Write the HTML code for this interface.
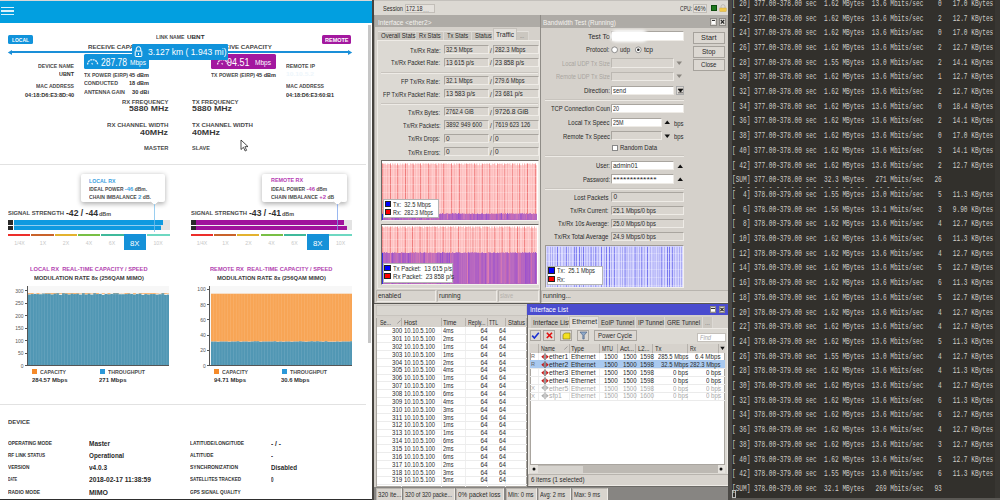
<!DOCTYPE html>
<html><head><meta charset="utf-8"><style>
html,body{margin:0;padding:0;width:1000px;height:500px;overflow:hidden;background:#fff;}
.a{position:absolute;box-sizing:border-box;}
.t{position:absolute;white-space:pre;line-height:1;transform-origin:0 0;}
</style></head><body>
<div class="a" style="left:0px;top:0px;width:372px;height:500px;background:#ffffff;"></div>
<div class="a" style="left:0px;top:0px;width:372px;height:1.2px;background:#d8d8d8;"></div>
<div class="a" style="left:0px;top:1.2px;width:371.5px;height:21.4px;background:#029fe0;"></div>
<div class="a" style="left:1.1px;top:6.7px;width:13.3px;height:1.5px;background:rgba(255,255,255,0.85);"></div>
<div class="a" style="left:1.1px;top:10.3px;width:13.3px;height:1.5px;background:rgba(255,255,255,0.85);"></div>
<div class="a" style="left:1.1px;top:13.9px;width:13.3px;height:1.5px;background:rgba(255,255,255,0.85);"></div>
<div class="a" style="left:368px;top:24.5px;width:2.6px;height:318.5px;background:#c6c6c6;"></div>
<div class="a" style="left:0px;top:498.6px;width:372px;height:1.4px;background:#2e2e2e;"></div>
<div class="a" style="left:8px;top:35px;width:25px;height:9px;background:#1193db;border-radius:1.5px;"></div>
<span class="t" id="t0" style="left:12.00px;top:38.00px;font-family:'Liberation Sans',sans-serif;font-size:5.2px;color:#fff;font-weight:700;transform:scaleX(0.9510);">LOCAL</span>
<div class="a" style="left:321.7px;top:35px;width:29.8px;height:9px;background:#a3189f;border-radius:1.5px;"></div>
<span class="t" id="t1" style="left:324.85px;top:38.00px;font-family:'Liberation Sans',sans-serif;font-size:5.2px;color:#fff;font-weight:700;transform:scaleX(1.0584);">REMOTE</span>
<div class="a" style="left:11px;top:51.4px;width:338px;height:1.3px;background:#1a8fd8;"></div>
<svg class="a" style="left:7px;top:48.5px" width="6" height="7"><path d="M0.8 3.5 L5 1 L5 6 Z" fill="#1a8fd8"/></svg>
<svg class="a" style="left:347px;top:48.5px" width="6" height="7"><path d="M5.2 3.5 L1 1 L1 6 Z" fill="#1a8fd8"/></svg>
<span class="t" id="t2" style="left:156.00px;top:36.00px;font-family:'Liberation Sans',sans-serif;font-size:4.8px;color:#4b4b4b;font-weight:700;transform:scaleX(1.0692);">LINK NAME</span>
<span class="t" id="t3" style="left:186.50px;top:35.00px;font-family:'Liberation Sans',sans-serif;font-size:5.8px;color:#2f2f2f;font-weight:700;transform:scaleX(1.0863);">UBNT</span>
<span class="t" id="t4" style="left:88.00px;top:45.00px;font-family:'Liberation Sans',sans-serif;font-size:5.9px;color:#444;font-weight:700;transform:scaleX(1.0495);">RECEIVE CAPACITY</span>
<span class="t" id="t5" style="left:211.50px;top:45.00px;font-family:'Liberation Sans',sans-serif;font-size:5.9px;color:#444;font-weight:700;transform:scaleX(1.0495);">RECEIVE CAPACITY</span>
<div class="a" style="left:84px;top:54px;width:65px;height:15.2px;background:#1193db;border-radius:1.5px;"></div>
<svg class="a" style="left:86px;top:57.5px" width="13" height="8"><path d="M1.6 6.6 A5 5 0 0 1 11.6 6.6" fill="none" stroke="rgba(255,255,255,0.85)" stroke-width="1.4" stroke-dasharray="2 0.6"/><path d="M6.8 6.4 L5.6 5.2" stroke="rgba(255,255,255,0.8)" stroke-width="1.3"/></svg>
<span class="t" id="t6" style="left:101.00px;top:58.00px;font-family:'Liberation Sans',sans-serif;font-size:10px;color:#fff;font-weight:400;transform:scaleX(0.8498);">287.78</span>
<span class="t" id="t7" style="left:130.00px;top:60.00px;font-family:'Liberation Sans',sans-serif;font-size:6.5px;color:#fff;font-weight:400;transform:scaleX(1.0059);">Mbps</span>
<div class="a" style="left:211px;top:53.5px;width:65px;height:15.5px;background:#a3189f;border-radius:1.5px;"></div>
<svg class="a" style="left:215.5px;top:57.8px" width="13" height="8"><path d="M1.6 6.6 A5 5 0 0 1 11.6 6.6" fill="none" stroke="rgba(255,255,255,0.85)" stroke-width="1.4" stroke-dasharray="2 0.6"/><path d="M6.8 6.4 L5.6 5.2" stroke="rgba(255,255,255,0.8)" stroke-width="1.3"/></svg>
<span class="t" id="t8" style="left:227.00px;top:58.00px;font-family:'Liberation Sans',sans-serif;font-size:10px;color:#fff;font-weight:400;transform:scaleX(0.8989);">94.51</span>
<span class="t" id="t9" style="left:255.00px;top:60.00px;font-family:'Liberation Sans',sans-serif;font-size:6.5px;color:#fff;font-weight:400;transform:scaleX(1.0059);">Mbps</span>
<div class="a" style="left:132px;top:43.5px;width:96.2px;height:16px;background:#1193db;border-radius:1px;"></div>
<svg class="a" style="left:134px;top:45px" width="9" height="13"><path d="M2.2 6 V4 A2.3 2.3 0 0 1 6.8 4 V6" fill="none" stroke="#fff" stroke-width="1"/><rect x="1.2" y="6" width="6.6" height="5.5" rx="0.6" fill="none" stroke="#fff" stroke-width="1"/><rect x="4" y="8" width="1" height="2" fill="#fff"/></svg>
<span class="t" id="t10" style="left:147.50px;top:48.00px;font-family:'Liberation Sans',sans-serif;font-size:8.6px;color:#fff;font-weight:400;transform:scaleX(0.9960);">3.127 km ( 1.943 mi)</span>
<span class="t" id="t11" style="left:38.00px;top:64.00px;font-family:'Liberation Sans',sans-serif;font-size:5.3px;color:#4b4b4b;font-weight:700;transform:scaleX(0.9783);">DEVICE NAME</span>
<span class="t" id="t12" style="left:59.00px;top:72.00px;font-family:'Liberation Sans',sans-serif;font-size:5.8px;color:#2f2f2f;font-weight:700;transform:scaleX(0.9311);">UBNT</span>
<span class="t" id="t13" style="left:36.00px;top:84.00px;font-family:'Liberation Sans',sans-serif;font-size:5.3px;color:#4b4b4b;font-weight:700;transform:scaleX(0.9682);">MAC ADDRESS</span>
<span class="t" id="t14" style="left:25.00px;top:93.00px;font-family:'Liberation Sans',sans-serif;font-size:5.6px;color:#2f2f2f;font-weight:700;">04:18:D6:E3:8D:40</span>
<span class="t" id="t15" style="left:84.00px;top:73.00px;font-family:'Liberation Sans',sans-serif;font-size:5.0px;color:#4b4b4b;font-weight:700;transform:scaleX(1.0218);">TX POWER (EIRP)</span>
<span class="t" id="t16" style="left:129.00px;top:73.00px;font-family:'Liberation Sans',sans-serif;font-size:5.6px;color:#2f2f2f;font-weight:700;transform:scaleX(0.9892);">45 dBm</span>
<span class="t" id="t17" style="left:84.00px;top:81.00px;font-family:'Liberation Sans',sans-serif;font-size:5.0px;color:#4b4b4b;font-weight:700;transform:scaleX(1.0641);">CONDUCTED</span>
<span class="t" id="t18" style="left:129.00px;top:81.00px;font-family:'Liberation Sans',sans-serif;font-size:5.6px;color:#2f2f2f;font-weight:700;transform:scaleX(0.9892);">18 dBm</span>
<span class="t" id="t19" style="left:84.00px;top:90.00px;font-family:'Liberation Sans',sans-serif;font-size:5.0px;color:#4b4b4b;font-weight:700;transform:scaleX(1.0745);">ANTENNA GAIN</span>
<span class="t" id="t20" style="left:132.00px;top:90.00px;font-family:'Liberation Sans',sans-serif;font-size:5.6px;color:#2f2f2f;font-weight:700;transform:scaleX(1.0121);">30 dBi</span>
<span class="t" id="t21" style="left:211.00px;top:73.00px;font-family:'Liberation Sans',sans-serif;font-size:5.0px;color:#4b4b4b;font-weight:700;transform:scaleX(1.0218);">TX POWER (EIRP)</span>
<span class="t" id="t22" style="left:256.00px;top:73.00px;font-family:'Liberation Sans',sans-serif;font-size:5.6px;color:#2f2f2f;font-weight:700;transform:scaleX(0.9892);">45 dBm</span>
<span class="t" id="t23" style="left:286.00px;top:64.00px;font-family:'Liberation Sans',sans-serif;font-size:5.3px;color:#4b4b4b;font-weight:700;transform:scaleX(0.9952);">REMOTE IP</span>
<span class="t" id="t24" style="left:286.00px;top:72.00px;font-family:'Liberation Sans',sans-serif;font-size:5.6px;color:#eef6fb;font-weight:700;transform:scaleX(1.1995);">10.10.5.2</span>
<span class="t" id="t25" style="left:286.00px;top:84.00px;font-family:'Liberation Sans',sans-serif;font-size:5.3px;color:#4b4b4b;font-weight:700;transform:scaleX(0.9682);">MAC ADDRESS</span>
<span class="t" id="t26" style="left:286.00px;top:93.00px;font-family:'Liberation Sans',sans-serif;font-size:5.6px;color:#2f2f2f;font-weight:700;transform:scaleX(0.9771);">04:18:D6:E3:60:B1</span>
<span class="t" id="t27" style="left:121.50px;top:100.00px;font-family:'Liberation Sans',sans-serif;font-size:5.3px;color:#4b4b4b;font-weight:700;transform:scaleX(1.1047);">RX FREQUENCY</span>
<span class="t" id="t28" style="left:128.50px;top:105.00px;font-family:'Liberation Sans',sans-serif;font-size:8.1px;color:#383838;font-weight:700;transform:scaleX(1.0707);">5880 MHz</span>
<span class="t" id="t29" style="left:192.00px;top:100.00px;font-family:'Liberation Sans',sans-serif;font-size:5.3px;color:#4b4b4b;font-weight:700;transform:scaleX(1.1205);">TX FREQUENCY</span>
<span class="t" id="t30" style="left:192.00px;top:105.00px;font-family:'Liberation Sans',sans-serif;font-size:8.1px;color:#383838;font-weight:700;transform:scaleX(1.0843);">5880 MHz</span>
<span class="t" id="t31" style="left:106.50px;top:123.00px;font-family:'Liberation Sans',sans-serif;font-size:5.3px;color:#4b4b4b;font-weight:700;transform:scaleX(1.1502);">RX CHANNEL WIDTH</span>
<span class="t" id="t32" style="left:140.00px;top:129.00px;font-family:'Liberation Sans',sans-serif;font-size:8.1px;color:#383838;font-weight:700;transform:scaleX(1.0920);">40MHz</span>
<span class="t" id="t33" style="left:192.00px;top:123.00px;font-family:'Liberation Sans',sans-serif;font-size:5.3px;color:#4b4b4b;font-weight:700;transform:scaleX(1.1537);">TX CHANNEL WIDTH</span>
<span class="t" id="t34" style="left:192.00px;top:129.00px;font-family:'Liberation Sans',sans-serif;font-size:8.1px;color:#383838;font-weight:700;transform:scaleX(1.0920);">40MHz</span>
<span class="t" id="t35" style="left:143.50px;top:146.00px;font-family:'Liberation Sans',sans-serif;font-size:5.3px;color:#4b4b4b;font-weight:700;transform:scaleX(1.0950);">MASTER</span>
<span class="t" id="t36" style="left:192.00px;top:146.00px;font-family:'Liberation Sans',sans-serif;font-size:5.3px;color:#4b4b4b;font-weight:700;transform:scaleX(1.0416);">SLAVE</span>
<svg class="a" style="left:240px;top:139px" width="9" height="13"><path d="M1 1 L1 10.5 L3.4 8.3 L5.2 12 L6.6 11.3 L4.9 7.7 L8 7.6 Z" fill="#fff" stroke="#222" stroke-width="0.8"/></svg>
<div class="a" style="left:0px;top:164.2px;width:366px;height:1px;background:#e2e2e2;"></div>
<div class="a" style="left:80.5px;top:173.5px;width:84px;height:28.5px;background:#fff;border-radius:2px;box-shadow:0 1.5px 5px rgba(0,0,0,0.32);"></div>
<svg class="a" style="left:149.8px;top:201.0px" width="9" height="6"><path d="M0 0 L4.5 4.6 L9 0" fill="#fff" stroke="rgba(0,0,0,0.12)" stroke-width="0.8"/><rect x="0.5" y="0" width="8" height="1.2" fill="#fff"/></svg>
<span class="t" id="t37" style="left:89.00px;top:179.00px;font-family:'Liberation Sans',sans-serif;font-size:5.4px;color:#3aa0e0;font-weight:700;transform:scaleX(0.9653);">LOCAL RX</span>
<span class="t" id="t38" style="left:89.00px;top:186.00px;font-family:'Liberation Sans',sans-serif;font-size:5.0px;color:#4b4b4b;font-weight:700;transform:scaleX(0.9807);">IDEAL POWER <span style="color:#3aa0e0;font-size:6px">-46</span> dBm.</span>
<span class="t" id="t39" style="left:89.00px;top:194.00px;font-family:'Liberation Sans',sans-serif;font-size:5.0px;color:#4b4b4b;font-weight:700;transform:scaleX(1.0097);">CHAIN IMBALANCE <span style="color:#3aa0e0;font-size:6px">2</span> dB.</span>
<div class="a" style="left:262.3px;top:173.5px;width:84.4px;height:28.7px;background:#fff;border-radius:2px;box-shadow:0 1.5px 5px rgba(0,0,0,0.32);"></div>
<svg class="a" style="left:332.5px;top:201.2px" width="9" height="6"><path d="M0 0 L4.5 4.6 L9 0" fill="#fff" stroke="rgba(0,0,0,0.12)" stroke-width="0.8"/><rect x="0.5" y="0" width="8" height="1.2" fill="#fff"/></svg>
<span class="t" id="t40" style="left:271.00px;top:178.00px;font-family:'Liberation Sans',sans-serif;font-size:5.4px;color:#b63db3;font-weight:700;">REMOTE RX</span>
<span class="t" id="t41" style="left:271.00px;top:186.00px;font-family:'Liberation Sans',sans-serif;font-size:5.0px;color:#4b4b4b;font-weight:700;transform:scaleX(0.9697);">IDEAL POWER <span style="color:#b63db3;font-size:6px">-46</span> dBm</span>
<span class="t" id="t42" style="left:271.00px;top:194.00px;font-family:'Liberation Sans',sans-serif;font-size:5.0px;color:#4b4b4b;font-weight:700;transform:scaleX(0.9919);">CHAIN IMBALANCE <span style="color:#b63db3;font-size:6px">+2</span> dB</span>
<span class="t" id="t43" style="left:8.00px;top:211.00px;font-family:'Liberation Sans',sans-serif;font-size:5.5px;color:#4a4a4a;font-weight:700;transform:scaleX(1.0673);">SIGNAL STRENGTH</span>
<span class="t" id="t44" style="left:66.00px;top:209.00px;font-family:'Liberation Sans',sans-serif;font-size:9.2px;color:#2f2f2f;font-weight:700;transform:scaleX(0.9352);">-42 / -44</span>
<span class="t" id="t45" style="left:99.30px;top:212.00px;font-family:'Liberation Sans',sans-serif;font-size:5.5px;color:#4b4b4b;font-weight:700;transform:scaleX(0.9808);">dBm</span>
<div class="a" style="left:13.5px;top:220px;width:156.0px;height:10px;background:#e3e3e3;"></div>
<div class="a" style="left:8px;top:220px;width:5.2px;height:4.5px;background:#2a2a2a;"></div>
<div class="a" style="left:8px;top:225.8px;width:5.2px;height:4.2px;background:#2a2a2a;"></div>
<div class="a" style="left:13.5px;top:220px;width:149.0px;height:4.5px;background:#0e9ae0;"></div>
<div class="a" style="left:13.5px;top:225.8px;width:147.0px;height:4.2px;background:#0e9ae0;"></div>
<div class="a" style="left:13.5px;top:224.5px;width:147.0px;height:1.3px;background:#8fcdf0;"></div>
<div class="a" style="left:8px;top:234.2px;width:22.4px;height:2.3px;background:#ec2e2a;"></div>
<div class="a" style="left:31.4px;top:234.2px;width:22.200000000000003px;height:2.3px;background:#c9622a;"></div>
<div class="a" style="left:54.6px;top:234.2px;width:22.4px;height:2.3px;background:#e3b22f;"></div>
<div class="a" style="left:78px;top:234.2px;width:22.200000000000003px;height:2.3px;background:#78bf45;"></div>
<div class="a" style="left:101.2px;top:234.2px;width:22.599999999999994px;height:2.3px;background:#3fb99b;"></div>
<div class="a" style="left:146.5px;top:234.2px;width:23.0px;height:2.3px;background:#6ed8c2;"></div>
<div class="a" style="left:124px;top:234.2px;width:22.3px;height:16.3px;background:#1591d8;"></div>
<span class="t" id="t46" style="left:14.16px;top:241.00px;font-family:'Liberation Sans',sans-serif;font-size:5.2px;color:#c8c8c8;font-weight:400;">1/4X</span>
<span class="t" id="t47" style="left:39.82px;top:241.00px;font-family:'Liberation Sans',sans-serif;font-size:5.2px;color:#c8c8c8;font-weight:400;">1X</span>
<span class="t" id="t48" style="left:62.82px;top:241.00px;font-family:'Liberation Sans',sans-serif;font-size:5.2px;color:#c8c8c8;font-weight:400;">2X</span>
<span class="t" id="t49" style="left:85.82px;top:241.00px;font-family:'Liberation Sans',sans-serif;font-size:5.2px;color:#c8c8c8;font-weight:400;">4X</span>
<span class="t" id="t50" style="left:108.82px;top:241.00px;font-family:'Liberation Sans',sans-serif;font-size:5.2px;color:#c8c8c8;font-weight:400;">6X</span>
<span class="t" id="t51" style="left:153.38px;top:241.00px;font-family:'Liberation Sans',sans-serif;font-size:5.2px;color:#c8c8c8;font-weight:400;">10X</span>
<span class="t" id="t52" style="left:130.45px;top:240.00px;font-family:'Liberation Sans',sans-serif;font-size:7.2px;color:#fff;font-weight:400;transform:scaleX(1.0799);">8X</span>
<span class="t" id="t53" style="left:190.50px;top:211.00px;font-family:'Liberation Sans',sans-serif;font-size:5.5px;color:#4a4a4a;font-weight:700;transform:scaleX(1.0673);">SIGNAL STRENGTH</span>
<span class="t" id="t54" style="left:248.50px;top:209.00px;font-family:'Liberation Sans',sans-serif;font-size:9.2px;color:#2f2f2f;font-weight:700;transform:scaleX(0.9352);">-43 / -41</span>
<span class="t" id="t55" style="left:281.80px;top:212.00px;font-family:'Liberation Sans',sans-serif;font-size:5.5px;color:#4b4b4b;font-weight:700;transform:scaleX(0.9808);">dBm</span>
<div class="a" style="left:196.0px;top:220px;width:156.0px;height:10px;background:#e3e3e3;"></div>
<div class="a" style="left:190.5px;top:220px;width:5.2px;height:4.5px;background:#2a2a2a;"></div>
<div class="a" style="left:190.5px;top:225.8px;width:5.2px;height:4.2px;background:#2a2a2a;"></div>
<div class="a" style="left:196.0px;top:220px;width:148.0px;height:4.5px;background:#a0139c;"></div>
<div class="a" style="left:196.0px;top:225.8px;width:150.5px;height:4.2px;background:#a0139c;"></div>
<div class="a" style="left:196.0px;top:224.5px;width:148.0px;height:1.3px;background:rgba(255,255,255,0.45);"></div>
<div class="a" style="left:190.5px;top:234.2px;width:22.4px;height:2.3px;background:#ec2e2a;"></div>
<div class="a" style="left:213.9px;top:234.2px;width:22.200000000000003px;height:2.3px;background:#c9622a;"></div>
<div class="a" style="left:237.1px;top:234.2px;width:22.4px;height:2.3px;background:#e3b22f;"></div>
<div class="a" style="left:260.5px;top:234.2px;width:22.200000000000003px;height:2.3px;background:#78bf45;"></div>
<div class="a" style="left:283.7px;top:234.2px;width:22.599999999999994px;height:2.3px;background:#3fb99b;"></div>
<div class="a" style="left:329.0px;top:234.2px;width:23.0px;height:2.3px;background:#6ed8c2;"></div>
<div class="a" style="left:306.5px;top:234.2px;width:22.3px;height:16.3px;background:#1591d8;"></div>
<span class="t" id="t56" style="left:196.66px;top:241.00px;font-family:'Liberation Sans',sans-serif;font-size:5.2px;color:#c8c8c8;font-weight:400;">1/4X</span>
<span class="t" id="t57" style="left:222.32px;top:241.00px;font-family:'Liberation Sans',sans-serif;font-size:5.2px;color:#c8c8c8;font-weight:400;">1X</span>
<span class="t" id="t58" style="left:245.32px;top:241.00px;font-family:'Liberation Sans',sans-serif;font-size:5.2px;color:#c8c8c8;font-weight:400;">2X</span>
<span class="t" id="t59" style="left:268.32px;top:241.00px;font-family:'Liberation Sans',sans-serif;font-size:5.2px;color:#c8c8c8;font-weight:400;">4X</span>
<span class="t" id="t60" style="left:291.32px;top:241.00px;font-family:'Liberation Sans',sans-serif;font-size:5.2px;color:#c8c8c8;font-weight:400;">6X</span>
<span class="t" id="t61" style="left:335.88px;top:241.00px;font-family:'Liberation Sans',sans-serif;font-size:5.2px;color:#c8c8c8;font-weight:400;">10X</span>
<span class="t" id="t62" style="left:312.95px;top:240.00px;font-family:'Liberation Sans',sans-serif;font-size:7.2px;color:#fff;font-weight:400;transform:scaleX(1.0799);">8X</span>
<div class="a" style="left:154px;top:204px;width:0.7px;height:28px;background:rgba(120,190,235,0.75);"></div>
<div class="a" style="left:336.7px;top:204px;width:0.7px;height:26px;background:rgba(120,160,235,0.75);"></div>
<span class="t" id="t63" style="left:30.00px;top:267.00px;font-family:'Liberation Sans',sans-serif;font-size:5.9px;color:#b23fb0;font-weight:700;transform:scaleX(0.9677);">LOCAL RX  REAL-TIME CAPACITY / SPEED</span>
<span class="t" id="t64" style="left:34.00px;top:276.00px;font-family:'Liberation Sans',sans-serif;font-size:5.6px;color:#3a3a3a;font-weight:700;transform:scaleX(1.0370);">MODULATION RATE 8x (256QAM MIMO)</span>
<div class="a" style="left:27.6px;top:285.7px;width:141.9px;height:79.8px;background:#f7f7f7;"></div>
<svg class="a" style="left:28.400000000000002px;top:285.7px" width="141.10" height="80"><rect x="0" y="7.20" width="141.10" height="1.10" fill="#f8a555"/><rect x="0" y="8.80" width="141.10" height="71.50" fill="#5197b4"/><rect x="0.00" y="8.70" width="2.84" height="1.6" fill="#5197b4"/><rect x="2.20" y="7.20" width="0.6" height="72.60" fill="rgba(255,255,255,0.16)"/><rect x="2.84" y="8.10" width="2.84" height="1.6" fill="#5197b4"/><rect x="5.04" y="7.20" width="0.6" height="72.60" fill="rgba(255,255,255,0.16)"/><rect x="5.68" y="7.70" width="2.84" height="1.6" fill="#5197b4"/><rect x="5.68" y="6.90" width="2.84" height="0.9" fill="#f8f8f8"/><rect x="7.88" y="7.20" width="0.6" height="72.60" fill="rgba(255,255,255,0.16)"/><rect x="8.52" y="8.10" width="2.84" height="1.6" fill="#5197b4"/><rect x="10.72" y="7.20" width="0.6" height="72.60" fill="rgba(255,255,255,0.16)"/><rect x="11.36" y="8.10" width="2.84" height="1.6" fill="#5197b4"/><rect x="11.36" y="7.30" width="2.84" height="0.9" fill="#f8f8f8"/><rect x="13.56" y="7.20" width="0.6" height="72.60" fill="rgba(255,255,255,0.16)"/><rect x="14.20" y="7.30" width="2.84" height="1.6" fill="#5197b4"/><rect x="14.20" y="6.50" width="2.84" height="0.9" fill="#f8f8f8"/><rect x="16.40" y="7.20" width="0.6" height="72.60" fill="rgba(255,255,255,0.16)"/><rect x="17.04" y="7.70" width="2.84" height="1.6" fill="#5197b4"/><rect x="19.24" y="7.20" width="0.6" height="72.60" fill="rgba(255,255,255,0.16)"/><rect x="19.88" y="7.70" width="2.84" height="1.6" fill="#5197b4"/><rect x="22.08" y="7.20" width="0.6" height="72.60" fill="rgba(255,255,255,0.16)"/><rect x="22.72" y="8.70" width="2.84" height="1.6" fill="#5197b4"/><rect x="24.92" y="7.20" width="0.6" height="72.60" fill="rgba(255,255,255,0.16)"/><rect x="25.56" y="7.70" width="2.84" height="1.6" fill="#5197b4"/><rect x="27.76" y="7.20" width="0.6" height="72.60" fill="rgba(255,255,255,0.16)"/><rect x="28.40" y="7.30" width="2.84" height="1.6" fill="#5197b4"/><rect x="30.60" y="7.20" width="0.6" height="72.60" fill="rgba(255,255,255,0.16)"/><rect x="31.24" y="8.70" width="2.84" height="1.6" fill="#5197b4"/><rect x="31.24" y="7.90" width="2.84" height="0.9" fill="#f8f8f8"/><rect x="33.44" y="7.20" width="0.6" height="72.60" fill="rgba(255,255,255,0.16)"/><rect x="34.08" y="7.30" width="2.84" height="1.6" fill="#5197b4"/><rect x="36.28" y="7.20" width="0.6" height="72.60" fill="rgba(255,255,255,0.16)"/><rect x="36.92" y="7.70" width="2.84" height="1.6" fill="#5197b4"/><rect x="39.12" y="7.20" width="0.6" height="72.60" fill="rgba(255,255,255,0.16)"/><rect x="39.76" y="8.70" width="2.84" height="1.6" fill="#5197b4"/><rect x="41.96" y="7.20" width="0.6" height="72.60" fill="rgba(255,255,255,0.16)"/><rect x="42.60" y="7.70" width="2.84" height="1.6" fill="#5197b4"/><rect x="44.80" y="7.20" width="0.6" height="72.60" fill="rgba(255,255,255,0.16)"/><rect x="45.44" y="8.10" width="2.84" height="1.6" fill="#5197b4"/><rect x="47.64" y="7.20" width="0.6" height="72.60" fill="rgba(255,255,255,0.16)"/><rect x="48.28" y="7.70" width="2.84" height="1.6" fill="#5197b4"/><rect x="50.48" y="7.20" width="0.6" height="72.60" fill="rgba(255,255,255,0.16)"/><rect x="51.12" y="8.40" width="2.84" height="1.6" fill="#5197b4"/><rect x="51.12" y="7.60" width="2.84" height="0.9" fill="#f8f8f8"/><rect x="53.32" y="7.20" width="0.6" height="72.60" fill="rgba(255,255,255,0.16)"/><rect x="53.96" y="7.30" width="2.84" height="1.6" fill="#5197b4"/><rect x="56.16" y="7.20" width="0.6" height="72.60" fill="rgba(255,255,255,0.16)"/><rect x="56.80" y="8.70" width="2.84" height="1.6" fill="#5197b4"/><rect x="59.00" y="7.20" width="0.6" height="72.60" fill="rgba(255,255,255,0.16)"/><rect x="59.64" y="7.70" width="2.84" height="1.6" fill="#5197b4"/><rect x="61.84" y="7.20" width="0.6" height="72.60" fill="rgba(255,255,255,0.16)"/><rect x="62.48" y="8.40" width="2.84" height="1.6" fill="#5197b4"/><rect x="62.48" y="7.60" width="2.84" height="0.9" fill="#f8f8f8"/><rect x="64.68" y="7.20" width="0.6" height="72.60" fill="rgba(255,255,255,0.16)"/><rect x="65.32" y="7.30" width="2.84" height="1.6" fill="#5197b4"/><rect x="67.52" y="7.20" width="0.6" height="72.60" fill="rgba(255,255,255,0.16)"/><rect x="68.16" y="8.10" width="2.84" height="1.6" fill="#5197b4"/><rect x="70.36" y="7.20" width="0.6" height="72.60" fill="rgba(255,255,255,0.16)"/><rect x="71.00" y="7.70" width="2.84" height="1.6" fill="#5197b4"/><rect x="71.00" y="6.90" width="2.84" height="0.9" fill="#f8f8f8"/><rect x="73.20" y="7.20" width="0.6" height="72.60" fill="rgba(255,255,255,0.16)"/><rect x="73.84" y="8.70" width="2.84" height="1.6" fill="#5197b4"/><rect x="73.84" y="7.90" width="2.84" height="0.9" fill="#f8f8f8"/><rect x="76.04" y="7.20" width="0.6" height="72.60" fill="rgba(255,255,255,0.16)"/><rect x="76.68" y="7.70" width="2.84" height="1.6" fill="#5197b4"/><rect x="76.68" y="6.90" width="2.84" height="0.9" fill="#f8f8f8"/><rect x="78.88" y="7.20" width="0.6" height="72.60" fill="rgba(255,255,255,0.16)"/><rect x="79.52" y="8.40" width="2.84" height="1.6" fill="#5197b4"/><rect x="81.72" y="7.20" width="0.6" height="72.60" fill="rgba(255,255,255,0.16)"/><rect x="82.36" y="7.70" width="2.84" height="1.6" fill="#5197b4"/><rect x="82.36" y="6.90" width="2.84" height="0.9" fill="#f8f8f8"/><rect x="84.56" y="7.20" width="0.6" height="72.60" fill="rgba(255,255,255,0.16)"/><rect x="85.20" y="7.30" width="2.84" height="1.6" fill="#5197b4"/><rect x="87.40" y="7.20" width="0.6" height="72.60" fill="rgba(255,255,255,0.16)"/><rect x="88.04" y="7.30" width="2.84" height="1.6" fill="#5197b4"/><rect x="90.24" y="7.20" width="0.6" height="72.60" fill="rgba(255,255,255,0.16)"/><rect x="90.88" y="8.10" width="2.84" height="1.6" fill="#5197b4"/><rect x="90.88" y="7.30" width="2.84" height="0.9" fill="#f8f8f8"/><rect x="93.08" y="7.20" width="0.6" height="72.60" fill="rgba(255,255,255,0.16)"/><rect x="93.72" y="8.10" width="2.84" height="1.6" fill="#5197b4"/><rect x="93.72" y="7.30" width="2.84" height="0.9" fill="#f8f8f8"/><rect x="95.92" y="7.20" width="0.6" height="72.60" fill="rgba(255,255,255,0.16)"/><rect x="96.56" y="8.10" width="2.84" height="1.6" fill="#5197b4"/><rect x="98.76" y="7.20" width="0.6" height="72.60" fill="rgba(255,255,255,0.16)"/><rect x="99.40" y="7.70" width="2.84" height="1.6" fill="#5197b4"/><rect x="101.60" y="7.20" width="0.6" height="72.60" fill="rgba(255,255,255,0.16)"/><rect x="102.24" y="7.70" width="2.84" height="1.6" fill="#5197b4"/><rect x="102.24" y="6.90" width="2.84" height="0.9" fill="#f8f8f8"/><rect x="104.44" y="7.20" width="0.6" height="72.60" fill="rgba(255,255,255,0.16)"/><rect x="105.08" y="8.70" width="2.84" height="1.6" fill="#5197b4"/><rect x="107.28" y="7.20" width="0.6" height="72.60" fill="rgba(255,255,255,0.16)"/><rect x="107.92" y="7.70" width="2.84" height="1.6" fill="#5197b4"/><rect x="107.92" y="6.90" width="2.84" height="0.9" fill="#f8f8f8"/><rect x="110.12" y="7.20" width="0.6" height="72.60" fill="rgba(255,255,255,0.16)"/><rect x="110.76" y="7.70" width="2.84" height="1.6" fill="#5197b4"/><rect x="112.96" y="7.20" width="0.6" height="72.60" fill="rgba(255,255,255,0.16)"/><rect x="113.60" y="8.70" width="2.84" height="1.6" fill="#5197b4"/><rect x="113.60" y="7.90" width="2.84" height="0.9" fill="#f8f8f8"/><rect x="115.80" y="7.20" width="0.6" height="72.60" fill="rgba(255,255,255,0.16)"/><rect x="116.44" y="8.10" width="2.84" height="1.6" fill="#5197b4"/><rect x="118.64" y="7.20" width="0.6" height="72.60" fill="rgba(255,255,255,0.16)"/><rect x="119.28" y="8.70" width="2.84" height="1.6" fill="#5197b4"/><rect x="121.48" y="7.20" width="0.6" height="72.60" fill="rgba(255,255,255,0.16)"/><rect x="122.12" y="8.10" width="2.84" height="1.6" fill="#5197b4"/><rect x="124.32" y="7.20" width="0.6" height="72.60" fill="rgba(255,255,255,0.16)"/><rect x="124.96" y="8.10" width="2.84" height="1.6" fill="#5197b4"/><rect x="127.16" y="7.20" width="0.6" height="72.60" fill="rgba(255,255,255,0.16)"/><rect x="127.80" y="8.40" width="2.84" height="1.6" fill="#5197b4"/><rect x="127.80" y="7.60" width="2.84" height="0.9" fill="#f8f8f8"/><rect x="130.00" y="7.20" width="0.6" height="72.60" fill="rgba(255,255,255,0.16)"/><rect x="130.64" y="8.10" width="2.84" height="1.6" fill="#5197b4"/><rect x="130.64" y="7.30" width="2.84" height="0.9" fill="#f8f8f8"/><rect x="132.84" y="7.20" width="0.6" height="72.60" fill="rgba(255,255,255,0.16)"/><rect x="133.48" y="7.30" width="2.84" height="1.6" fill="#5197b4"/><rect x="135.68" y="7.20" width="0.6" height="72.60" fill="rgba(255,255,255,0.16)"/><rect x="136.32" y="8.70" width="2.84" height="1.6" fill="#5197b4"/><rect x="136.32" y="7.90" width="2.84" height="0.9" fill="#f8f8f8"/><rect x="138.52" y="7.20" width="0.6" height="72.60" fill="rgba(255,255,255,0.16)"/><rect x="139.16" y="8.40" width="1.94" height="1.6" fill="#5197b4"/><rect x="139.16" y="7.60" width="1.94" height="0.9" fill="#f8f8f8"/><rect x="141.36" y="7.20" width="0.6" height="72.60" fill="rgba(255,255,255,0.16)"/></svg>
<div class="a" style="left:27.3px;top:285.5px;width:1.0px;height:80.6px;background:#555;"></div>
<div class="a" style="left:24.6px;top:365.3px;width:144.9px;height:0.8px;background:#555;"></div>
<div class="a" style="left:24.6px;top:290.20000000000005px;width:3px;height:0.8px;background:#555;"></div>
<span class="t" id="t65" style="left:15.26px;top:289.00px;font-family:'Liberation Sans',sans-serif;font-size:5.0px;color:#555;font-weight:400;">300</span>
<div class="a" style="left:24.6px;top:302.70000000000005px;width:3px;height:0.8px;background:#555;"></div>
<span class="t" id="t66" style="left:15.26px;top:301.00px;font-family:'Liberation Sans',sans-serif;font-size:5.0px;color:#555;font-weight:400;">250</span>
<div class="a" style="left:24.6px;top:315.20000000000005px;width:3px;height:0.8px;background:#555;"></div>
<span class="t" id="t67" style="left:15.26px;top:314.00px;font-family:'Liberation Sans',sans-serif;font-size:5.0px;color:#555;font-weight:400;">200</span>
<div class="a" style="left:24.6px;top:327.70000000000005px;width:3px;height:0.8px;background:#555;"></div>
<span class="t" id="t68" style="left:15.26px;top:326.00px;font-family:'Liberation Sans',sans-serif;font-size:5.0px;color:#555;font-weight:400;">150</span>
<div class="a" style="left:24.6px;top:340.20000000000005px;width:3px;height:0.8px;background:#555;"></div>
<span class="t" id="t69" style="left:15.26px;top:339.00px;font-family:'Liberation Sans',sans-serif;font-size:5.0px;color:#555;font-weight:400;">100</span>
<div class="a" style="left:24.6px;top:352.70000000000005px;width:3px;height:0.8px;background:#555;"></div>
<span class="t" id="t70" style="left:18.04px;top:351.00px;font-family:'Liberation Sans',sans-serif;font-size:5.0px;color:#555;font-weight:400;">50</span>
<div class="a" style="left:24.6px;top:365.20000000000005px;width:3px;height:0.8px;background:#555;"></div>
<span class="t" id="t71" style="left:20.82px;top:364.00px;font-family:'Liberation Sans',sans-serif;font-size:5.0px;color:#555;font-weight:400;">0</span>
<div class="a" style="left:32px;top:369px;width:5px;height:5px;background:#f58a2a;"></div>
<span class="t" id="t72" style="left:40.00px;top:370.00px;font-family:'Liberation Sans',sans-serif;font-size:5.2px;color:#4b4b4b;font-weight:700;transform:scaleX(0.9946);">CAPACITY</span>
<span class="t" id="t73" style="left:32.00px;top:377.00px;font-family:'Liberation Sans',sans-serif;font-size:6.0px;color:#2f2f2f;font-weight:700;transform:scaleX(0.9947);">284.57 Mbps</span>
<div class="a" style="left:99.5px;top:369px;width:5px;height:5px;background:#2b98d9;"></div>
<span class="t" id="t74" style="left:107.50px;top:370.00px;font-family:'Liberation Sans',sans-serif;font-size:5.2px;color:#4b4b4b;font-weight:700;transform:scaleX(1.0107);">THROUGHPUT</span>
<span class="t" id="t75" style="left:99.00px;top:377.00px;font-family:'Liberation Sans',sans-serif;font-size:6.0px;color:#2f2f2f;font-weight:700;transform:scaleX(1.0057);">271 Mbps</span>
<span class="t" id="t76" style="left:210.00px;top:267.00px;font-family:'Liberation Sans',sans-serif;font-size:5.9px;color:#b23fb0;font-weight:700;transform:scaleX(0.9687);">REMOTE RX  REAL-TIME CAPACITY / SPEED</span>
<span class="t" id="t77" style="left:217.00px;top:276.00px;font-family:'Liberation Sans',sans-serif;font-size:5.6px;color:#3a3a3a;font-weight:700;transform:scaleX(1.0275);">MODULATION RATE 8x (256QAM MIMO)</span>
<div class="a" style="left:209.7px;top:285.7px;width:142.3px;height:79.8px;background:#f7f7f7;"></div>
<svg class="a" style="left:210.5px;top:285.7px" width="141.50" height="80"><rect x="0" y="7.70" width="141.50" height="47.90" fill="#f8a555"/><rect x="0" y="56.10" width="141.50" height="24.20" fill="#5197b4"/><rect x="0.00" y="55.60" width="2.84" height="1.2" fill="#5197b4"/><rect x="2.20" y="7.70" width="0.6" height="72.10" fill="rgba(255,255,255,0.16)"/><rect x="2.84" y="55.60" width="2.84" height="1.2" fill="#5197b4"/><rect x="5.04" y="7.70" width="0.6" height="72.10" fill="rgba(255,255,255,0.16)"/><rect x="5.68" y="55.90" width="2.84" height="1.2" fill="#5197b4"/><rect x="7.88" y="7.70" width="0.6" height="72.10" fill="rgba(255,255,255,0.16)"/><rect x="8.52" y="55.60" width="2.84" height="1.2" fill="#5197b4"/><rect x="10.72" y="7.70" width="0.6" height="72.10" fill="rgba(255,255,255,0.16)"/><rect x="11.36" y="55.60" width="2.84" height="1.2" fill="#5197b4"/><rect x="13.56" y="7.70" width="0.6" height="72.10" fill="rgba(255,255,255,0.16)"/><rect x="14.20" y="55.60" width="2.84" height="1.2" fill="#5197b4"/><rect x="16.40" y="7.70" width="0.6" height="72.10" fill="rgba(255,255,255,0.16)"/><rect x="17.04" y="55.90" width="2.84" height="1.2" fill="#5197b4"/><rect x="19.24" y="7.70" width="0.6" height="72.10" fill="rgba(255,255,255,0.16)"/><rect x="19.88" y="55.60" width="2.84" height="1.2" fill="#5197b4"/><rect x="22.08" y="7.70" width="0.6" height="72.10" fill="rgba(255,255,255,0.16)"/><rect x="22.72" y="55.60" width="2.84" height="1.2" fill="#5197b4"/><rect x="24.92" y="7.70" width="0.6" height="72.10" fill="rgba(255,255,255,0.16)"/><rect x="25.56" y="55.30" width="2.84" height="1.2" fill="#5197b4"/><rect x="27.76" y="7.70" width="0.6" height="72.10" fill="rgba(255,255,255,0.16)"/><rect x="28.40" y="55.90" width="2.84" height="1.2" fill="#5197b4"/><rect x="30.60" y="7.70" width="0.6" height="72.10" fill="rgba(255,255,255,0.16)"/><rect x="31.24" y="55.60" width="2.84" height="1.2" fill="#5197b4"/><rect x="33.44" y="7.70" width="0.6" height="72.10" fill="rgba(255,255,255,0.16)"/><rect x="34.08" y="55.60" width="2.84" height="1.2" fill="#5197b4"/><rect x="36.28" y="7.70" width="0.6" height="72.10" fill="rgba(255,255,255,0.16)"/><rect x="36.92" y="55.90" width="2.84" height="1.2" fill="#5197b4"/><rect x="39.12" y="7.70" width="0.6" height="72.10" fill="rgba(255,255,255,0.16)"/><rect x="39.76" y="55.60" width="2.84" height="1.2" fill="#5197b4"/><rect x="41.96" y="7.70" width="0.6" height="72.10" fill="rgba(255,255,255,0.16)"/><rect x="42.60" y="55.30" width="2.84" height="1.2" fill="#5197b4"/><rect x="44.80" y="7.70" width="0.6" height="72.10" fill="rgba(255,255,255,0.16)"/><rect x="45.44" y="55.30" width="2.84" height="1.2" fill="#5197b4"/><rect x="47.64" y="7.70" width="0.6" height="72.10" fill="rgba(255,255,255,0.16)"/><rect x="48.28" y="55.90" width="2.84" height="1.2" fill="#5197b4"/><rect x="50.48" y="7.70" width="0.6" height="72.10" fill="rgba(255,255,255,0.16)"/><rect x="51.12" y="55.60" width="2.84" height="1.2" fill="#5197b4"/><rect x="53.32" y="7.70" width="0.6" height="72.10" fill="rgba(255,255,255,0.16)"/><rect x="53.96" y="55.60" width="2.84" height="1.2" fill="#5197b4"/><rect x="56.16" y="7.70" width="0.6" height="72.10" fill="rgba(255,255,255,0.16)"/><rect x="56.80" y="55.60" width="2.84" height="1.2" fill="#5197b4"/><rect x="59.00" y="7.70" width="0.6" height="72.10" fill="rgba(255,255,255,0.16)"/><rect x="59.64" y="55.60" width="2.84" height="1.2" fill="#5197b4"/><rect x="61.84" y="7.70" width="0.6" height="72.10" fill="rgba(255,255,255,0.16)"/><rect x="62.48" y="55.30" width="2.84" height="1.2" fill="#5197b4"/><rect x="64.68" y="7.70" width="0.6" height="72.10" fill="rgba(255,255,255,0.16)"/><rect x="65.32" y="55.90" width="2.84" height="1.2" fill="#5197b4"/><rect x="67.52" y="7.70" width="0.6" height="72.10" fill="rgba(255,255,255,0.16)"/><rect x="68.16" y="55.60" width="2.84" height="1.2" fill="#5197b4"/><rect x="70.36" y="7.70" width="0.6" height="72.10" fill="rgba(255,255,255,0.16)"/><rect x="71.00" y="55.90" width="2.84" height="1.2" fill="#5197b4"/><rect x="73.20" y="7.70" width="0.6" height="72.10" fill="rgba(255,255,255,0.16)"/><rect x="73.84" y="55.60" width="2.84" height="1.2" fill="#5197b4"/><rect x="76.04" y="7.70" width="0.6" height="72.10" fill="rgba(255,255,255,0.16)"/><rect x="76.68" y="55.60" width="2.84" height="1.2" fill="#5197b4"/><rect x="78.88" y="7.70" width="0.6" height="72.10" fill="rgba(255,255,255,0.16)"/><rect x="79.52" y="55.90" width="2.84" height="1.2" fill="#5197b4"/><rect x="81.72" y="7.70" width="0.6" height="72.10" fill="rgba(255,255,255,0.16)"/><rect x="82.36" y="55.60" width="2.84" height="1.2" fill="#5197b4"/><rect x="84.56" y="7.70" width="0.6" height="72.10" fill="rgba(255,255,255,0.16)"/><rect x="85.20" y="55.60" width="2.84" height="1.2" fill="#5197b4"/><rect x="87.40" y="7.70" width="0.6" height="72.10" fill="rgba(255,255,255,0.16)"/><rect x="88.04" y="55.30" width="2.84" height="1.2" fill="#5197b4"/><rect x="90.24" y="7.70" width="0.6" height="72.10" fill="rgba(255,255,255,0.16)"/><rect x="90.88" y="55.60" width="2.84" height="1.2" fill="#5197b4"/><rect x="93.08" y="7.70" width="0.6" height="72.10" fill="rgba(255,255,255,0.16)"/><rect x="93.72" y="55.90" width="2.84" height="1.2" fill="#5197b4"/><rect x="95.92" y="7.70" width="0.6" height="72.10" fill="rgba(255,255,255,0.16)"/><rect x="96.56" y="55.60" width="2.84" height="1.2" fill="#5197b4"/><rect x="98.76" y="7.70" width="0.6" height="72.10" fill="rgba(255,255,255,0.16)"/><rect x="99.40" y="55.30" width="2.84" height="1.2" fill="#5197b4"/><rect x="101.60" y="7.70" width="0.6" height="72.10" fill="rgba(255,255,255,0.16)"/><rect x="102.24" y="55.60" width="2.84" height="1.2" fill="#5197b4"/><rect x="104.44" y="7.70" width="0.6" height="72.10" fill="rgba(255,255,255,0.16)"/><rect x="105.08" y="55.30" width="2.84" height="1.2" fill="#5197b4"/><rect x="107.28" y="7.70" width="0.6" height="72.10" fill="rgba(255,255,255,0.16)"/><rect x="107.92" y="55.60" width="2.84" height="1.2" fill="#5197b4"/><rect x="110.12" y="7.70" width="0.6" height="72.10" fill="rgba(255,255,255,0.16)"/><rect x="110.76" y="55.90" width="2.84" height="1.2" fill="#5197b4"/><rect x="112.96" y="7.70" width="0.6" height="72.10" fill="rgba(255,255,255,0.16)"/><rect x="113.60" y="55.30" width="2.84" height="1.2" fill="#5197b4"/><rect x="115.80" y="7.70" width="0.6" height="72.10" fill="rgba(255,255,255,0.16)"/><rect x="116.44" y="55.90" width="2.84" height="1.2" fill="#5197b4"/><rect x="118.64" y="7.70" width="0.6" height="72.10" fill="rgba(255,255,255,0.16)"/><rect x="119.28" y="55.90" width="2.84" height="1.2" fill="#5197b4"/><rect x="121.48" y="7.70" width="0.6" height="72.10" fill="rgba(255,255,255,0.16)"/><rect x="122.12" y="55.90" width="2.84" height="1.2" fill="#5197b4"/><rect x="124.32" y="7.70" width="0.6" height="72.10" fill="rgba(255,255,255,0.16)"/><rect x="124.96" y="55.60" width="2.84" height="1.2" fill="#5197b4"/><rect x="127.16" y="7.70" width="0.6" height="72.10" fill="rgba(255,255,255,0.16)"/><rect x="127.80" y="55.90" width="2.84" height="1.2" fill="#5197b4"/><rect x="130.00" y="7.70" width="0.6" height="72.10" fill="rgba(255,255,255,0.16)"/><rect x="130.64" y="55.60" width="2.84" height="1.2" fill="#5197b4"/><rect x="132.84" y="7.70" width="0.6" height="72.10" fill="rgba(255,255,255,0.16)"/><rect x="133.48" y="55.60" width="2.84" height="1.2" fill="#5197b4"/><rect x="135.68" y="7.70" width="0.6" height="72.10" fill="rgba(255,255,255,0.16)"/><rect x="136.32" y="55.60" width="2.84" height="1.2" fill="#5197b4"/><rect x="138.52" y="7.70" width="0.6" height="72.10" fill="rgba(255,255,255,0.16)"/><rect x="139.16" y="55.30" width="2.34" height="1.2" fill="#5197b4"/><rect x="141.36" y="7.70" width="0.6" height="72.10" fill="rgba(255,255,255,0.16)"/></svg>
<div class="a" style="left:209.39999999999998px;top:285.5px;width:1.0px;height:80.6px;background:#555;"></div>
<div class="a" style="left:206.7px;top:365.3px;width:145.3px;height:0.8px;background:#555;"></div>
<div class="a" style="left:206.7px;top:288.70000000000005px;width:3px;height:0.8px;background:#555;"></div>
<span class="t" id="t78" style="left:197.36px;top:287.00px;font-family:'Liberation Sans',sans-serif;font-size:5.0px;color:#555;font-weight:400;">100</span>
<div class="a" style="left:206.7px;top:304.0px;width:3px;height:0.8px;background:#555;"></div>
<span class="t" id="t79" style="left:200.14px;top:303.00px;font-family:'Liberation Sans',sans-serif;font-size:5.0px;color:#555;font-weight:400;">80</span>
<div class="a" style="left:206.7px;top:319.3px;width:3px;height:0.8px;background:#555;"></div>
<span class="t" id="t80" style="left:200.14px;top:318.00px;font-family:'Liberation Sans',sans-serif;font-size:5.0px;color:#555;font-weight:400;">60</span>
<div class="a" style="left:206.7px;top:334.6px;width:3px;height:0.8px;background:#555;"></div>
<span class="t" id="t81" style="left:200.14px;top:333.00px;font-family:'Liberation Sans',sans-serif;font-size:5.0px;color:#555;font-weight:400;">40</span>
<div class="a" style="left:206.7px;top:349.90000000000003px;width:3px;height:0.8px;background:#555;"></div>
<span class="t" id="t82" style="left:200.14px;top:348.00px;font-family:'Liberation Sans',sans-serif;font-size:5.0px;color:#555;font-weight:400;">20</span>
<div class="a" style="left:206.7px;top:365.20000000000005px;width:3px;height:0.8px;background:#555;"></div>
<span class="t" id="t83" style="left:202.92px;top:364.00px;font-family:'Liberation Sans',sans-serif;font-size:5.0px;color:#555;font-weight:400;">0</span>
<div class="a" style="left:214px;top:369px;width:5px;height:5px;background:#f58a2a;"></div>
<span class="t" id="t84" style="left:222.00px;top:370.00px;font-family:'Liberation Sans',sans-serif;font-size:5.2px;color:#4b4b4b;font-weight:700;transform:scaleX(0.9946);">CAPACITY</span>
<span class="t" id="t85" style="left:214.00px;top:377.00px;font-family:'Liberation Sans',sans-serif;font-size:6.0px;color:#2f2f2f;font-weight:700;transform:scaleX(0.9889);">94.71 Mbps</span>
<div class="a" style="left:281.5px;top:369px;width:5px;height:5px;background:#2b98d9;"></div>
<span class="t" id="t86" style="left:289.50px;top:370.00px;font-family:'Liberation Sans',sans-serif;font-size:5.2px;color:#4b4b4b;font-weight:700;transform:scaleX(1.0107);">THROUGHPUT</span>
<span class="t" id="t87" style="left:281.00px;top:377.00px;font-family:'Liberation Sans',sans-serif;font-size:6.0px;color:#2f2f2f;font-weight:700;transform:scaleX(0.9822);">30.6 Mbps</span>
<div class="a" style="left:0px;top:404.2px;width:366px;height:1px;background:#e2e2e2;"></div>
<span class="t" id="t88" style="left:8.00px;top:419.00px;font-family:'Liberation Sans',sans-serif;font-size:6.0px;color:#3c3c3c;font-weight:700;transform:scaleX(0.9846);">DEVICE</span>
<span class="t" id="t89" style="left:8.00px;top:442.00px;font-family:'Liberation Sans',sans-serif;font-size:4.6px;color:#333;font-weight:700;transform:scaleX(1.0468);">OPERATING MODE</span>
<span class="t" id="t90" style="left:89.00px;top:441.00px;font-family:'Liberation Sans',sans-serif;font-size:6.4px;color:#2a2a2a;font-weight:700;transform:scaleX(1.0190);">Master</span>
<span class="t" id="t91" style="left:190.00px;top:442.00px;font-family:'Liberation Sans',sans-serif;font-size:4.6px;color:#333;font-weight:700;transform:scaleX(1.0650);">LATITUDE/LONGITUDE</span>
<span class="t" id="t92" style="left:271.00px;top:441.00px;font-family:'Liberation Sans',sans-serif;font-size:6.4px;color:#2a2a2a;font-weight:700;transform:scaleX(1.0423);">- / -</span>
<span class="t" id="t93" style="left:8.00px;top:454.00px;font-family:'Liberation Sans',sans-serif;font-size:4.6px;color:#333;font-weight:700;">RF LINK STATUS</span>
<span class="t" id="t94" style="left:89.00px;top:453.00px;font-family:'Liberation Sans',sans-serif;font-size:6.4px;color:#2a2a2a;font-weight:700;transform:scaleX(0.9855);">Operational</span>
<span class="t" id="t95" style="left:190.00px;top:454.00px;font-family:'Liberation Sans',sans-serif;font-size:4.6px;color:#333;font-weight:700;transform:scaleX(1.0503);">ALTITUDE</span>
<span class="t" id="t96" style="left:271.00px;top:453.00px;font-family:'Liberation Sans',sans-serif;font-size:6.4px;color:#2a2a2a;font-weight:700;transform:scaleX(0.9343);">-</span>
<span class="t" id="t97" style="left:8.00px;top:466.00px;font-family:'Liberation Sans',sans-serif;font-size:4.6px;color:#333;font-weight:700;transform:scaleX(1.0393);">VERSION</span>
<span class="t" id="t98" style="left:89.00px;top:465.00px;font-family:'Liberation Sans',sans-serif;font-size:6.4px;color:#2a2a2a;font-weight:700;transform:scaleX(1.0123);">v4.0.3</span>
<span class="t" id="t99" style="left:190.00px;top:466.00px;font-family:'Liberation Sans',sans-serif;font-size:4.6px;color:#333;font-weight:700;transform:scaleX(1.0828);">SYNCHRONIZATION</span>
<span class="t" id="t100" style="left:271.00px;top:465.00px;font-family:'Liberation Sans',sans-serif;font-size:6.4px;color:#2a2a2a;font-weight:700;transform:scaleX(0.9760);">Disabled</span>
<span class="t" id="t101" style="left:8.00px;top:478.00px;font-family:'Liberation Sans',sans-serif;font-size:4.6px;color:#333;font-weight:700;transform:scaleX(0.7394);">DATE</span>
<span class="t" id="t102" style="left:89.00px;top:477.00px;font-family:'Liberation Sans',sans-serif;font-size:6.4px;color:#2a2a2a;font-weight:700;transform:scaleX(1.0385);">2018-02-17 11:38:59</span>
<span class="t" id="t103" style="left:190.00px;top:478.00px;font-family:'Liberation Sans',sans-serif;font-size:4.6px;color:#333;font-weight:700;transform:scaleX(0.9909);">SATELLITES TRACKED</span>
<span class="t" id="t104" style="left:271.00px;top:477.00px;font-family:'Liberation Sans',sans-serif;font-size:6.4px;color:#2a2a2a;font-weight:700;transform:scaleX(0.7018);">0</span>
<span class="t" id="t105" style="left:8.00px;top:491.00px;font-family:'Liberation Sans',sans-serif;font-size:4.6px;color:#333;font-weight:700;transform:scaleX(1.0717);">RADIO MODE</span>
<span class="t" id="t106" style="left:89.00px;top:490.00px;font-family:'Liberation Sans',sans-serif;font-size:6.4px;color:#2a2a2a;font-weight:700;transform:scaleX(1.0916);">MIMO</span>
<span class="t" id="t107" style="left:190.00px;top:491.00px;font-family:'Liberation Sans',sans-serif;font-size:4.6px;color:#333;font-weight:700;transform:scaleX(1.0164);">GPS SIGNAL QUALITY</span>
<div class="a" style="left:373.6px;top:0px;width:355.6px;height:500px;background:#d5d1cb;"></div>
<div class="a" style="left:372.3px;top:0px;width:1.9px;height:500px;background:#46433f;"></div>
<div class="a" style="left:374.2px;top:0px;width:1.8px;height:500px;background:linear-gradient(90deg,#8d8a85,#dedbd6);"></div>
<div class="a" style="left:373.8px;top:0px;width:355.4px;height:15.3px;background:#dcd9d3;"></div>
<div class="a" style="left:373.8px;top:0px;width:355.4px;height:0.8px;background:#c4c1bc;"></div>
<span class="t" id="t108" style="left:383.00px;top:6.00px;font-family:'Liberation Sans',sans-serif;font-size:6.3px;color:#2a2a2a;font-weight:400;transform:scaleX(0.8926);">Session</span>
<div class="a" style="left:404.5px;top:3.5px;width:30px;height:9.2px;background:#e4e1dc;border:1px solid #c2beb8;"></div>
<span class="t" id="t109" style="left:406.00px;top:6.00px;font-family:'Liberation Sans',sans-serif;font-size:6.3px;color:#2a2a2a;font-weight:400;transform:scaleX(0.8564);">172.18</span>
<span class="t" id="t110" style="left:423.00px;top:7.00px;font-family:'Liberation Sans',sans-serif;font-size:6.3px;color:#999;font-weight:400;transform:scaleX(1.1429);">...</span>
<span class="t" id="t111" style="left:680.00px;top:6.00px;font-family:'Liberation Sans',sans-serif;font-size:6.3px;color:#2a2a2a;font-weight:400;transform:scaleX(0.7975);">CPU:</span>
<div class="a" style="left:692.5px;top:4px;width:14.5px;height:9.2px;background:#e4e1dc;border:1px solid #c2beb8;"></div>
<span class="t" id="t112" style="left:693.80px;top:6.00px;font-family:'Liberation Sans',sans-serif;font-size:6.3px;color:#2a2a2a;font-weight:400;transform:scaleX(0.9120);">46%</span>
<div class="a" style="left:711.2px;top:4.5px;width:5.8px;height:6.6px;background:#1f7a1f;border:0.6px solid #0d4d0d;"></div>
<svg class="a" style="left:719px;top:3.5px" width="8" height="8"><path d="M2 4 V2.6 A2 2 0 0 1 6 2.6 V4" fill="none" stroke="#b9b6b0" stroke-width="0.9"/><rect x="0.8" y="4" width="6.4" height="3.6" fill="#f2c94a" stroke="#c9a23a" stroke-width="0.4"/></svg>
<div class="a" style="left:374.6px;top:15.3px;width:166px;height:287.5px;background:#d5d1cb;"></div>
<div class="a" style="left:374.6px;top:15.1px;width:166px;height:12.4px;background:#aeaba6;"></div>
<span class="t" id="t113" style="left:378.10px;top:20.00px;font-family:'Liberation Sans',sans-serif;font-size:6.6px;color:#f4f2ee;font-weight:400;transform:scaleX(0.9928);">Interface &lt;ether2&gt;</span>
<div class="a" style="left:377.5px;top:30.6px;width:38.5px;height:9.4px;background:#cbc7c0;border-right:0.7px solid #dcd9d4;border-top:0.6px solid #e4e1dc;"></div>
<span class="t" id="t114" style="left:380.70px;top:33.00px;font-family:'Liberation Sans',sans-serif;font-size:6.3px;color:#2a2a2a;font-weight:400;transform:scaleX(0.9543);">Overall Stats</span>
<div class="a" style="left:416px;top:30.6px;width:28px;height:9.4px;background:#cbc7c0;border-right:0.7px solid #dcd9d4;border-top:0.6px solid #e4e1dc;"></div>
<span class="t" id="t115" style="left:419.20px;top:33.00px;font-family:'Liberation Sans',sans-serif;font-size:6.3px;color:#2a2a2a;font-weight:400;transform:scaleX(0.9077);">Rx Stats</span>
<div class="a" style="left:444px;top:30.6px;width:28px;height:9.4px;background:#cbc7c0;border-right:0.7px solid #dcd9d4;border-top:0.6px solid #e4e1dc;"></div>
<span class="t" id="t116" style="left:447.20px;top:33.00px;font-family:'Liberation Sans',sans-serif;font-size:6.3px;color:#2a2a2a;font-weight:400;transform:scaleX(0.9180);">Tx Stats</span>
<div class="a" style="left:472px;top:30.6px;width:21px;height:9.4px;background:#cbc7c0;border-right:0.7px solid #dcd9d4;border-top:0.6px solid #e4e1dc;"></div>
<span class="t" id="t117" style="left:475.20px;top:33.00px;font-family:'Liberation Sans',sans-serif;font-size:6.3px;color:#2a2a2a;font-weight:400;transform:scaleX(0.9407);">Status</span>
<div class="a" style="left:493px;top:28.3px;width:24px;height:12px;background:#e2dfda;border:0.7px solid #c6c2bc;border-bottom:none;"></div>
<span class="t" id="t118" style="left:495.50px;top:32.00px;font-family:'Liberation Sans',sans-serif;font-size:6.3px;color:#2a2a2a;font-weight:400;transform:scaleX(1.0492);">Traffic</span>
<div class="a" style="left:517px;top:30.6px;width:12px;height:9.4px;background:#cbc7c0;border-right:0.7px solid #dcd9d4;border-top:0.6px solid #e4e1dc;"></div>
<span class="t" id="t119" style="left:520.20px;top:33.00px;font-family:'Liberation Sans',sans-serif;font-size:6.3px;color:#777;font-weight:400;transform:scaleX(0.7619);">...</span>
<div class="a" style="left:377px;top:40px;width:163px;height:248.5px;background:#dcd9d3;border:0.7px solid #eeebe6;"></div>
<span class="t" id="t120" style="left:409.80px;top:48.00px;font-family:'Liberation Sans',sans-serif;font-size:6.3px;color:#2a2a2a;font-weight:400;transform:scaleX(0.9203);">Tx/Rx Rate:</span>
<div class="a" style="left:444px;top:44.5px;width:44.5px;height:9.2px;background:#d9d5cf;border:1px solid #a9a59f;border-right-color:#eeebe6;border-bottom-color:#eeebe6;"></div>
<span class="t" id="t121" style="left:446.00px;top:47.00px;font-family:'Liberation Sans',sans-serif;font-size:6.5px;color:#2a2a2a;font-weight:400;transform:scaleX(0.8795);">32.5 Mbps</span>
<span class="t" id="t122" style="left:490.00px;top:48.00px;font-family:'Liberation Sans',sans-serif;font-size:6.3px;color:#2a2a2a;font-weight:400;">/</span>
<div class="a" style="left:493px;top:44.5px;width:45.5px;height:9.2px;background:#d9d5cf;border:1px solid #a9a59f;border-right-color:#eeebe6;border-bottom-color:#eeebe6;"></div>
<span class="t" id="t123" style="left:495.00px;top:47.00px;font-family:'Liberation Sans',sans-serif;font-size:6.5px;color:#2a2a2a;font-weight:400;transform:scaleX(0.8979);">282.3 Mbps</span>
<span class="t" id="t124" style="left:391.40px;top:60.00px;font-family:'Liberation Sans',sans-serif;font-size:6.3px;color:#2a2a2a;font-weight:400;transform:scaleX(0.9032);">Tx/Rx Packet Rate:</span>
<div class="a" style="left:444px;top:57.5px;width:44.5px;height:9.2px;background:#d9d5cf;border:1px solid #a9a59f;border-right-color:#eeebe6;border-bottom-color:#eeebe6;"></div>
<span class="t" id="t125" style="left:446.00px;top:60.00px;font-family:'Liberation Sans',sans-serif;font-size:6.5px;color:#2a2a2a;font-weight:400;transform:scaleX(0.9223);">13 615 p/s</span>
<span class="t" id="t126" style="left:490.00px;top:60.00px;font-family:'Liberation Sans',sans-serif;font-size:6.3px;color:#2a2a2a;font-weight:400;">/</span>
<div class="a" style="left:493px;top:57.5px;width:45.5px;height:9.2px;background:#d9d5cf;border:1px solid #a9a59f;border-right-color:#eeebe6;border-bottom-color:#eeebe6;"></div>
<span class="t" id="t127" style="left:495.00px;top:60.00px;font-family:'Liberation Sans',sans-serif;font-size:6.5px;color:#2a2a2a;font-weight:400;transform:scaleX(0.9552);">23 858 p/s</span>
<span class="t" id="t128" style="left:401.40px;top:79.00px;font-family:'Liberation Sans',sans-serif;font-size:6.3px;color:#2a2a2a;font-weight:400;transform:scaleX(0.9109);">FP Tx/Rx Rate:</span>
<div class="a" style="left:444px;top:76.0px;width:44.5px;height:9.2px;background:#d9d5cf;border:1px solid #a9a59f;border-right-color:#eeebe6;border-bottom-color:#eeebe6;"></div>
<span class="t" id="t129" style="left:446.00px;top:78.00px;font-family:'Liberation Sans',sans-serif;font-size:6.5px;color:#2a2a2a;font-weight:400;transform:scaleX(0.8762);">32.1 Mbps</span>
<span class="t" id="t130" style="left:490.00px;top:79.00px;font-family:'Liberation Sans',sans-serif;font-size:6.3px;color:#2a2a2a;font-weight:400;">/</span>
<div class="a" style="left:493px;top:76.0px;width:45.5px;height:9.2px;background:#d9d5cf;border:1px solid #a9a59f;border-right-color:#eeebe6;border-bottom-color:#eeebe6;"></div>
<span class="t" id="t131" style="left:495.00px;top:78.00px;font-family:'Liberation Sans',sans-serif;font-size:6.5px;color:#2a2a2a;font-weight:400;transform:scaleX(0.8684);">279.6 Mbps</span>
<span class="t" id="t132" style="left:383.40px;top:92.00px;font-family:'Liberation Sans',sans-serif;font-size:6.3px;color:#2a2a2a;font-weight:400;transform:scaleX(0.8932);">FP Tx/Rx Packet Rate:</span>
<div class="a" style="left:444px;top:89.1px;width:44.5px;height:9.2px;background:#d9d5cf;border:1px solid #a9a59f;border-right-color:#eeebe6;border-bottom-color:#eeebe6;"></div>
<span class="t" id="t133" style="left:446.00px;top:91.00px;font-family:'Liberation Sans',sans-serif;font-size:6.5px;color:#2a2a2a;font-weight:400;transform:scaleX(0.9552);">13 583 p/s</span>
<span class="t" id="t134" style="left:490.00px;top:92.00px;font-family:'Liberation Sans',sans-serif;font-size:6.3px;color:#2a2a2a;font-weight:400;">/</span>
<div class="a" style="left:493px;top:89.1px;width:45.5px;height:9.2px;background:#d9d5cf;border:1px solid #a9a59f;border-right-color:#eeebe6;border-bottom-color:#eeebe6;"></div>
<span class="t" id="t135" style="left:495.00px;top:91.00px;font-family:'Liberation Sans',sans-serif;font-size:6.5px;color:#2a2a2a;font-weight:400;transform:scaleX(0.9124);">23 681 p/s</span>
<span class="t" id="t136" style="left:408.40px;top:110.00px;font-family:'Liberation Sans',sans-serif;font-size:6.3px;color:#2a2a2a;font-weight:400;transform:scaleX(0.8967);">Tx/Rx Bytes:</span>
<div class="a" style="left:444px;top:107.3px;width:44.5px;height:9.2px;background:#d9d5cf;border:1px solid #a9a59f;border-right-color:#eeebe6;border-bottom-color:#eeebe6;"></div>
<span class="t" id="t137" style="left:446.00px;top:109.00px;font-family:'Liberation Sans',sans-serif;font-size:6.5px;color:#2a2a2a;font-weight:400;transform:scaleX(0.8515);">2762.4 GiB</span>
<span class="t" id="t138" style="left:490.00px;top:110.00px;font-family:'Liberation Sans',sans-serif;font-size:6.3px;color:#2a2a2a;font-weight:400;">/</span>
<div class="a" style="left:493px;top:107.3px;width:45.5px;height:9.2px;background:#d9d5cf;border:1px solid #a9a59f;border-right-color:#eeebe6;border-bottom-color:#eeebe6;"></div>
<span class="t" id="t139" style="left:495.00px;top:109.00px;font-family:'Liberation Sans',sans-serif;font-size:6.5px;color:#2a2a2a;font-weight:400;transform:scaleX(1.0298);">9726.8 GiB</span>
<span class="t" id="t140" style="left:402.90px;top:123.00px;font-family:'Liberation Sans',sans-serif;font-size:6.3px;color:#2a2a2a;font-weight:400;transform:scaleX(0.8856);">Tx/Rx Packets:</span>
<div class="a" style="left:444px;top:120.4px;width:44.5px;height:9.2px;background:#d9d5cf;border:1px solid #a9a59f;border-right-color:#eeebe6;border-bottom-color:#eeebe6;"></div>
<span class="t" id="t141" style="left:446.00px;top:122.00px;font-family:'Liberation Sans',sans-serif;font-size:6.5px;color:#2a2a2a;font-weight:400;transform:scaleX(0.9053);">3892 949 600</span>
<span class="t" id="t142" style="left:490.00px;top:123.00px;font-family:'Liberation Sans',sans-serif;font-size:6.3px;color:#2a2a2a;font-weight:400;">/</span>
<div class="a" style="left:493px;top:120.4px;width:45.5px;height:9.2px;background:#d9d5cf;border:1px solid #a9a59f;border-right-color:#eeebe6;border-bottom-color:#eeebe6;"></div>
<span class="t" id="t143" style="left:495.00px;top:122.00px;font-family:'Liberation Sans',sans-serif;font-size:6.5px;color:#2a2a2a;font-weight:400;transform:scaleX(0.8877);">7619 623 126</span>
<span class="t" id="t144" style="left:408.40px;top:136.00px;font-family:'Liberation Sans',sans-serif;font-size:6.3px;color:#2a2a2a;font-weight:400;transform:scaleX(0.8707);">Tx/Rx Drops:</span>
<div class="a" style="left:444px;top:133.5px;width:44.5px;height:9.2px;background:#d9d5cf;border:1px solid #a9a59f;border-right-color:#eeebe6;border-bottom-color:#eeebe6;"></div>
<span class="t" id="t145" style="left:446.00px;top:136.00px;font-family:'Liberation Sans',sans-serif;font-size:6.5px;color:#2a2a2a;font-weight:400;">0</span>
<span class="t" id="t146" style="left:490.00px;top:136.00px;font-family:'Liberation Sans',sans-serif;font-size:6.3px;color:#2a2a2a;font-weight:400;">/</span>
<div class="a" style="left:493px;top:133.5px;width:45.5px;height:9.2px;background:#d9d5cf;border:1px solid #a9a59f;border-right-color:#eeebe6;border-bottom-color:#eeebe6;"></div>
<span class="t" id="t147" style="left:495.00px;top:136.00px;font-family:'Liberation Sans',sans-serif;font-size:6.5px;color:#2a2a2a;font-weight:400;">0</span>
<span class="t" id="t148" style="left:408.10px;top:150.00px;font-family:'Liberation Sans',sans-serif;font-size:6.3px;color:#2a2a2a;font-weight:400;transform:scaleX(0.8708);">Tx/Rx Errors:</span>
<div class="a" style="left:444px;top:146.8px;width:44.5px;height:9.2px;background:#d9d5cf;border:1px solid #a9a59f;border-right-color:#eeebe6;border-bottom-color:#eeebe6;"></div>
<span class="t" id="t149" style="left:446.00px;top:149.00px;font-family:'Liberation Sans',sans-serif;font-size:6.5px;color:#2a2a2a;font-weight:400;">0</span>
<span class="t" id="t150" style="left:490.00px;top:150.00px;font-family:'Liberation Sans',sans-serif;font-size:6.3px;color:#2a2a2a;font-weight:400;">/</span>
<div class="a" style="left:493px;top:146.8px;width:45.5px;height:9.2px;background:#d9d5cf;border:1px solid #a9a59f;border-right-color:#eeebe6;border-bottom-color:#eeebe6;"></div>
<span class="t" id="t151" style="left:495.00px;top:149.00px;font-family:'Liberation Sans',sans-serif;font-size:6.5px;color:#2a2a2a;font-weight:400;">0</span>
<div class="a" style="left:381px;top:72.3px;width:157px;height:0.8px;background:#c8c4be;"></div>
<div class="a" style="left:381px;top:73.1px;width:157px;height:0.6px;background:#eeebe6;"></div>
<div class="a" style="left:381px;top:103.2px;width:157px;height:0.8px;background:#c8c4be;"></div>
<div class="a" style="left:381px;top:104px;width:157px;height:0.6px;background:#eeebe6;"></div>
<div class="a" style="left:380.5px;top:160px;width:158px;height:61px;background:#fff;border:1px solid #6d6a66;border-right-color:#f2f0ec;border-bottom-color:#f2f0ec;"></div>
<svg class="a" style="left:381.7px;top:161.6px" width="155.6" height="58.400000000000006"><rect x="0" y="1.5" width="155.6" height="58.400000000000006" fill="#ffcaca"/><rect x="0.30" y="1.5" width="0.9" height="58.4" fill="#ee7474"/><rect x="1.20" y="0" width="2.0" height="1.5" fill="#fff"/><rect x="2.80" y="1.5" width="0.6" height="58.4" fill="#f7a0a0"/><rect x="3.70" y="0" width="2.0" height="2.6" fill="#fff"/><rect x="5.50" y="1.5" width="0.6" height="58.4" fill="#f7a0a0"/><rect x="6.40" y="0" width="2.0" height="2.0" fill="#fff"/><rect x="8.00" y="1.5" width="0.9" height="58.4" fill="#ee7474"/><rect x="8.90" y="0" width="1.2" height="3.2" fill="#fff"/><rect x="10.50" y="1.5" width="0.6" height="58.4" fill="#fbb4b4"/><rect x="11.40" y="0" width="1.2" height="2.6" fill="#fff"/><rect x="12.80" y="1.5" width="0.6" height="58.4" fill="#f7a0a0"/><rect x="13.70" y="0" width="2.0" height="3.2" fill="#fff"/><rect x="15.30" y="1.5" width="0.9" height="58.4" fill="#ee7474"/><rect x="16.20" y="0" width="1.6" height="3.2" fill="#fff"/><rect x="17.80" y="1.5" width="0.6" height="58.4" fill="#fbb4b4"/><rect x="18.70" y="0" width="2.0" height="2.6" fill="#fff"/><rect x="20.50" y="1.5" width="0.6" height="58.4" fill="#f7a0a0"/><rect x="21.40" y="0" width="1.2" height="2.6" fill="#fff"/><rect x="23.00" y="1.5" width="0.9" height="58.4" fill="#ee7474"/><rect x="23.90" y="0" width="1.2" height="1.5" fill="#fff"/><rect x="25.30" y="1.5" width="0.6" height="58.4" fill="#f7a0a0"/><rect x="26.20" y="0" width="1.6" height="3.2" fill="#fff"/><rect x="28.00" y="1.5" width="0.6" height="58.4" fill="#fbb4b4"/><rect x="28.90" y="0" width="1.6" height="1.5" fill="#fff"/><rect x="30.70" y="1.5" width="0.9" height="58.4" fill="#ee7474"/><rect x="31.60" y="0" width="1.6" height="2.6" fill="#fff"/><rect x="33.00" y="1.5" width="0.6" height="58.4" fill="#fbb4b4"/><rect x="33.90" y="0" width="2.0" height="1.5" fill="#fff"/><rect x="35.70" y="1.5" width="0.6" height="58.4" fill="#f7a0a0"/><rect x="36.60" y="0" width="2.0" height="1.5" fill="#fff"/><rect x="38.20" y="1.5" width="0.9" height="58.4" fill="#ee7474"/><rect x="39.10" y="0" width="1.2" height="3.2" fill="#fff"/><rect x="40.90" y="1.5" width="0.6" height="58.4" fill="#fbb4b4"/><rect x="41.80" y="0" width="2.0" height="1.5" fill="#fff"/><rect x="43.60" y="1.5" width="0.6" height="58.4" fill="#f7a0a0"/><rect x="44.50" y="0" width="2.0" height="1.5" fill="#fff"/><rect x="46.30" y="1.5" width="0.9" height="58.4" fill="#ee7474"/><rect x="47.20" y="0" width="1.6" height="2.6" fill="#fff"/><rect x="48.60" y="1.5" width="0.6" height="58.4" fill="#f7a0a0"/><rect x="49.50" y="0" width="2.0" height="1.5" fill="#fff"/><rect x="50.90" y="1.5" width="0.6" height="58.4" fill="#fbb4b4"/><rect x="51.80" y="0" width="2.0" height="2.0" fill="#fff"/><rect x="53.60" y="1.5" width="0.9" height="58.4" fill="#ee7474"/><rect x="54.50" y="0" width="1.2" height="3.2" fill="#fff"/><rect x="56.30" y="1.5" width="0.6" height="58.4" fill="#f7a0a0"/><rect x="57.20" y="0" width="1.6" height="1.5" fill="#fff"/><rect x="59.00" y="1.5" width="0.6" height="58.4" fill="#f7a0a0"/><rect x="59.90" y="0" width="2.0" height="2.0" fill="#fff"/><rect x="61.30" y="1.5" width="0.9" height="58.4" fill="#ee7474"/><rect x="62.20" y="0" width="1.2" height="1.5" fill="#fff"/><rect x="63.80" y="1.5" width="0.6" height="58.4" fill="#fbb4b4"/><rect x="64.70" y="0" width="2.0" height="2.0" fill="#fff"/><rect x="66.50" y="1.5" width="0.6" height="58.4" fill="#fbb4b4"/><rect x="67.40" y="0" width="1.6" height="2.0" fill="#fff"/><rect x="69.20" y="1.5" width="0.9" height="58.4" fill="#ee7474"/><rect x="70.10" y="0" width="1.6" height="3.2" fill="#fff"/><rect x="71.90" y="1.5" width="0.6" height="58.4" fill="#f7a0a0"/><rect x="72.80" y="0" width="1.2" height="2.6" fill="#fff"/><rect x="74.40" y="1.5" width="0.6" height="58.4" fill="#fbb4b4"/><rect x="75.30" y="0" width="2.0" height="1.5" fill="#fff"/><rect x="76.90" y="1.5" width="0.9" height="58.4" fill="#ee7474"/><rect x="77.80" y="0" width="1.6" height="2.0" fill="#fff"/><rect x="79.40" y="1.5" width="0.6" height="58.4" fill="#fbb4b4"/><rect x="80.30" y="0" width="2.0" height="2.6" fill="#fff"/><rect x="81.90" y="1.5" width="0.6" height="58.4" fill="#fbb4b4"/><rect x="82.80" y="0" width="2.0" height="1.5" fill="#fff"/><rect x="84.40" y="1.5" width="0.9" height="58.4" fill="#ee7474"/><rect x="85.30" y="0" width="2.0" height="2.0" fill="#fff"/><rect x="86.90" y="1.5" width="0.6" height="58.4" fill="#f7a0a0"/><rect x="87.80" y="0" width="1.6" height="1.5" fill="#fff"/><rect x="89.60" y="1.5" width="0.6" height="58.4" fill="#f7a0a0"/><rect x="90.50" y="0" width="1.2" height="2.6" fill="#fff"/><rect x="92.30" y="1.5" width="0.9" height="58.4" fill="#ee7474"/><rect x="93.20" y="0" width="1.2" height="2.6" fill="#fff"/><rect x="94.60" y="1.5" width="0.6" height="58.4" fill="#f7a0a0"/><rect x="95.50" y="0" width="2.0" height="3.2" fill="#fff"/><rect x="97.30" y="1.5" width="0.6" height="58.4" fill="#fbb4b4"/><rect x="98.20" y="0" width="2.0" height="3.2" fill="#fff"/><rect x="99.80" y="1.5" width="0.9" height="58.4" fill="#ee7474"/><rect x="100.70" y="0" width="2.0" height="2.0" fill="#fff"/><rect x="102.30" y="1.5" width="0.6" height="58.4" fill="#fbb4b4"/><rect x="103.20" y="0" width="1.2" height="2.0" fill="#fff"/><rect x="104.80" y="1.5" width="0.6" height="58.4" fill="#f7a0a0"/><rect x="105.70" y="0" width="1.2" height="2.0" fill="#fff"/><rect x="107.30" y="1.5" width="0.9" height="58.4" fill="#ee7474"/><rect x="108.20" y="0" width="2.0" height="3.2" fill="#fff"/><rect x="109.80" y="1.5" width="0.6" height="58.4" fill="#fbb4b4"/><rect x="110.70" y="0" width="1.2" height="2.0" fill="#fff"/><rect x="112.50" y="1.5" width="0.6" height="58.4" fill="#f7a0a0"/><rect x="113.40" y="0" width="2.0" height="3.2" fill="#fff"/><rect x="115.20" y="1.5" width="0.9" height="58.4" fill="#ee7474"/><rect x="116.10" y="0" width="1.6" height="2.0" fill="#fff"/><rect x="117.50" y="1.5" width="0.6" height="58.4" fill="#f7a0a0"/><rect x="118.40" y="0" width="1.2" height="2.0" fill="#fff"/><rect x="119.80" y="1.5" width="0.6" height="58.4" fill="#f7a0a0"/><rect x="120.70" y="0" width="2.0" height="3.2" fill="#fff"/><rect x="122.30" y="1.5" width="0.9" height="58.4" fill="#ee7474"/><rect x="123.20" y="0" width="1.6" height="2.0" fill="#fff"/><rect x="125.00" y="1.5" width="0.6" height="58.4" fill="#f7a0a0"/><rect x="125.90" y="0" width="1.6" height="1.5" fill="#fff"/><rect x="127.70" y="1.5" width="0.6" height="58.4" fill="#fbb4b4"/><rect x="128.60" y="0" width="1.2" height="3.2" fill="#fff"/><rect x="130.20" y="1.5" width="0.9" height="58.4" fill="#ee7474"/><rect x="131.10" y="0" width="1.2" height="1.5" fill="#fff"/><rect x="132.70" y="1.5" width="0.6" height="58.4" fill="#fbb4b4"/><rect x="133.60" y="0" width="1.2" height="3.2" fill="#fff"/><rect x="135.00" y="1.5" width="0.6" height="58.4" fill="#f7a0a0"/><rect x="135.90" y="0" width="1.6" height="3.2" fill="#fff"/><rect x="137.30" y="1.5" width="0.9" height="58.4" fill="#ee7474"/><rect x="138.20" y="0" width="2.0" height="3.2" fill="#fff"/><rect x="140.00" y="1.5" width="0.6" height="58.4" fill="#fbb4b4"/><rect x="140.90" y="0" width="1.2" height="3.2" fill="#fff"/><rect x="142.30" y="1.5" width="0.6" height="58.4" fill="#f7a0a0"/><rect x="143.20" y="0" width="1.2" height="2.6" fill="#fff"/><rect x="145.00" y="1.5" width="0.9" height="58.4" fill="#ee7474"/><rect x="145.90" y="0" width="2.0" height="1.5" fill="#fff"/><rect x="147.70" y="1.5" width="0.6" height="58.4" fill="#fbb4b4"/><rect x="148.60" y="0" width="1.2" height="2.6" fill="#fff"/><rect x="150.40" y="1.5" width="0.6" height="58.4" fill="#fbb4b4"/><rect x="151.30" y="0" width="1.6" height="2.0" fill="#fff"/><rect x="152.90" y="1.5" width="0.9" height="58.4" fill="#ee7474"/><rect x="153.80" y="0" width="2.0" height="3.2" fill="#fff"/><rect x="155.20" y="1.5" width="0.6" height="58.4" fill="#fbb4b4"/><rect x="156.10" y="0" width="2.0" height="2.6" fill="#fff"/><rect x="0" y="6.0" width="155.6" height="0.6" fill="rgba(255,255,255,0.35)"/><rect x="0" y="14.0" width="155.6" height="0.6" fill="rgba(255,255,255,0.35)"/><rect x="0" y="22.0" width="155.6" height="0.6" fill="rgba(255,255,255,0.35)"/><rect x="0" y="30.0" width="155.6" height="0.6" fill="rgba(255,255,255,0.35)"/><rect x="0" y="38.0" width="155.6" height="0.6" fill="rgba(255,255,255,0.35)"/><rect x="0" y="46.0" width="155.6" height="0.6" fill="rgba(255,255,255,0.35)"/><rect x="0" y="54.0" width="155.6" height="0.6" fill="rgba(255,255,255,0.35)"/><rect x="2.7" y="0" width="0.6" height="58.400000000000006" fill="rgba(255,255,255,0.35)"/><rect x="10.7" y="0" width="0.6" height="58.400000000000006" fill="rgba(255,255,255,0.35)"/><rect x="18.7" y="0" width="0.6" height="58.400000000000006" fill="rgba(255,255,255,0.35)"/><rect x="26.7" y="0" width="0.6" height="58.400000000000006" fill="rgba(255,255,255,0.35)"/><rect x="34.7" y="0" width="0.6" height="58.400000000000006" fill="rgba(255,255,255,0.35)"/><rect x="42.7" y="0" width="0.6" height="58.400000000000006" fill="rgba(255,255,255,0.35)"/><rect x="50.7" y="0" width="0.6" height="58.400000000000006" fill="rgba(255,255,255,0.35)"/><rect x="58.7" y="0" width="0.6" height="58.400000000000006" fill="rgba(255,255,255,0.35)"/><rect x="66.7" y="0" width="0.6" height="58.400000000000006" fill="rgba(255,255,255,0.35)"/><rect x="74.7" y="0" width="0.6" height="58.400000000000006" fill="rgba(255,255,255,0.35)"/><rect x="82.7" y="0" width="0.6" height="58.400000000000006" fill="rgba(255,255,255,0.35)"/><rect x="90.7" y="0" width="0.6" height="58.400000000000006" fill="rgba(255,255,255,0.35)"/><rect x="98.7" y="0" width="0.6" height="58.400000000000006" fill="rgba(255,255,255,0.35)"/><rect x="106.7" y="0" width="0.6" height="58.400000000000006" fill="rgba(255,255,255,0.35)"/><rect x="114.7" y="0" width="0.6" height="58.400000000000006" fill="rgba(255,255,255,0.35)"/><rect x="122.7" y="0" width="0.6" height="58.400000000000006" fill="rgba(255,255,255,0.35)"/><rect x="130.7" y="0" width="0.6" height="58.400000000000006" fill="rgba(255,255,255,0.35)"/><rect x="138.7" y="0" width="0.6" height="58.400000000000006" fill="rgba(255,255,255,0.35)"/><rect x="146.7" y="0" width="0.6" height="58.400000000000006" fill="rgba(255,255,255,0.35)"/><rect x="154.7" y="0" width="0.6" height="58.400000000000006" fill="rgba(255,255,255,0.35)"/></svg>
<svg class="a" style="left:381.7px;top:213.1px" width="155.6" height="6.900000000000006"><rect x="0" y="1" width="155.6" height="6.400000000000006" fill="#b466c0"/><rect x="0.30" y="0" width="1.0" height="6.4" fill="#c070c0"/><rect x="2.10" y="0.5" width="1.0" height="6.4" fill="#aa5ac8"/><rect x="4.30" y="0" width="1.0" height="6.4" fill="#b868c0"/><rect x="6.50" y="0" width="1.0" height="6.4" fill="#e080b0"/><rect x="8.30" y="1.0" width="1.0" height="6.4" fill="#e080b0"/><rect x="9.70" y="0" width="1.0" height="6.4" fill="#9a50d0"/><rect x="11.10" y="0.5" width="1.0" height="6.4" fill="#c070c0"/><rect x="12.90" y="0.5" width="1.0" height="6.4" fill="#9a50d0"/><rect x="14.30" y="0" width="1.0" height="6.4" fill="#9a50d0"/><rect x="15.70" y="1.0" width="1.0" height="6.4" fill="#9a50d0"/><rect x="17.10" y="0" width="1.0" height="6.4" fill="#b868c0"/><rect x="18.90" y="0.5" width="1.0" height="6.4" fill="#aa5ac8"/><rect x="20.30" y="0.5" width="1.0" height="6.4" fill="#d070b0"/><rect x="21.70" y="0" width="1.0" height="6.4" fill="#aa5ac8"/><rect x="23.90" y="0" width="1.0" height="6.4" fill="#b868c0"/><rect x="26.10" y="0.5" width="1.0" height="6.4" fill="#d070b0"/><rect x="27.90" y="1.0" width="1.0" height="6.4" fill="#c070c0"/><rect x="30.10" y="0" width="1.0" height="6.4" fill="#9a50d0"/><rect x="32.30" y="0" width="1.0" height="6.4" fill="#9a50d0"/><rect x="34.10" y="0" width="1.0" height="6.4" fill="#e080b0"/><rect x="35.90" y="1.0" width="1.0" height="6.4" fill="#d070b0"/><rect x="37.30" y="1.0" width="1.0" height="6.4" fill="#aa5ac8"/><rect x="39.10" y="0" width="1.0" height="6.4" fill="#9a50d0"/><rect x="40.50" y="0.5" width="1.0" height="6.4" fill="#e080b0"/><rect x="42.70" y="0" width="1.0" height="6.4" fill="#e080b0"/><rect x="44.10" y="0" width="1.0" height="6.4" fill="#b868c0"/><rect x="46.30" y="0.5" width="1.0" height="6.4" fill="#aa5ac8"/><rect x="47.70" y="1.0" width="1.0" height="6.4" fill="#e080b0"/><rect x="49.90" y="0" width="1.0" height="6.4" fill="#c070c0"/><rect x="51.70" y="1.0" width="1.0" height="6.4" fill="#c070c0"/><rect x="53.50" y="0" width="1.0" height="6.4" fill="#b868c0"/><rect x="55.70" y="1.0" width="1.0" height="6.4" fill="#d070b0"/><rect x="57.90" y="0.5" width="1.0" height="6.4" fill="#aa5ac8"/><rect x="60.10" y="0" width="1.0" height="6.4" fill="#aa5ac8"/><rect x="61.50" y="1.0" width="1.0" height="6.4" fill="#c070c0"/><rect x="63.70" y="0" width="1.0" height="6.4" fill="#b868c0"/><rect x="65.10" y="0" width="1.0" height="6.4" fill="#e080b0"/><rect x="66.50" y="0.5" width="1.0" height="6.4" fill="#aa5ac8"/><rect x="68.30" y="0.5" width="1.0" height="6.4" fill="#b868c0"/><rect x="70.10" y="0" width="1.0" height="6.4" fill="#aa5ac8"/><rect x="71.50" y="0" width="1.0" height="6.4" fill="#c070c0"/><rect x="72.90" y="0" width="1.0" height="6.4" fill="#b868c0"/><rect x="74.30" y="0.5" width="1.0" height="6.4" fill="#aa5ac8"/><rect x="76.10" y="0" width="1.0" height="6.4" fill="#9a50d0"/><rect x="77.50" y="0.5" width="1.0" height="6.4" fill="#9a50d0"/><rect x="79.70" y="0" width="1.0" height="6.4" fill="#b868c0"/><rect x="81.50" y="0" width="1.0" height="6.4" fill="#e080b0"/><rect x="83.70" y="0.5" width="1.0" height="6.4" fill="#c070c0"/><rect x="85.50" y="0.5" width="1.0" height="6.4" fill="#d070b0"/><rect x="86.90" y="0.5" width="1.0" height="6.4" fill="#b868c0"/><rect x="88.30" y="1.0" width="1.0" height="6.4" fill="#aa5ac8"/><rect x="89.70" y="0" width="1.0" height="6.4" fill="#d070b0"/><rect x="91.50" y="0.5" width="1.0" height="6.4" fill="#aa5ac8"/><rect x="93.30" y="1.0" width="1.0" height="6.4" fill="#c070c0"/><rect x="95.10" y="0.5" width="1.0" height="6.4" fill="#9a50d0"/><rect x="97.30" y="1.0" width="1.0" height="6.4" fill="#aa5ac8"/><rect x="99.50" y="0" width="1.0" height="6.4" fill="#9a50d0"/><rect x="101.70" y="1.0" width="1.0" height="6.4" fill="#c070c0"/><rect x="103.90" y="0.5" width="1.0" height="6.4" fill="#9a50d0"/><rect x="105.70" y="0.5" width="1.0" height="6.4" fill="#aa5ac8"/><rect x="107.90" y="1.0" width="1.0" height="6.4" fill="#c070c0"/><rect x="109.30" y="0" width="1.0" height="6.4" fill="#d070b0"/><rect x="110.70" y="0.5" width="1.0" height="6.4" fill="#d070b0"/><rect x="112.50" y="0.5" width="1.0" height="6.4" fill="#d070b0"/><rect x="114.30" y="0.5" width="1.0" height="6.4" fill="#aa5ac8"/><rect x="116.10" y="0.5" width="1.0" height="6.4" fill="#d070b0"/><rect x="117.50" y="0" width="1.0" height="6.4" fill="#b868c0"/><rect x="118.90" y="0" width="1.0" height="6.4" fill="#9a50d0"/><rect x="120.70" y="0" width="1.0" height="6.4" fill="#e080b0"/><rect x="122.90" y="0" width="1.0" height="6.4" fill="#d070b0"/><rect x="125.10" y="0" width="1.0" height="6.4" fill="#9a50d0"/><rect x="127.30" y="0" width="1.0" height="6.4" fill="#b868c0"/><rect x="128.70" y="0" width="1.0" height="6.4" fill="#d070b0"/><rect x="130.50" y="0" width="1.0" height="6.4" fill="#d070b0"/><rect x="132.70" y="0.5" width="1.0" height="6.4" fill="#c070c0"/><rect x="134.50" y="0" width="1.0" height="6.4" fill="#e080b0"/><rect x="136.70" y="0" width="1.0" height="6.4" fill="#c070c0"/><rect x="138.50" y="0" width="1.0" height="6.4" fill="#9a50d0"/><rect x="139.90" y="0" width="1.0" height="6.4" fill="#b868c0"/><rect x="141.70" y="0" width="1.0" height="6.4" fill="#c070c0"/><rect x="143.90" y="0" width="1.0" height="6.4" fill="#d070b0"/><rect x="145.30" y="1.0" width="1.0" height="6.4" fill="#aa5ac8"/><rect x="146.70" y="0" width="1.0" height="6.4" fill="#b868c0"/><rect x="148.10" y="0" width="1.0" height="6.4" fill="#b868c0"/><rect x="149.90" y="1.0" width="1.0" height="6.4" fill="#c070c0"/><rect x="151.30" y="0" width="1.0" height="6.4" fill="#d070b0"/><rect x="153.50" y="0.5" width="1.0" height="6.4" fill="#b868c0"/><rect x="155.30" y="0" width="1.0" height="6.4" fill="#d070b0"/></svg>
<div class="a" style="left:381.7px;top:213.6px;width:0.9px;height:6.400000000000006px;background:#3030e0;"></div>
<div class="a" style="left:383.4px;top:199.2px;width:56px;height:18.6px;background:#fff;border:0.7px solid #b5b5b5;"></div>
<div class="a" style="left:384.79999999999995px;top:201.0px;width:6.6px;height:6.4px;background:#0000ff;border:0.5px solid #222;"></div>
<div class="a" style="left:384.79999999999995px;top:209.0px;width:6.6px;height:6.4px;background:#ff0000;border:0.5px solid #222;"></div>
<span class="t" id="t152" style="left:393.40px;top:202.00px;font-family:'Liberation Sans',sans-serif;font-size:6.3px;color:#2a2a2a;font-weight:400;transform:scaleX(0.9122);">Tx:  32.5 Mbps</span>
<span class="t" id="t153" style="left:393.40px;top:210.00px;font-family:'Liberation Sans',sans-serif;font-size:6.3px;color:#2a2a2a;font-weight:400;transform:scaleX(0.8722);">Rx:  282.3 Mbps</span>
<div class="a" style="left:380.5px;top:223.8px;width:158px;height:61px;background:#fff;border:1px solid #6d6a66;border-right-color:#f2f0ec;border-bottom-color:#f2f0ec;"></div>
<svg class="a" style="left:381.7px;top:225.4px" width="155.6" height="58.400000000000006"><rect x="0" y="1.5" width="155.6" height="58.400000000000006" fill="#ffcaca"/><rect x="0.30" y="1.5" width="0.9" height="58.4" fill="#ee7474"/><rect x="1.20" y="0" width="1.6" height="2.6" fill="#fff"/><rect x="2.80" y="1.5" width="0.6" height="58.4" fill="#f7a0a0"/><rect x="3.70" y="0" width="2.0" height="1.5" fill="#fff"/><rect x="5.50" y="1.5" width="0.6" height="58.4" fill="#f7a0a0"/><rect x="6.40" y="0" width="2.0" height="2.6" fill="#fff"/><rect x="7.80" y="1.5" width="0.9" height="58.4" fill="#ee7474"/><rect x="8.70" y="0" width="1.2" height="1.5" fill="#fff"/><rect x="10.30" y="1.5" width="0.6" height="58.4" fill="#fbb4b4"/><rect x="11.20" y="0" width="1.6" height="2.6" fill="#fff"/><rect x="12.80" y="1.5" width="0.6" height="58.4" fill="#f7a0a0"/><rect x="13.70" y="0" width="2.0" height="2.0" fill="#fff"/><rect x="15.30" y="1.5" width="0.9" height="58.4" fill="#ee7474"/><rect x="16.20" y="0" width="1.2" height="3.2" fill="#fff"/><rect x="18.00" y="1.5" width="0.6" height="58.4" fill="#fbb4b4"/><rect x="18.90" y="0" width="1.2" height="2.6" fill="#fff"/><rect x="20.30" y="1.5" width="0.6" height="58.4" fill="#fbb4b4"/><rect x="21.20" y="0" width="2.0" height="1.5" fill="#fff"/><rect x="22.80" y="1.5" width="0.9" height="58.4" fill="#ee7474"/><rect x="23.70" y="0" width="2.0" height="3.2" fill="#fff"/><rect x="25.10" y="1.5" width="0.6" height="58.4" fill="#fbb4b4"/><rect x="26.00" y="0" width="2.0" height="1.5" fill="#fff"/><rect x="27.60" y="1.5" width="0.6" height="58.4" fill="#fbb4b4"/><rect x="28.50" y="0" width="1.2" height="3.2" fill="#fff"/><rect x="30.10" y="1.5" width="0.9" height="58.4" fill="#ee7474"/><rect x="31.00" y="0" width="2.0" height="2.6" fill="#fff"/><rect x="32.60" y="1.5" width="0.6" height="58.4" fill="#f7a0a0"/><rect x="33.50" y="0" width="1.6" height="1.5" fill="#fff"/><rect x="34.90" y="1.5" width="0.6" height="58.4" fill="#fbb4b4"/><rect x="35.80" y="0" width="1.2" height="1.5" fill="#fff"/><rect x="37.60" y="1.5" width="0.9" height="58.4" fill="#ee7474"/><rect x="38.50" y="0" width="2.0" height="2.0" fill="#fff"/><rect x="39.90" y="1.5" width="0.6" height="58.4" fill="#f7a0a0"/><rect x="40.80" y="0" width="1.6" height="3.2" fill="#fff"/><rect x="42.20" y="1.5" width="0.6" height="58.4" fill="#f7a0a0"/><rect x="43.10" y="0" width="2.0" height="2.0" fill="#fff"/><rect x="44.70" y="1.5" width="0.9" height="58.4" fill="#ee7474"/><rect x="45.60" y="0" width="1.6" height="2.0" fill="#fff"/><rect x="47.20" y="1.5" width="0.6" height="58.4" fill="#f7a0a0"/><rect x="48.10" y="0" width="2.0" height="2.0" fill="#fff"/><rect x="49.90" y="1.5" width="0.6" height="58.4" fill="#f7a0a0"/><rect x="50.80" y="0" width="1.2" height="1.5" fill="#fff"/><rect x="52.60" y="1.5" width="0.9" height="58.4" fill="#ee7474"/><rect x="53.50" y="0" width="1.2" height="2.0" fill="#fff"/><rect x="55.30" y="1.5" width="0.6" height="58.4" fill="#fbb4b4"/><rect x="56.20" y="0" width="1.2" height="3.2" fill="#fff"/><rect x="58.00" y="1.5" width="0.6" height="58.4" fill="#f7a0a0"/><rect x="58.90" y="0" width="1.6" height="2.0" fill="#fff"/><rect x="60.70" y="1.5" width="0.9" height="58.4" fill="#ee7474"/><rect x="61.60" y="0" width="2.0" height="2.0" fill="#fff"/><rect x="63.40" y="1.5" width="0.6" height="58.4" fill="#f7a0a0"/><rect x="64.30" y="0" width="1.2" height="3.2" fill="#fff"/><rect x="65.90" y="1.5" width="0.6" height="58.4" fill="#f7a0a0"/><rect x="66.80" y="0" width="1.6" height="2.0" fill="#fff"/><rect x="68.40" y="1.5" width="0.9" height="58.4" fill="#ee7474"/><rect x="69.30" y="0" width="1.2" height="2.0" fill="#fff"/><rect x="71.10" y="1.5" width="0.6" height="58.4" fill="#fbb4b4"/><rect x="72.00" y="0" width="1.2" height="2.6" fill="#fff"/><rect x="73.60" y="1.5" width="0.6" height="58.4" fill="#fbb4b4"/><rect x="74.50" y="0" width="1.6" height="3.2" fill="#fff"/><rect x="75.90" y="1.5" width="0.9" height="58.4" fill="#ee7474"/><rect x="76.80" y="0" width="1.6" height="1.5" fill="#fff"/><rect x="78.40" y="1.5" width="0.6" height="58.4" fill="#fbb4b4"/><rect x="79.30" y="0" width="2.0" height="2.0" fill="#fff"/><rect x="81.10" y="1.5" width="0.6" height="58.4" fill="#fbb4b4"/><rect x="82.00" y="0" width="2.0" height="3.2" fill="#fff"/><rect x="83.40" y="1.5" width="0.9" height="58.4" fill="#ee7474"/><rect x="84.30" y="0" width="1.6" height="2.0" fill="#fff"/><rect x="85.90" y="1.5" width="0.6" height="58.4" fill="#f7a0a0"/><rect x="86.80" y="0" width="1.6" height="1.5" fill="#fff"/><rect x="88.20" y="1.5" width="0.6" height="58.4" fill="#f7a0a0"/><rect x="89.10" y="0" width="1.6" height="3.2" fill="#fff"/><rect x="90.50" y="1.5" width="0.9" height="58.4" fill="#ee7474"/><rect x="91.40" y="0" width="2.0" height="2.6" fill="#fff"/><rect x="93.00" y="1.5" width="0.6" height="58.4" fill="#f7a0a0"/><rect x="93.90" y="0" width="2.0" height="1.5" fill="#fff"/><rect x="95.30" y="1.5" width="0.6" height="58.4" fill="#fbb4b4"/><rect x="96.20" y="0" width="2.0" height="1.5" fill="#fff"/><rect x="97.60" y="1.5" width="0.9" height="58.4" fill="#ee7474"/><rect x="98.50" y="0" width="1.6" height="3.2" fill="#fff"/><rect x="100.10" y="1.5" width="0.6" height="58.4" fill="#fbb4b4"/><rect x="101.00" y="0" width="1.6" height="1.5" fill="#fff"/><rect x="102.40" y="1.5" width="0.6" height="58.4" fill="#f7a0a0"/><rect x="103.30" y="0" width="1.6" height="1.5" fill="#fff"/><rect x="104.70" y="1.5" width="0.9" height="58.4" fill="#ee7474"/><rect x="105.60" y="0" width="2.0" height="2.0" fill="#fff"/><rect x="107.00" y="1.5" width="0.6" height="58.4" fill="#f7a0a0"/><rect x="107.90" y="0" width="1.6" height="3.2" fill="#fff"/><rect x="109.70" y="1.5" width="0.6" height="58.4" fill="#f7a0a0"/><rect x="110.60" y="0" width="1.2" height="3.2" fill="#fff"/><rect x="112.40" y="1.5" width="0.9" height="58.4" fill="#ee7474"/><rect x="113.30" y="0" width="1.2" height="3.2" fill="#fff"/><rect x="114.70" y="1.5" width="0.6" height="58.4" fill="#fbb4b4"/><rect x="115.60" y="0" width="1.6" height="2.6" fill="#fff"/><rect x="117.40" y="1.5" width="0.6" height="58.4" fill="#f7a0a0"/><rect x="118.30" y="0" width="1.2" height="2.0" fill="#fff"/><rect x="119.70" y="1.5" width="0.9" height="58.4" fill="#ee7474"/><rect x="120.60" y="0" width="1.6" height="2.6" fill="#fff"/><rect x="122.40" y="1.5" width="0.6" height="58.4" fill="#f7a0a0"/><rect x="123.30" y="0" width="1.2" height="1.5" fill="#fff"/><rect x="125.10" y="1.5" width="0.6" height="58.4" fill="#fbb4b4"/><rect x="126.00" y="0" width="2.0" height="1.5" fill="#fff"/><rect x="127.40" y="1.5" width="0.9" height="58.4" fill="#ee7474"/><rect x="128.30" y="0" width="2.0" height="2.6" fill="#fff"/><rect x="129.90" y="1.5" width="0.6" height="58.4" fill="#fbb4b4"/><rect x="130.80" y="0" width="1.6" height="2.6" fill="#fff"/><rect x="132.40" y="1.5" width="0.6" height="58.4" fill="#f7a0a0"/><rect x="133.30" y="0" width="1.6" height="3.2" fill="#fff"/><rect x="135.10" y="1.5" width="0.9" height="58.4" fill="#ee7474"/><rect x="136.00" y="0" width="1.6" height="2.6" fill="#fff"/><rect x="137.40" y="1.5" width="0.6" height="58.4" fill="#f7a0a0"/><rect x="138.30" y="0" width="2.0" height="3.2" fill="#fff"/><rect x="139.90" y="1.5" width="0.6" height="58.4" fill="#fbb4b4"/><rect x="140.80" y="0" width="2.0" height="2.6" fill="#fff"/><rect x="142.20" y="1.5" width="0.9" height="58.4" fill="#ee7474"/><rect x="143.10" y="0" width="1.6" height="3.2" fill="#fff"/><rect x="144.70" y="1.5" width="0.6" height="58.4" fill="#fbb4b4"/><rect x="145.60" y="0" width="1.6" height="1.5" fill="#fff"/><rect x="147.00" y="1.5" width="0.6" height="58.4" fill="#fbb4b4"/><rect x="147.90" y="0" width="2.0" height="3.2" fill="#fff"/><rect x="149.50" y="1.5" width="0.9" height="58.4" fill="#ee7474"/><rect x="150.40" y="0" width="1.6" height="3.2" fill="#fff"/><rect x="152.20" y="1.5" width="0.6" height="58.4" fill="#f7a0a0"/><rect x="153.10" y="0" width="1.6" height="3.2" fill="#fff"/><rect x="154.90" y="1.5" width="0.6" height="58.4" fill="#fbb4b4"/><rect x="155.80" y="0" width="1.2" height="1.5" fill="#fff"/><rect x="0" y="6.0" width="155.6" height="0.6" fill="rgba(255,255,255,0.35)"/><rect x="0" y="14.0" width="155.6" height="0.6" fill="rgba(255,255,255,0.35)"/><rect x="0" y="22.0" width="155.6" height="0.6" fill="rgba(255,255,255,0.35)"/><rect x="0" y="30.0" width="155.6" height="0.6" fill="rgba(255,255,255,0.35)"/><rect x="0" y="38.0" width="155.6" height="0.6" fill="rgba(255,255,255,0.35)"/><rect x="0" y="46.0" width="155.6" height="0.6" fill="rgba(255,255,255,0.35)"/><rect x="0" y="54.0" width="155.6" height="0.6" fill="rgba(255,255,255,0.35)"/><rect x="2.7" y="0" width="0.6" height="58.400000000000006" fill="rgba(255,255,255,0.35)"/><rect x="10.7" y="0" width="0.6" height="58.400000000000006" fill="rgba(255,255,255,0.35)"/><rect x="18.7" y="0" width="0.6" height="58.400000000000006" fill="rgba(255,255,255,0.35)"/><rect x="26.7" y="0" width="0.6" height="58.400000000000006" fill="rgba(255,255,255,0.35)"/><rect x="34.7" y="0" width="0.6" height="58.400000000000006" fill="rgba(255,255,255,0.35)"/><rect x="42.7" y="0" width="0.6" height="58.400000000000006" fill="rgba(255,255,255,0.35)"/><rect x="50.7" y="0" width="0.6" height="58.400000000000006" fill="rgba(255,255,255,0.35)"/><rect x="58.7" y="0" width="0.6" height="58.400000000000006" fill="rgba(255,255,255,0.35)"/><rect x="66.7" y="0" width="0.6" height="58.400000000000006" fill="rgba(255,255,255,0.35)"/><rect x="74.7" y="0" width="0.6" height="58.400000000000006" fill="rgba(255,255,255,0.35)"/><rect x="82.7" y="0" width="0.6" height="58.400000000000006" fill="rgba(255,255,255,0.35)"/><rect x="90.7" y="0" width="0.6" height="58.400000000000006" fill="rgba(255,255,255,0.35)"/><rect x="98.7" y="0" width="0.6" height="58.400000000000006" fill="rgba(255,255,255,0.35)"/><rect x="106.7" y="0" width="0.6" height="58.400000000000006" fill="rgba(255,255,255,0.35)"/><rect x="114.7" y="0" width="0.6" height="58.400000000000006" fill="rgba(255,255,255,0.35)"/><rect x="122.7" y="0" width="0.6" height="58.400000000000006" fill="rgba(255,255,255,0.35)"/><rect x="130.7" y="0" width="0.6" height="58.400000000000006" fill="rgba(255,255,255,0.35)"/><rect x="138.7" y="0" width="0.6" height="58.400000000000006" fill="rgba(255,255,255,0.35)"/><rect x="146.7" y="0" width="0.6" height="58.400000000000006" fill="rgba(255,255,255,0.35)"/><rect x="154.7" y="0" width="0.6" height="58.400000000000006" fill="rgba(255,255,255,0.35)"/></svg>
<svg class="a" style="left:381.7px;top:252.1px" width="155.6" height="31.700000000000017"><rect x="0" y="1" width="155.6" height="31.200000000000017" fill="#b466c0"/><rect x="0.30" y="0" width="1.0" height="31.2" fill="#b868c0"/><rect x="2.10" y="0" width="1.0" height="31.2" fill="#b868c0"/><rect x="4.30" y="0" width="1.0" height="31.2" fill="#aa5ac8"/><rect x="6.10" y="1.0" width="1.0" height="31.2" fill="#b868c0"/><rect x="7.90" y="0.5" width="1.0" height="31.2" fill="#e080b0"/><rect x="10.10" y="0.5" width="1.0" height="31.2" fill="#9a50d0"/><rect x="12.30" y="0" width="1.0" height="31.2" fill="#b868c0"/><rect x="13.70" y="0.5" width="1.0" height="31.2" fill="#d070b0"/><rect x="15.10" y="1.0" width="1.0" height="31.2" fill="#c070c0"/><rect x="17.30" y="1.0" width="1.0" height="31.2" fill="#aa5ac8"/><rect x="19.10" y="0" width="1.0" height="31.2" fill="#d070b0"/><rect x="20.50" y="0.5" width="1.0" height="31.2" fill="#9a50d0"/><rect x="22.70" y="0.5" width="1.0" height="31.2" fill="#aa5ac8"/><rect x="24.10" y="1.0" width="1.0" height="31.2" fill="#c070c0"/><rect x="25.90" y="1.0" width="1.0" height="31.2" fill="#9a50d0"/><rect x="27.70" y="0.5" width="1.0" height="31.2" fill="#aa5ac8"/><rect x="29.10" y="0.5" width="1.0" height="31.2" fill="#d070b0"/><rect x="31.30" y="0" width="1.0" height="31.2" fill="#d070b0"/><rect x="33.10" y="0" width="1.0" height="31.2" fill="#c070c0"/><rect x="34.50" y="0" width="1.0" height="31.2" fill="#e080b0"/><rect x="36.70" y="0" width="1.0" height="31.2" fill="#e080b0"/><rect x="38.10" y="0" width="1.0" height="31.2" fill="#b868c0"/><rect x="39.50" y="1.0" width="1.0" height="31.2" fill="#d070b0"/><rect x="41.70" y="0" width="1.0" height="31.2" fill="#9a50d0"/><rect x="43.50" y="0" width="1.0" height="31.2" fill="#e080b0"/><rect x="45.30" y="0.5" width="1.0" height="31.2" fill="#e080b0"/><rect x="47.50" y="0" width="1.0" height="31.2" fill="#d070b0"/><rect x="49.30" y="0.5" width="1.0" height="31.2" fill="#e080b0"/><rect x="51.50" y="0.5" width="1.0" height="31.2" fill="#e080b0"/><rect x="53.30" y="1.0" width="1.0" height="31.2" fill="#c070c0"/><rect x="55.10" y="0.5" width="1.0" height="31.2" fill="#aa5ac8"/><rect x="56.50" y="0" width="1.0" height="31.2" fill="#b868c0"/><rect x="57.90" y="1.0" width="1.0" height="31.2" fill="#9a50d0"/><rect x="60.10" y="0" width="1.0" height="31.2" fill="#9a50d0"/><rect x="61.50" y="0" width="1.0" height="31.2" fill="#b868c0"/><rect x="62.90" y="1.0" width="1.0" height="31.2" fill="#b868c0"/><rect x="64.70" y="0.5" width="1.0" height="31.2" fill="#9a50d0"/><rect x="66.90" y="0.5" width="1.0" height="31.2" fill="#9a50d0"/><rect x="68.30" y="1.0" width="1.0" height="31.2" fill="#d070b0"/><rect x="70.10" y="0" width="1.0" height="31.2" fill="#c070c0"/><rect x="72.30" y="1.0" width="1.0" height="31.2" fill="#aa5ac8"/><rect x="73.70" y="0" width="1.0" height="31.2" fill="#aa5ac8"/><rect x="75.50" y="0" width="1.0" height="31.2" fill="#9a50d0"/><rect x="77.30" y="0" width="1.0" height="31.2" fill="#b868c0"/><rect x="79.10" y="1.0" width="1.0" height="31.2" fill="#c070c0"/><rect x="81.30" y="0.5" width="1.0" height="31.2" fill="#c070c0"/><rect x="82.70" y="0" width="1.0" height="31.2" fill="#c070c0"/><rect x="84.90" y="0.5" width="1.0" height="31.2" fill="#e080b0"/><rect x="86.30" y="0" width="1.0" height="31.2" fill="#9a50d0"/><rect x="88.50" y="0" width="1.0" height="31.2" fill="#b868c0"/><rect x="89.90" y="0" width="1.0" height="31.2" fill="#b868c0"/><rect x="91.70" y="0" width="1.0" height="31.2" fill="#c070c0"/><rect x="93.50" y="0" width="1.0" height="31.2" fill="#aa5ac8"/><rect x="95.70" y="0.5" width="1.0" height="31.2" fill="#aa5ac8"/><rect x="97.50" y="1.0" width="1.0" height="31.2" fill="#d070b0"/><rect x="99.70" y="0" width="1.0" height="31.2" fill="#aa5ac8"/><rect x="101.50" y="1.0" width="1.0" height="31.2" fill="#b868c0"/><rect x="103.30" y="1.0" width="1.0" height="31.2" fill="#9a50d0"/><rect x="104.70" y="0.5" width="1.0" height="31.2" fill="#e080b0"/><rect x="106.10" y="0" width="1.0" height="31.2" fill="#e080b0"/><rect x="107.50" y="0" width="1.0" height="31.2" fill="#aa5ac8"/><rect x="109.30" y="1.0" width="1.0" height="31.2" fill="#c070c0"/><rect x="111.50" y="0" width="1.0" height="31.2" fill="#9a50d0"/><rect x="113.30" y="1.0" width="1.0" height="31.2" fill="#b868c0"/><rect x="115.10" y="0.5" width="1.0" height="31.2" fill="#aa5ac8"/><rect x="117.30" y="0.5" width="1.0" height="31.2" fill="#b868c0"/><rect x="118.70" y="0" width="1.0" height="31.2" fill="#e080b0"/><rect x="120.50" y="0" width="1.0" height="31.2" fill="#c070c0"/><rect x="121.90" y="1.0" width="1.0" height="31.2" fill="#c070c0"/><rect x="123.30" y="0" width="1.0" height="31.2" fill="#d070b0"/><rect x="124.70" y="0" width="1.0" height="31.2" fill="#aa5ac8"/><rect x="126.90" y="1.0" width="1.0" height="31.2" fill="#d070b0"/><rect x="128.30" y="0" width="1.0" height="31.2" fill="#c070c0"/><rect x="130.50" y="0" width="1.0" height="31.2" fill="#c070c0"/><rect x="132.70" y="0" width="1.0" height="31.2" fill="#aa5ac8"/><rect x="134.10" y="1.0" width="1.0" height="31.2" fill="#aa5ac8"/><rect x="136.30" y="0" width="1.0" height="31.2" fill="#e080b0"/><rect x="137.70" y="0.5" width="1.0" height="31.2" fill="#d070b0"/><rect x="139.90" y="0" width="1.0" height="31.2" fill="#b868c0"/><rect x="141.70" y="0" width="1.0" height="31.2" fill="#b868c0"/><rect x="143.10" y="0.5" width="1.0" height="31.2" fill="#9a50d0"/><rect x="144.50" y="0.5" width="1.0" height="31.2" fill="#9a50d0"/><rect x="146.70" y="0" width="1.0" height="31.2" fill="#9a50d0"/><rect x="148.90" y="0" width="1.0" height="31.2" fill="#d070b0"/><rect x="151.10" y="0" width="1.0" height="31.2" fill="#b868c0"/><rect x="152.90" y="0" width="1.0" height="31.2" fill="#9a50d0"/><rect x="155.10" y="0" width="1.0" height="31.2" fill="#c070c0"/></svg>
<div class="a" style="left:381.7px;top:252.6px;width:0.9px;height:31.200000000000017px;background:#3030e0;"></div>
<div class="a" style="left:383px;top:263.2px;width:70px;height:19.5px;background:#fff;border:0.7px solid #b5b5b5;"></div>
<div class="a" style="left:384.4px;top:265.0px;width:6.6px;height:6.4px;background:#0000ff;border:0.5px solid #222;"></div>
<div class="a" style="left:384.4px;top:273.0px;width:6.6px;height:6.4px;background:#ff0000;border:0.5px solid #222;"></div>
<span class="t" id="t154" style="left:393.00px;top:266.00px;font-family:'Liberation Sans',sans-serif;font-size:6.3px;color:#2a2a2a;font-weight:400;transform:scaleX(0.9416);">Tx Packet:  13 615 p/s</span>
<span class="t" id="t155" style="left:393.00px;top:274.00px;font-family:'Liberation Sans',sans-serif;font-size:6.3px;color:#2a2a2a;font-weight:400;transform:scaleX(0.9628);">Rx Packet:  23 858 p/s</span>
<div class="a" style="left:374.6px;top:289.5px;width:166px;height:13px;background:#d5d1cb;"></div>
<div class="a" style="left:376px;top:290.4px;width:60.2px;height:11.6px;background:#d8d4ce;border:0.7px solid #b8b4ae;border-right-color:#eeebe6;border-bottom-color:#eeebe6;"></div>
<span class="t" id="t156" style="left:377.80px;top:293.00px;font-family:'Liberation Sans',sans-serif;font-size:6.3px;color:#2a2a2a;font-weight:400;transform:scaleX(1.0258);">enabled</span>
<div class="a" style="left:437px;top:290.4px;width:60.2px;height:11.6px;background:#d8d4ce;border:0.7px solid #b8b4ae;border-right-color:#eeebe6;border-bottom-color:#eeebe6;"></div>
<span class="t" id="t157" style="left:438.80px;top:293.00px;font-family:'Liberation Sans',sans-serif;font-size:6.3px;color:#2a2a2a;font-weight:400;transform:scaleX(1.0230);">running</span>
<div class="a" style="left:498px;top:290.4px;width:41.2px;height:11.6px;background:#d8d4ce;border:0.7px solid #b8b4ae;border-right-color:#eeebe6;border-bottom-color:#eeebe6;"></div>
<span class="t" id="t158" style="left:499.80px;top:293.00px;font-family:'Liberation Sans',sans-serif;font-size:6.3px;color:#b5b1ab;font-weight:400;transform:scaleX(0.8842);">slave</span>
<div class="a" style="left:540.3px;top:15.3px;width:1.1px;height:287.5px;background:#8f8c87;"></div>
<div class="a" style="left:541.3px;top:15.3px;width:187.9px;height:287.5px;background:#d5d1cb;"></div>
<div class="a" style="left:540.6999999999999px;top:15.1px;width:188.5px;height:12.6px;background:#aeaba6;"></div>
<span class="t" id="t159" style="left:543.10px;top:20.00px;font-family:'Liberation Sans',sans-serif;font-size:6.6px;color:#f4f2ee;font-weight:400;transform:scaleX(0.9683);">Bandwidth Test (Running)</span>
<div class="a" style="left:709.9999999999999px;top:18.4px;width:7px;height:7.6px;background:#dedbd6;border:0.7px solid #8d8a85;"></div>
<div class="a" style="left:711.6999999999999px;top:20.2px;width:3.6px;height:4px;background:#fff;border-top:1.2px solid #333;"></div>
<div class="a" style="left:719.3px;top:18.4px;width:7px;height:7.6px;background:#dedbd6;border:0.7px solid #8d8a85;"></div>
<svg class="a" style="left:719.3px;top:18.4px" width="7" height="7.6"><path d="M1.8 2 L5.2 5.6 M5.2 2 L1.8 5.6" stroke="#222" stroke-width="1.1"/></svg>
<span class="t" id="t160" style="left:587.50px;top:34.00px;font-family:'Liberation Sans',sans-serif;font-size:6.3px;color:#2a2a2a;font-weight:400;transform:scaleX(1.1087);">Test To</span>
<div class="a" style="left:611px;top:31px;width:73px;height:9.6px;background:#ffffff;border:1px solid #a9a59f;border-right-color:#eeebe6;border-bottom-color:#eeebe6;"></div>
<div class="a" style="left:612px;top:31.5px;width:34px;height:8.5px;background:#fff;border-radius:4px;box-shadow:0 0 3px 2px #fff;"></div>
<div class="a" style="left:693px;top:31.5px;width:31.5px;height:12px;background:#dcd8d2;border:0.8px solid #a6a29c;"></div>
<span class="t" id="t161" style="left:700.95px;top:35.00px;font-family:'Liberation Sans',sans-serif;font-size:6.3px;color:#2a2a2a;font-weight:400;transform:scaleX(1.1643);">Start</span>
<div class="a" style="left:693px;top:45.5px;width:31.5px;height:12px;background:#dcd8d2;border:0.8px solid #a6a29c;"></div>
<span class="t" id="t162" style="left:701.95px;top:49.00px;font-family:'Liberation Sans',sans-serif;font-size:6.3px;color:#2a2a2a;font-weight:400;transform:scaleX(1.0410);">Stop</span>
<div class="a" style="left:693px;top:59px;width:31.5px;height:12px;background:#dcd8d2;border:0.8px solid #a6a29c;"></div>
<span class="t" id="t163" style="left:700.95px;top:62.00px;font-family:'Liberation Sans',sans-serif;font-size:6.3px;color:#2a2a2a;font-weight:400;transform:scaleX(0.9622);">Close</span>
<span class="t" id="t164" style="left:586.00px;top:47.00px;font-family:'Liberation Sans',sans-serif;font-size:6.3px;color:#2a2a2a;font-weight:400;transform:scaleX(0.9453);">Protocol:</span>
<svg class="a" style="left:611px;top:46px" width="45" height="8"><circle cx="3.6" cy="3.8" r="2.9" fill="#fff" stroke="#777" stroke-width="0.8"/><circle cx="27.3" cy="3.8" r="2.9" fill="#fff" stroke="#777" stroke-width="0.8"/><circle cx="27.3" cy="3.8" r="1.3" fill="#222"/></svg>
<span class="t" id="t165" style="left:620.00px;top:47.00px;font-family:'Liberation Sans',sans-serif;font-size:6.3px;color:#2a2a2a;font-weight:400;transform:scaleX(0.9510);">udp</span>
<span class="t" id="t166" style="left:643.50px;top:47.00px;font-family:'Liberation Sans',sans-serif;font-size:6.3px;color:#2a2a2a;font-weight:400;transform:scaleX(1.0706);">tcp</span>
<span class="t" id="t167" style="left:561.50px;top:61.00px;font-family:'Liberation Sans',sans-serif;font-size:6.3px;color:#a9a59f;font-weight:400;transform:scaleX(0.9121);">Local UDP Tx Size</span>
<div class="a" style="left:611px;top:58.2px;width:63px;height:9.4px;background:#d9d5cf;border:1px solid #bcb8b2;border-right-color:#eeebe6;border-bottom-color:#eeebe6;"></div>
<svg class="a" style="left:676px;top:60.5px" width="7" height="5"><path d="M0.5 0.5 L6 0.5 L3.25 4 Z" fill="#8a8680"/></svg>
<span class="t" id="t168" style="left:555.50px;top:74.00px;font-family:'Liberation Sans',sans-serif;font-size:6.3px;color:#a9a59f;font-weight:400;transform:scaleX(0.9059);">Remote UDP Tx Size</span>
<div class="a" style="left:611px;top:71.6px;width:63px;height:9.4px;background:#d9d5cf;border:1px solid #bcb8b2;border-right-color:#eeebe6;border-bottom-color:#eeebe6;"></div>
<svg class="a" style="left:676px;top:74px" width="7" height="5"><path d="M0.5 0.5 L6 0.5 L3.25 4 Z" fill="#8a8680"/></svg>
<span class="t" id="t169" style="left:583.50px;top:88.00px;font-family:'Liberation Sans',sans-serif;font-size:6.3px;color:#2a2a2a;font-weight:400;transform:scaleX(0.9771);">Direction:</span>
<div class="a" style="left:611px;top:85.6px;width:63px;height:9.4px;background:#fff;border:1px solid #a9a59f;border-right-color:#eeebe6;border-bottom-color:#eeebe6;"></div>
<span class="t" id="t170" style="left:613.00px;top:88.00px;font-family:'Liberation Sans',sans-serif;font-size:6.5px;color:#2a2a2a;font-weight:400;transform:scaleX(0.9214);">send</span>
<div class="a" style="left:676px;top:85.6px;width:8.4px;height:9.4px;background:#dedad5;border:0.7px solid #aaa;"></div>
<svg class="a" style="left:677px;top:87px" width="7" height="7"><path d="M1 2 L6 2 L3.5 5.2 Z M1 5.8 L6 5.8" fill="#111" stroke="#111" stroke-width="0.6"/></svg>
<div class="a" style="left:545px;top:99.4px;width:139px;height:0.8px;background:#c8c4be;"></div>
<div class="a" style="left:545px;top:100.2px;width:139px;height:0.6px;background:#eeebe6;"></div>
<span class="t" id="t171" style="left:550.50px;top:106.00px;font-family:'Liberation Sans',sans-serif;font-size:6.3px;color:#2a2a2a;font-weight:400;transform:scaleX(0.9381);">TCP Connection Coun</span>
<div class="a" style="left:611px;top:104px;width:73px;height:9.3px;background:#fff;border:1px solid #a9a59f;border-right-color:#eeebe6;border-bottom-color:#eeebe6;"></div>
<span class="t" id="t172" style="left:613.00px;top:106.00px;font-family:'Liberation Sans',sans-serif;font-size:6.5px;color:#2a2a2a;font-weight:400;transform:scaleX(0.8294);">20</span>
<span class="t" id="t173" style="left:568.00px;top:120.00px;font-family:'Liberation Sans',sans-serif;font-size:6.3px;color:#2a2a2a;font-weight:400;transform:scaleX(0.9585);">Local Tx Speec</span>
<div class="a" style="left:611px;top:117.6px;width:51px;height:9.3px;background:#fff;border:1px solid #a9a59f;border-right-color:#eeebe6;border-bottom-color:#eeebe6;"></div>
<span class="t" id="t174" style="left:613.00px;top:120.00px;font-family:'Liberation Sans',sans-serif;font-size:6.5px;color:#2a2a2a;font-weight:400;transform:scaleX(0.8296);">25M</span>
<svg class="a" style="left:664px;top:119.6px" width="7" height="5"><path d="M0.5 4 L6 4 L3.25 0.5 Z" fill="#111"/></svg>
<span class="t" id="t175" style="left:674.00px;top:121.00px;font-family:'Liberation Sans',sans-serif;font-size:6.3px;color:#2a2a2a;font-weight:400;transform:scaleX(0.9354);">bps</span>
<span class="t" id="t176" style="left:562.50px;top:134.00px;font-family:'Liberation Sans',sans-serif;font-size:6.3px;color:#2a2a2a;font-weight:400;transform:scaleX(0.9345);">Remote Tx Speec</span>
<div class="a" style="left:611px;top:131.2px;width:51px;height:9.3px;background:#d9d5cf;border:1px solid #a9a59f;border-right-color:#eeebe6;border-bottom-color:#eeebe6;"></div>
<svg class="a" style="left:664px;top:133.6px" width="7" height="5"><path d="M0.5 0.5 L6 0.5 L3.25 4 Z" fill="#111"/></svg>
<span class="t" id="t177" style="left:674.00px;top:134.00px;font-family:'Liberation Sans',sans-serif;font-size:6.3px;color:#2a2a2a;font-weight:400;transform:scaleX(0.9354);">bps</span>
<div class="a" style="left:612px;top:145px;width:5.6px;height:5.8px;background:#fff;border:0.7px solid #888;"></div>
<span class="t" id="t178" style="left:620.00px;top:145.00px;font-family:'Liberation Sans',sans-serif;font-size:6.3px;color:#2a2a2a;font-weight:400;transform:scaleX(0.9522);">Random Data</span>
<div class="a" style="left:545px;top:155.4px;width:139px;height:0.8px;background:#c8c4be;"></div>
<div class="a" style="left:545px;top:156.2px;width:139px;height:0.6px;background:#eeebe6;"></div>
<span class="t" id="t179" style="left:595.50px;top:163.00px;font-family:'Liberation Sans',sans-serif;font-size:6.3px;color:#2a2a2a;font-weight:400;transform:scaleX(0.9304);">User:</span>
<div class="a" style="left:611px;top:160.6px;width:63px;height:9.6px;background:#fff;border:1px solid #a9a59f;border-right-color:#eeebe6;border-bottom-color:#eeebe6;"></div>
<span class="t" id="t180" style="left:613.00px;top:163.00px;font-family:'Liberation Sans',sans-serif;font-size:6.5px;color:#2a2a2a;font-weight:400;">admin01</span>
<svg class="a" style="left:677px;top:163.5px" width="7" height="5"><path d="M0.5 4 L6 4 L3.25 0.5 Z" fill="#111"/></svg>
<span class="t" id="t181" style="left:582.50px;top:177.00px;font-family:'Liberation Sans',sans-serif;font-size:6.3px;color:#2a2a2a;font-weight:400;transform:scaleX(0.9182);">Password:</span>
<div class="a" style="left:611px;top:174.4px;width:63px;height:9.6px;background:#fff;border:1px solid #a9a59f;border-right-color:#eeebe6;border-bottom-color:#eeebe6;"></div>
<span class="t" id="t182" style="left:613.00px;top:176.00px;font-family:'Liberation Sans',sans-serif;font-size:7px;color:#2a2a2a;font-weight:400;transform:scaleX(1.2281);">*************</span>
<svg class="a" style="left:677px;top:177.2px" width="7" height="5"><path d="M0.5 4 L6 4 L3.25 0.5 Z" fill="#111"/></svg>
<div class="a" style="left:545px;top:188.3px;width:139px;height:0.8px;background:#c8c4be;"></div>
<div class="a" style="left:545px;top:189.1px;width:139px;height:0.6px;background:#eeebe6;"></div>
<span class="t" id="t183" style="left:574.00px;top:195.00px;font-family:'Liberation Sans',sans-serif;font-size:6.3px;color:#2a2a2a;font-weight:400;transform:scaleX(0.9567);">Lost Packets</span>
<div class="a" style="left:611.4px;top:192.3px;width:72.3px;height:9.4px;background:#d9d5cf;border:1px solid #a9a59f;border-right-color:#eeebe6;border-bottom-color:#eeebe6;"></div>
<span class="t" id="t184" style="left:613.40px;top:194.00px;font-family:'Liberation Sans',sans-serif;font-size:6.5px;color:#2a2a2a;font-weight:400;">0</span>
<span class="t" id="t185" style="left:570.00px;top:208.00px;font-family:'Liberation Sans',sans-serif;font-size:6.3px;color:#2a2a2a;font-weight:400;transform:scaleX(0.9405);">Tx/Rx Current:</span>
<div class="a" style="left:611.4px;top:205.5px;width:72.3px;height:9.4px;background:#d9d5cf;border:1px solid #a9a59f;border-right-color:#eeebe6;border-bottom-color:#eeebe6;"></div>
<span class="t" id="t186" style="left:613.40px;top:208.00px;font-family:'Liberation Sans',sans-serif;font-size:6.5px;color:#2a2a2a;font-weight:400;transform:scaleX(0.8947);">25.1 Mbps/0 bps</span>
<span class="t" id="t187" style="left:557.50px;top:221.00px;font-family:'Liberation Sans',sans-serif;font-size:6.3px;color:#2a2a2a;font-weight:400;transform:scaleX(0.9299);">Tx/Rx 10s Average:</span>
<div class="a" style="left:611.4px;top:218.70000000000002px;width:72.3px;height:9.4px;background:#d9d5cf;border:1px solid #a9a59f;border-right-color:#eeebe6;border-bottom-color:#eeebe6;"></div>
<span class="t" id="t188" style="left:613.40px;top:221.00px;font-family:'Liberation Sans',sans-serif;font-size:6.5px;color:#2a2a2a;font-weight:400;transform:scaleX(0.8947);">25.0 Mbps/0 bps</span>
<span class="t" id="t189" style="left:554.00px;top:234.00px;font-family:'Liberation Sans',sans-serif;font-size:6.3px;color:#2a2a2a;font-weight:400;transform:scaleX(0.9710);">Tx/Rx Total Average</span>
<div class="a" style="left:611.4px;top:231.60000000000002px;width:72.3px;height:9.4px;background:#d9d5cf;border:1px solid #a9a59f;border-right-color:#eeebe6;border-bottom-color:#eeebe6;"></div>
<span class="t" id="t190" style="left:613.40px;top:234.00px;font-family:'Liberation Sans',sans-serif;font-size:6.5px;color:#2a2a2a;font-weight:400;transform:scaleX(0.8947);">24.9 Mbps/0 bps</span>
<div class="a" style="left:545px;top:245px;width:139px;height:42.5px;background:#d8d8ff;border:1px solid #9e9a94;border-right-color:#f2f0ec;border-bottom-color:#f2f0ec;"></div>
<svg class="a" style="left:546px;top:246px" width="137" height="41"><rect x="1.50" y="0.8" width="0.7" height="40" fill="#9a9af0"/><rect x="4.30" y="0.8" width="0.7" height="40" fill="#9a9af0"/><rect x="6.30" y="0.8" width="0.7" height="40" fill="#9a9af0"/><rect x="8.70" y="0.8" width="0.7" height="40" fill="#9a9af0"/><rect x="11.10" y="0.8" width="0.7" height="40" fill="#5050e8"/><rect x="14.30" y="0.8" width="0.7" height="40" fill="#9a9af0"/><rect x="17.50" y="0.8" width="0.7" height="40" fill="#9a9af0"/><rect x="19.90" y="0.8" width="0.7" height="40" fill="#5050e8"/><rect x="22.30" y="0.8" width="0.7" height="40" fill="#9a9af0"/><rect x="24.70" y="0.8" width="0.7" height="40" fill="#9a9af0"/><rect x="27.90" y="0.8" width="0.7" height="40" fill="#5050e8"/><rect x="29.90" y="0.8" width="0.7" height="40" fill="#5050e8"/><rect x="33.10" y="0.8" width="0.7" height="40" fill="#5050e8"/><rect x="35.10" y="0.8" width="0.7" height="40" fill="#9a9af0"/><rect x="37.10" y="0.8" width="0.7" height="40" fill="#5050e8"/><rect x="39.50" y="0.8" width="0.7" height="40" fill="#9a9af0"/><rect x="41.90" y="0.8" width="0.7" height="40" fill="#9a9af0"/><rect x="44.70" y="0.8" width="0.7" height="40" fill="#5050e8"/><rect x="47.10" y="0.8" width="0.7" height="40" fill="#9a9af0"/><rect x="49.50" y="0.8" width="0.7" height="40" fill="#5050e8"/><rect x="51.90" y="0.8" width="0.7" height="40" fill="#9a9af0"/><rect x="55.10" y="0.8" width="0.7" height="40" fill="#5050e8"/><rect x="57.90" y="0.8" width="0.7" height="40" fill="#9a9af0"/><rect x="60.30" y="0.8" width="0.7" height="40" fill="#5050e8"/><rect x="63.10" y="0.8" width="0.7" height="40" fill="#5050e8"/><rect x="65.10" y="0.8" width="0.7" height="40" fill="#9a9af0"/><rect x="67.90" y="0.8" width="0.7" height="40" fill="#5050e8"/><rect x="70.70" y="0.8" width="0.7" height="40" fill="#9a9af0"/><rect x="73.90" y="0.8" width="0.7" height="40" fill="#9a9af0"/><rect x="76.30" y="0.8" width="0.7" height="40" fill="#9a9af0"/><rect x="78.70" y="0.8" width="0.7" height="40" fill="#5050e8"/><rect x="80.70" y="0.8" width="0.7" height="40" fill="#9a9af0"/><rect x="83.50" y="0.8" width="0.7" height="40" fill="#9a9af0"/><rect x="85.50" y="0.8" width="0.7" height="40" fill="#9a9af0"/><rect x="88.70" y="0.8" width="0.7" height="40" fill="#5050e8"/><rect x="90.70" y="0.8" width="0.7" height="40" fill="#9a9af0"/><rect x="93.10" y="0.8" width="0.7" height="40" fill="#9a9af0"/><rect x="95.50" y="0.8" width="0.7" height="40" fill="#5050e8"/><rect x="97.90" y="0.8" width="0.7" height="40" fill="#9a9af0"/><rect x="101.10" y="0.8" width="0.7" height="40" fill="#5050e8"/><rect x="103.90" y="0.8" width="0.7" height="40" fill="#9a9af0"/><rect x="106.70" y="0.8" width="0.7" height="40" fill="#9a9af0"/><rect x="108.70" y="0.8" width="0.7" height="40" fill="#9a9af0"/><rect x="111.50" y="0.8" width="0.7" height="40" fill="#9a9af0"/><rect x="113.50" y="0.8" width="0.7" height="40" fill="#9a9af0"/><rect x="115.50" y="0.8" width="0.7" height="40" fill="#5050e8"/><rect x="118.30" y="0.8" width="0.7" height="40" fill="#9a9af0"/><rect x="121.10" y="0.8" width="0.7" height="40" fill="#5050e8"/><rect x="123.10" y="0.8" width="0.7" height="40" fill="#5050e8"/><rect x="125.90" y="0.8" width="0.7" height="40" fill="#5050e8"/><rect x="127.90" y="0.8" width="0.7" height="40" fill="#9a9af0"/><rect x="130.70" y="0.8" width="0.7" height="40" fill="#9a9af0"/><rect x="133.10" y="0.8" width="0.7" height="40" fill="#9a9af0"/><rect x="135.10" y="0.8" width="0.7" height="40" fill="#9a9af0"/><rect x="0" y="7.0" width="137" height="0.6" fill="rgba(255,255,255,0.4)"/><rect x="0" y="15.0" width="137" height="0.6" fill="rgba(255,255,255,0.4)"/><rect x="0" y="23.0" width="137" height="0.6" fill="rgba(255,255,255,0.4)"/><rect x="0" y="31.0" width="137" height="0.6" fill="rgba(255,255,255,0.4)"/><rect x="0" y="39.0" width="137" height="0.6" fill="rgba(255,255,255,0.4)"/></svg>
<div class="a" style="left:547px;top:265.5px;width:56px;height:19px;background:#fff;border:0.7px solid #b5b5b5;"></div>
<div class="a" style="left:548.4px;top:267.4px;width:6.6px;height:6.6px;background:#0000ff;border:0.5px solid #222;"></div>
<div class="a" style="left:548.4px;top:275.6px;width:6.6px;height:6.6px;background:#ff0000;border:0.5px solid #222;"></div>
<span class="t" id="t191" style="left:556.50px;top:268.00px;font-family:'Liberation Sans',sans-serif;font-size:6.3px;color:#2a2a2a;font-weight:400;transform:scaleX(0.9122);">Tx:  25.1 Mbps</span>
<span class="t" id="t192" style="left:556.50px;top:277.00px;font-family:'Liberation Sans',sans-serif;font-size:6.3px;color:#2a2a2a;font-weight:400;transform:scaleX(0.8463);">Rx:</span>
<div class="a" style="left:541.3px;top:290.3px;width:187.5px;height:12.3px;background:#d8d4ce;border:0.7px solid #b8b4ae;border-right-color:#eeebe6;border-bottom-color:#eeebe6;"></div>
<span class="t" id="t193" style="left:543.00px;top:293.00px;font-family:'Liberation Sans',sans-serif;font-size:6.3px;color:#2a2a2a;font-weight:400;transform:scaleX(1.0660);">running...</span>
<div class="a" style="left:728.6px;top:15.3px;width:0.8px;height:287.5px;background:#8f8c87;"></div>
<div class="a" style="left:373.8px;top:302.6px;width:355.4px;height:1.2px;background:#5a5854;"></div>
<div class="a" style="left:373.8px;top:303.8px;width:355.4px;height:183.5px;background:#d5d1cb;"></div>
<div class="a" style="left:376px;top:304.5px;width:151px;height:11.5px;background:#d9d6d0;border:0.7px solid #c8c4be;"></div>
<div class="a" style="left:376px;top:317.6px;width:151.2px;height:169px;background:#fff;border:0.7px solid #a9a59f;"></div>
<div class="a" style="left:376.5px;top:318px;width:150.5px;height:8.6px;background:#d6d2cc;"></div>
<div class="a" style="left:401.4px;top:318.4px;width:0.7px;height:7.8px;background:#b6b2ac;"></div>
<span class="t" id="t194" style="left:379.80px;top:320.00px;font-family:'Liberation Sans',sans-serif;font-size:6.3px;color:#2a2a2a;font-weight:400;transform:scaleX(0.8492);">Se...</span>
<div class="a" style="left:440.9px;top:318.4px;width:0.7px;height:7.8px;background:#b6b2ac;"></div>
<span class="t" id="t195" style="left:403.80px;top:320.00px;font-family:'Liberation Sans',sans-serif;font-size:6.3px;color:#2a2a2a;font-weight:400;transform:scaleX(1.0036);">Host</span>
<div class="a" style="left:465.4px;top:318.4px;width:0.7px;height:7.8px;background:#b6b2ac;"></div>
<span class="t" id="t196" style="left:443.30px;top:320.00px;font-family:'Liberation Sans',sans-serif;font-size:6.3px;color:#2a2a2a;font-weight:400;transform:scaleX(0.9807);">Time</span>
<div class="a" style="left:486.9px;top:318.4px;width:0.7px;height:7.8px;background:#b6b2ac;"></div>
<span class="t" id="t197" style="left:467.80px;top:320.00px;font-family:'Liberation Sans',sans-serif;font-size:6.3px;color:#2a2a2a;font-weight:400;transform:scaleX(0.8377);">Reply...</span>
<div class="a" style="left:505.4px;top:318.4px;width:0.7px;height:7.8px;background:#b6b2ac;"></div>
<span class="t" id="t198" style="left:489.30px;top:320.00px;font-family:'Liberation Sans',sans-serif;font-size:6.3px;color:#2a2a2a;font-weight:400;transform:scaleX(0.8033);">TTL</span>
<div class="a" style="left:526.4px;top:318.4px;width:0.7px;height:7.8px;background:#b6b2ac;"></div>
<span class="t" id="t199" style="left:507.80px;top:320.00px;font-family:'Liberation Sans',sans-serif;font-size:6.3px;color:#2a2a2a;font-weight:400;transform:scaleX(0.9519);">Status</span>
<svg class="a" style="left:397px;top:320px" width="4" height="4"><path d="M0.3 3.5 L3.5 0.5" stroke="#777" stroke-width="0.6"/></svg>
<div class="a" style="left:401.4px;top:326.6px;width:0.6px;height:160px;background:#efefef;"></div>
<div class="a" style="left:440.9px;top:326.6px;width:0.6px;height:160px;background:#efefef;"></div>
<div class="a" style="left:465.4px;top:326.6px;width:0.6px;height:160px;background:#efefef;"></div>
<div class="a" style="left:486.9px;top:326.6px;width:0.6px;height:160px;background:#efefef;"></div>
<div class="a" style="left:505.4px;top:326.6px;width:0.6px;height:160px;background:#efefef;"></div>
<div class="a" style="left:376.5px;top:334.20000000000005px;width:150.5px;height:0.6px;background:#ececec;"></div>
<span class="t" id="t200" style="left:391.60px;top:328.00px;font-family:'Liberation Sans',sans-serif;font-size:6.3px;color:#2a2a2a;font-weight:400;transform:scaleX(0.9700);">300</span>
<span class="t" id="t201" style="left:403.80px;top:328.00px;font-family:'Liberation Sans',sans-serif;font-size:6.3px;color:#2a2a2a;font-weight:400;transform:scaleX(0.9319);">10.10.5.100</span>
<span class="t" id="t202" style="left:443.00px;top:328.00px;font-family:'Liberation Sans',sans-serif;font-size:6.3px;color:#2a2a2a;font-weight:400;transform:scaleX(0.8819);">4ms</span>
<span class="t" id="t203" style="left:480.40px;top:328.00px;font-family:'Liberation Sans',sans-serif;font-size:6.3px;color:#2a2a2a;font-weight:400;">64</span>
<span class="t" id="t204" style="left:498.70px;top:328.00px;font-family:'Liberation Sans',sans-serif;font-size:6.3px;color:#2a2a2a;font-weight:400;transform:scaleX(0.9693);">64</span>
<div class="a" style="left:376.5px;top:342.06000000000006px;width:150.5px;height:0.6px;background:#ececec;"></div>
<span class="t" id="t205" style="left:391.60px;top:336.00px;font-family:'Liberation Sans',sans-serif;font-size:6.3px;color:#2a2a2a;font-weight:400;transform:scaleX(0.9700);">301</span>
<span class="t" id="t206" style="left:403.80px;top:336.00px;font-family:'Liberation Sans',sans-serif;font-size:6.3px;color:#2a2a2a;font-weight:400;transform:scaleX(0.9319);">10.10.5.100</span>
<span class="t" id="t207" style="left:443.00px;top:336.00px;font-family:'Liberation Sans',sans-serif;font-size:6.3px;color:#2a2a2a;font-weight:400;transform:scaleX(0.8819);">2ms</span>
<span class="t" id="t208" style="left:480.40px;top:336.00px;font-family:'Liberation Sans',sans-serif;font-size:6.3px;color:#2a2a2a;font-weight:400;">64</span>
<span class="t" id="t209" style="left:498.70px;top:336.00px;font-family:'Liberation Sans',sans-serif;font-size:6.3px;color:#2a2a2a;font-weight:400;transform:scaleX(0.9693);">64</span>
<div class="a" style="left:376.5px;top:349.9200000000001px;width:150.5px;height:0.6px;background:#ececec;"></div>
<span class="t" id="t210" style="left:391.60px;top:344.00px;font-family:'Liberation Sans',sans-serif;font-size:6.3px;color:#2a2a2a;font-weight:400;transform:scaleX(0.9700);">302</span>
<span class="t" id="t211" style="left:403.80px;top:344.00px;font-family:'Liberation Sans',sans-serif;font-size:6.3px;color:#2a2a2a;font-weight:400;transform:scaleX(0.9319);">10.10.5.100</span>
<span class="t" id="t212" style="left:443.00px;top:344.00px;font-family:'Liberation Sans',sans-serif;font-size:6.3px;color:#2a2a2a;font-weight:400;transform:scaleX(0.8819);">1ms</span>
<span class="t" id="t213" style="left:480.40px;top:344.00px;font-family:'Liberation Sans',sans-serif;font-size:6.3px;color:#2a2a2a;font-weight:400;">64</span>
<span class="t" id="t214" style="left:498.70px;top:344.00px;font-family:'Liberation Sans',sans-serif;font-size:6.3px;color:#2a2a2a;font-weight:400;transform:scaleX(0.9693);">64</span>
<div class="a" style="left:376.5px;top:357.78000000000003px;width:150.5px;height:0.6px;background:#ececec;"></div>
<span class="t" id="t215" style="left:391.60px;top:352.00px;font-family:'Liberation Sans',sans-serif;font-size:6.3px;color:#2a2a2a;font-weight:400;transform:scaleX(0.9700);">303</span>
<span class="t" id="t216" style="left:403.80px;top:352.00px;font-family:'Liberation Sans',sans-serif;font-size:6.3px;color:#2a2a2a;font-weight:400;transform:scaleX(0.9319);">10.10.5.100</span>
<span class="t" id="t217" style="left:443.00px;top:352.00px;font-family:'Liberation Sans',sans-serif;font-size:6.3px;color:#2a2a2a;font-weight:400;transform:scaleX(0.8819);">1ms</span>
<span class="t" id="t218" style="left:480.40px;top:352.00px;font-family:'Liberation Sans',sans-serif;font-size:6.3px;color:#2a2a2a;font-weight:400;">64</span>
<span class="t" id="t219" style="left:498.70px;top:352.00px;font-family:'Liberation Sans',sans-serif;font-size:6.3px;color:#2a2a2a;font-weight:400;transform:scaleX(0.9693);">64</span>
<div class="a" style="left:376.5px;top:365.64000000000004px;width:150.5px;height:0.6px;background:#ececec;"></div>
<span class="t" id="t220" style="left:391.60px;top:360.00px;font-family:'Liberation Sans',sans-serif;font-size:6.3px;color:#2a2a2a;font-weight:400;transform:scaleX(0.9700);">304</span>
<span class="t" id="t221" style="left:403.80px;top:360.00px;font-family:'Liberation Sans',sans-serif;font-size:6.3px;color:#2a2a2a;font-weight:400;transform:scaleX(0.9319);">10.10.5.100</span>
<span class="t" id="t222" style="left:443.00px;top:360.00px;font-family:'Liberation Sans',sans-serif;font-size:6.3px;color:#2a2a2a;font-weight:400;transform:scaleX(0.8819);">2ms</span>
<span class="t" id="t223" style="left:480.40px;top:360.00px;font-family:'Liberation Sans',sans-serif;font-size:6.3px;color:#2a2a2a;font-weight:400;">64</span>
<span class="t" id="t224" style="left:498.70px;top:360.00px;font-family:'Liberation Sans',sans-serif;font-size:6.3px;color:#2a2a2a;font-weight:400;transform:scaleX(0.9693);">64</span>
<div class="a" style="left:376.5px;top:373.50000000000006px;width:150.5px;height:0.6px;background:#ececec;"></div>
<span class="t" id="t225" style="left:391.60px;top:367.00px;font-family:'Liberation Sans',sans-serif;font-size:6.3px;color:#2a2a2a;font-weight:400;transform:scaleX(0.9700);">305</span>
<span class="t" id="t226" style="left:403.80px;top:367.00px;font-family:'Liberation Sans',sans-serif;font-size:6.3px;color:#2a2a2a;font-weight:400;transform:scaleX(0.9319);">10.10.5.100</span>
<span class="t" id="t227" style="left:443.00px;top:367.00px;font-family:'Liberation Sans',sans-serif;font-size:6.3px;color:#2a2a2a;font-weight:400;transform:scaleX(0.8819);">4ms</span>
<span class="t" id="t228" style="left:480.40px;top:367.00px;font-family:'Liberation Sans',sans-serif;font-size:6.3px;color:#2a2a2a;font-weight:400;">64</span>
<span class="t" id="t229" style="left:498.70px;top:367.00px;font-family:'Liberation Sans',sans-serif;font-size:6.3px;color:#2a2a2a;font-weight:400;transform:scaleX(0.9693);">64</span>
<div class="a" style="left:376.5px;top:381.36000000000007px;width:150.5px;height:0.6px;background:#ececec;"></div>
<span class="t" id="t230" style="left:391.60px;top:375.00px;font-family:'Liberation Sans',sans-serif;font-size:6.3px;color:#2a2a2a;font-weight:400;transform:scaleX(0.9700);">306</span>
<span class="t" id="t231" style="left:403.80px;top:375.00px;font-family:'Liberation Sans',sans-serif;font-size:6.3px;color:#2a2a2a;font-weight:400;transform:scaleX(0.9319);">10.10.5.100</span>
<span class="t" id="t232" style="left:443.00px;top:375.00px;font-family:'Liberation Sans',sans-serif;font-size:6.3px;color:#2a2a2a;font-weight:400;transform:scaleX(0.8819);">1ms</span>
<span class="t" id="t233" style="left:480.40px;top:375.00px;font-family:'Liberation Sans',sans-serif;font-size:6.3px;color:#2a2a2a;font-weight:400;">64</span>
<span class="t" id="t234" style="left:498.70px;top:375.00px;font-family:'Liberation Sans',sans-serif;font-size:6.3px;color:#2a2a2a;font-weight:400;transform:scaleX(0.9693);">64</span>
<div class="a" style="left:376.5px;top:389.22px;width:150.5px;height:0.6px;background:#ececec;"></div>
<span class="t" id="t235" style="left:391.60px;top:383.00px;font-family:'Liberation Sans',sans-serif;font-size:6.3px;color:#2a2a2a;font-weight:400;transform:scaleX(0.9700);">307</span>
<span class="t" id="t236" style="left:403.80px;top:383.00px;font-family:'Liberation Sans',sans-serif;font-size:6.3px;color:#2a2a2a;font-weight:400;transform:scaleX(0.9319);">10.10.5.100</span>
<span class="t" id="t237" style="left:443.00px;top:383.00px;font-family:'Liberation Sans',sans-serif;font-size:6.3px;color:#2a2a2a;font-weight:400;transform:scaleX(0.8819);">1ms</span>
<span class="t" id="t238" style="left:480.40px;top:383.00px;font-family:'Liberation Sans',sans-serif;font-size:6.3px;color:#2a2a2a;font-weight:400;">64</span>
<span class="t" id="t239" style="left:498.70px;top:383.00px;font-family:'Liberation Sans',sans-serif;font-size:6.3px;color:#2a2a2a;font-weight:400;transform:scaleX(0.9693);">64</span>
<div class="a" style="left:376.5px;top:397.08000000000004px;width:150.5px;height:0.6px;background:#ececec;"></div>
<span class="t" id="t240" style="left:391.60px;top:391.00px;font-family:'Liberation Sans',sans-serif;font-size:6.3px;color:#2a2a2a;font-weight:400;transform:scaleX(0.9700);">308</span>
<span class="t" id="t241" style="left:403.80px;top:391.00px;font-family:'Liberation Sans',sans-serif;font-size:6.3px;color:#2a2a2a;font-weight:400;transform:scaleX(0.9319);">10.10.5.100</span>
<span class="t" id="t242" style="left:443.00px;top:391.00px;font-family:'Liberation Sans',sans-serif;font-size:6.3px;color:#2a2a2a;font-weight:400;transform:scaleX(0.8819);">6ms</span>
<span class="t" id="t243" style="left:480.40px;top:391.00px;font-family:'Liberation Sans',sans-serif;font-size:6.3px;color:#2a2a2a;font-weight:400;">64</span>
<span class="t" id="t244" style="left:498.70px;top:391.00px;font-family:'Liberation Sans',sans-serif;font-size:6.3px;color:#2a2a2a;font-weight:400;transform:scaleX(0.9693);">64</span>
<div class="a" style="left:376.5px;top:404.94000000000005px;width:150.5px;height:0.6px;background:#ececec;"></div>
<span class="t" id="t245" style="left:391.60px;top:399.00px;font-family:'Liberation Sans',sans-serif;font-size:6.3px;color:#2a2a2a;font-weight:400;transform:scaleX(0.9700);">309</span>
<span class="t" id="t246" style="left:403.80px;top:399.00px;font-family:'Liberation Sans',sans-serif;font-size:6.3px;color:#2a2a2a;font-weight:400;transform:scaleX(0.9319);">10.10.5.100</span>
<span class="t" id="t247" style="left:443.00px;top:399.00px;font-family:'Liberation Sans',sans-serif;font-size:6.3px;color:#2a2a2a;font-weight:400;transform:scaleX(0.8819);">4ms</span>
<span class="t" id="t248" style="left:480.40px;top:399.00px;font-family:'Liberation Sans',sans-serif;font-size:6.3px;color:#2a2a2a;font-weight:400;">64</span>
<span class="t" id="t249" style="left:498.70px;top:399.00px;font-family:'Liberation Sans',sans-serif;font-size:6.3px;color:#2a2a2a;font-weight:400;transform:scaleX(0.9693);">64</span>
<div class="a" style="left:376.5px;top:412.80000000000007px;width:150.5px;height:0.6px;background:#ececec;"></div>
<span class="t" id="t250" style="left:391.60px;top:407.00px;font-family:'Liberation Sans',sans-serif;font-size:6.3px;color:#2a2a2a;font-weight:400;transform:scaleX(0.9700);">310</span>
<span class="t" id="t251" style="left:403.80px;top:407.00px;font-family:'Liberation Sans',sans-serif;font-size:6.3px;color:#2a2a2a;font-weight:400;transform:scaleX(0.9319);">10.10.5.100</span>
<span class="t" id="t252" style="left:443.00px;top:407.00px;font-family:'Liberation Sans',sans-serif;font-size:6.3px;color:#2a2a2a;font-weight:400;transform:scaleX(0.8819);">3ms</span>
<span class="t" id="t253" style="left:480.40px;top:407.00px;font-family:'Liberation Sans',sans-serif;font-size:6.3px;color:#2a2a2a;font-weight:400;">64</span>
<span class="t" id="t254" style="left:498.70px;top:407.00px;font-family:'Liberation Sans',sans-serif;font-size:6.3px;color:#2a2a2a;font-weight:400;transform:scaleX(0.9693);">64</span>
<div class="a" style="left:376.5px;top:420.6600000000001px;width:150.5px;height:0.6px;background:#ececec;"></div>
<span class="t" id="t255" style="left:391.60px;top:415.00px;font-family:'Liberation Sans',sans-serif;font-size:6.3px;color:#2a2a2a;font-weight:400;transform:scaleX(1.0152);">311</span>
<span class="t" id="t256" style="left:403.80px;top:415.00px;font-family:'Liberation Sans',sans-serif;font-size:6.3px;color:#2a2a2a;font-weight:400;transform:scaleX(0.9319);">10.10.5.100</span>
<span class="t" id="t257" style="left:443.00px;top:415.00px;font-family:'Liberation Sans',sans-serif;font-size:6.3px;color:#2a2a2a;font-weight:400;transform:scaleX(0.8819);">3ms</span>
<span class="t" id="t258" style="left:480.40px;top:415.00px;font-family:'Liberation Sans',sans-serif;font-size:6.3px;color:#2a2a2a;font-weight:400;">64</span>
<span class="t" id="t259" style="left:498.70px;top:415.00px;font-family:'Liberation Sans',sans-serif;font-size:6.3px;color:#2a2a2a;font-weight:400;transform:scaleX(0.9693);">64</span>
<div class="a" style="left:376.5px;top:428.52000000000004px;width:150.5px;height:0.6px;background:#ececec;"></div>
<span class="t" id="t260" style="left:391.60px;top:422.00px;font-family:'Liberation Sans',sans-serif;font-size:6.3px;color:#2a2a2a;font-weight:400;transform:scaleX(0.9700);">312</span>
<span class="t" id="t261" style="left:403.80px;top:422.00px;font-family:'Liberation Sans',sans-serif;font-size:6.3px;color:#2a2a2a;font-weight:400;transform:scaleX(0.9319);">10.10.5.100</span>
<span class="t" id="t262" style="left:443.00px;top:422.00px;font-family:'Liberation Sans',sans-serif;font-size:6.3px;color:#2a2a2a;font-weight:400;transform:scaleX(0.8819);">1ms</span>
<span class="t" id="t263" style="left:480.40px;top:422.00px;font-family:'Liberation Sans',sans-serif;font-size:6.3px;color:#2a2a2a;font-weight:400;">64</span>
<span class="t" id="t264" style="left:498.70px;top:422.00px;font-family:'Liberation Sans',sans-serif;font-size:6.3px;color:#2a2a2a;font-weight:400;transform:scaleX(0.9693);">64</span>
<div class="a" style="left:376.5px;top:436.38000000000005px;width:150.5px;height:0.6px;background:#ececec;"></div>
<span class="t" id="t265" style="left:391.60px;top:430.00px;font-family:'Liberation Sans',sans-serif;font-size:6.3px;color:#2a2a2a;font-weight:400;transform:scaleX(0.9700);">313</span>
<span class="t" id="t266" style="left:403.80px;top:430.00px;font-family:'Liberation Sans',sans-serif;font-size:6.3px;color:#2a2a2a;font-weight:400;transform:scaleX(0.9319);">10.10.5.100</span>
<span class="t" id="t267" style="left:443.00px;top:430.00px;font-family:'Liberation Sans',sans-serif;font-size:6.3px;color:#2a2a2a;font-weight:400;transform:scaleX(0.8819);">1ms</span>
<span class="t" id="t268" style="left:480.40px;top:430.00px;font-family:'Liberation Sans',sans-serif;font-size:6.3px;color:#2a2a2a;font-weight:400;">64</span>
<span class="t" id="t269" style="left:498.70px;top:430.00px;font-family:'Liberation Sans',sans-serif;font-size:6.3px;color:#2a2a2a;font-weight:400;transform:scaleX(0.9693);">64</span>
<div class="a" style="left:376.5px;top:444.24000000000007px;width:150.5px;height:0.6px;background:#ececec;"></div>
<span class="t" id="t270" style="left:391.60px;top:438.00px;font-family:'Liberation Sans',sans-serif;font-size:6.3px;color:#2a2a2a;font-weight:400;transform:scaleX(0.9700);">314</span>
<span class="t" id="t271" style="left:403.80px;top:438.00px;font-family:'Liberation Sans',sans-serif;font-size:6.3px;color:#2a2a2a;font-weight:400;transform:scaleX(0.9319);">10.10.5.100</span>
<span class="t" id="t272" style="left:443.00px;top:438.00px;font-family:'Liberation Sans',sans-serif;font-size:6.3px;color:#2a2a2a;font-weight:400;transform:scaleX(0.8819);">6ms</span>
<span class="t" id="t273" style="left:480.40px;top:438.00px;font-family:'Liberation Sans',sans-serif;font-size:6.3px;color:#2a2a2a;font-weight:400;">64</span>
<span class="t" id="t274" style="left:498.70px;top:438.00px;font-family:'Liberation Sans',sans-serif;font-size:6.3px;color:#2a2a2a;font-weight:400;transform:scaleX(0.9693);">64</span>
<div class="a" style="left:376.5px;top:452.1px;width:150.5px;height:0.6px;background:#ececec;"></div>
<span class="t" id="t275" style="left:391.60px;top:446.00px;font-family:'Liberation Sans',sans-serif;font-size:6.3px;color:#2a2a2a;font-weight:400;transform:scaleX(0.9700);">315</span>
<span class="t" id="t276" style="left:403.80px;top:446.00px;font-family:'Liberation Sans',sans-serif;font-size:6.3px;color:#2a2a2a;font-weight:400;transform:scaleX(0.9319);">10.10.5.100</span>
<span class="t" id="t277" style="left:443.00px;top:446.00px;font-family:'Liberation Sans',sans-serif;font-size:6.3px;color:#2a2a2a;font-weight:400;transform:scaleX(0.8819);">2ms</span>
<span class="t" id="t278" style="left:480.40px;top:446.00px;font-family:'Liberation Sans',sans-serif;font-size:6.3px;color:#2a2a2a;font-weight:400;">64</span>
<span class="t" id="t279" style="left:498.70px;top:446.00px;font-family:'Liberation Sans',sans-serif;font-size:6.3px;color:#2a2a2a;font-weight:400;transform:scaleX(0.9693);">64</span>
<div class="a" style="left:376.5px;top:459.96000000000004px;width:150.5px;height:0.6px;background:#ececec;"></div>
<span class="t" id="t280" style="left:391.60px;top:454.00px;font-family:'Liberation Sans',sans-serif;font-size:6.3px;color:#2a2a2a;font-weight:400;transform:scaleX(0.9700);">316</span>
<span class="t" id="t281" style="left:403.80px;top:454.00px;font-family:'Liberation Sans',sans-serif;font-size:6.3px;color:#2a2a2a;font-weight:400;transform:scaleX(0.9319);">10.10.5.100</span>
<span class="t" id="t282" style="left:443.00px;top:454.00px;font-family:'Liberation Sans',sans-serif;font-size:6.3px;color:#2a2a2a;font-weight:400;transform:scaleX(0.8819);">6ms</span>
<span class="t" id="t283" style="left:480.40px;top:454.00px;font-family:'Liberation Sans',sans-serif;font-size:6.3px;color:#2a2a2a;font-weight:400;">64</span>
<span class="t" id="t284" style="left:498.70px;top:454.00px;font-family:'Liberation Sans',sans-serif;font-size:6.3px;color:#2a2a2a;font-weight:400;transform:scaleX(0.9693);">64</span>
<div class="a" style="left:376.5px;top:467.82000000000005px;width:150.5px;height:0.6px;background:#ececec;"></div>
<span class="t" id="t285" style="left:391.60px;top:462.00px;font-family:'Liberation Sans',sans-serif;font-size:6.3px;color:#2a2a2a;font-weight:400;transform:scaleX(0.9700);">317</span>
<span class="t" id="t286" style="left:403.80px;top:462.00px;font-family:'Liberation Sans',sans-serif;font-size:6.3px;color:#2a2a2a;font-weight:400;transform:scaleX(0.9319);">10.10.5.100</span>
<span class="t" id="t287" style="left:443.00px;top:462.00px;font-family:'Liberation Sans',sans-serif;font-size:6.3px;color:#2a2a2a;font-weight:400;transform:scaleX(0.8819);">2ms</span>
<span class="t" id="t288" style="left:480.40px;top:462.00px;font-family:'Liberation Sans',sans-serif;font-size:6.3px;color:#2a2a2a;font-weight:400;">64</span>
<span class="t" id="t289" style="left:498.70px;top:462.00px;font-family:'Liberation Sans',sans-serif;font-size:6.3px;color:#2a2a2a;font-weight:400;transform:scaleX(0.9693);">64</span>
<div class="a" style="left:376.5px;top:475.68000000000006px;width:150.5px;height:0.6px;background:#ececec;"></div>
<span class="t" id="t290" style="left:391.60px;top:470.00px;font-family:'Liberation Sans',sans-serif;font-size:6.3px;color:#2a2a2a;font-weight:400;transform:scaleX(0.9700);">318</span>
<span class="t" id="t291" style="left:403.80px;top:470.00px;font-family:'Liberation Sans',sans-serif;font-size:6.3px;color:#2a2a2a;font-weight:400;transform:scaleX(0.9319);">10.10.5.100</span>
<span class="t" id="t292" style="left:443.00px;top:470.00px;font-family:'Liberation Sans',sans-serif;font-size:6.3px;color:#2a2a2a;font-weight:400;transform:scaleX(0.8819);">3ms</span>
<span class="t" id="t293" style="left:480.40px;top:470.00px;font-family:'Liberation Sans',sans-serif;font-size:6.3px;color:#2a2a2a;font-weight:400;">64</span>
<span class="t" id="t294" style="left:498.70px;top:470.00px;font-family:'Liberation Sans',sans-serif;font-size:6.3px;color:#2a2a2a;font-weight:400;transform:scaleX(0.9693);">64</span>
<div class="a" style="left:376.5px;top:483.5400000000001px;width:150.5px;height:0.6px;background:#ececec;"></div>
<span class="t" id="t295" style="left:391.60px;top:477.00px;font-family:'Liberation Sans',sans-serif;font-size:6.3px;color:#2a2a2a;font-weight:400;transform:scaleX(0.9700);">319</span>
<span class="t" id="t296" style="left:403.80px;top:477.00px;font-family:'Liberation Sans',sans-serif;font-size:6.3px;color:#2a2a2a;font-weight:400;transform:scaleX(0.9319);">10.10.5.100</span>
<span class="t" id="t297" style="left:443.00px;top:477.00px;font-family:'Liberation Sans',sans-serif;font-size:6.3px;color:#2a2a2a;font-weight:400;transform:scaleX(0.8819);">5ms</span>
<span class="t" id="t298" style="left:480.40px;top:477.00px;font-family:'Liberation Sans',sans-serif;font-size:6.3px;color:#2a2a2a;font-weight:400;">64</span>
<span class="t" id="t299" style="left:498.70px;top:477.00px;font-family:'Liberation Sans',sans-serif;font-size:6.3px;color:#2a2a2a;font-weight:400;transform:scaleX(0.9693);">64</span>
<div class="a" style="left:373.8px;top:487.3px;width:355.4px;height:12.7px;background:#878582;"></div>
<div class="a" style="left:376px;top:488px;width:26.4px;height:12px;background:#d8d4ce;border:0.7px solid #b8b4ae;border-right-color:#eeebe6;border-bottom:none;"></div>
<span class="t" id="t300" style="left:378.00px;top:492.00px;font-family:'Liberation Sans',sans-serif;font-size:6.3px;color:#2a2a2a;font-weight:400;transform:scaleX(0.9728);">320 ite...</span>
<div class="a" style="left:403px;top:488px;width:52.4px;height:12px;background:#d8d4ce;border:0.7px solid #b8b4ae;border-right-color:#eeebe6;border-bottom:none;"></div>
<span class="t" id="t301" style="left:405.00px;top:492.00px;font-family:'Liberation Sans',sans-serif;font-size:6.3px;color:#2a2a2a;font-weight:400;transform:scaleX(0.8772);">320 of 320 packe...</span>
<div class="a" style="left:456px;top:488px;width:47.9px;height:12px;background:#d8d4ce;border:0.7px solid #b8b4ae;border-right-color:#eeebe6;border-bottom:none;"></div>
<span class="t" id="t302" style="left:458.00px;top:492.00px;font-family:'Liberation Sans',sans-serif;font-size:6.3px;color:#2a2a2a;font-weight:400;transform:scaleX(1.0033);">0% packet loss</span>
<div class="a" style="left:505.5px;top:488px;width:31.9px;height:12px;background:#d8d4ce;border:0.7px solid #b8b4ae;border-right-color:#eeebe6;border-bottom:none;"></div>
<span class="t" id="t303" style="left:507.50px;top:492.00px;font-family:'Liberation Sans',sans-serif;font-size:6.3px;color:#2a2a2a;font-weight:400;transform:scaleX(0.9342);">Min: 0 ms</span>
<div class="a" style="left:538px;top:488px;width:32.9px;height:12px;background:#d8d4ce;border:0.7px solid #b8b4ae;border-right-color:#eeebe6;border-bottom:none;"></div>
<span class="t" id="t304" style="left:540.00px;top:492.00px;font-family:'Liberation Sans',sans-serif;font-size:6.3px;color:#2a2a2a;font-weight:400;transform:scaleX(0.8964);">Avg: 2 ms</span>
<div class="a" style="left:571.5px;top:488px;width:36.9px;height:12px;background:#d8d4ce;border:0.7px solid #b8b4ae;border-right-color:#eeebe6;border-bottom:none;"></div>
<span class="t" id="t305" style="left:573.50px;top:492.00px;font-family:'Liberation Sans',sans-serif;font-size:6.3px;color:#2a2a2a;font-weight:400;transform:scaleX(0.8951);">Max: 9 ms</span>
<div class="a" style="left:527.2px;top:303.6px;width:202px;height:183.2px;background:#d5d1cb;border-left:1px solid #6c6a66;"></div>
<div class="a" style="left:527.2px;top:303.8px;width:202px;height:11px;background:#4a4ccf;"></div>
<span class="t" id="t306" style="left:530.00px;top:307.00px;font-family:'Liberation Sans',sans-serif;font-size:6.6px;color:#fff;font-weight:400;transform:scaleX(1.0066);">Interface List</span>
<div class="a" style="left:710px;top:306.3px;width:6px;height:7px;background:#dedbd6;border:0.7px solid #8d8a85;"></div>
<div class="a" style="left:711.4px;top:307.9px;width:3.2px;height:3.6px;background:#fff;border-top:1.1px solid #333;"></div>
<div class="a" style="left:719.4px;top:306.3px;width:6px;height:7px;background:#dedbd6;border:0.7px solid #8d8a85;"></div>
<svg class="a" style="left:719.4px;top:306.3px" width="6" height="7"><path d="M1.4 1.8 L4.6 5.2 M4.6 1.8 L1.4 5.2" stroke="#222" stroke-width="1.1"/></svg>
<div class="a" style="left:531px;top:317.2px;width:38px;height:10.5px;background:#cbc7c0;border-right:0.7px solid #dcd9d4;"></div>
<span class="t" id="t307" style="left:533.00px;top:320.00px;font-family:'Liberation Sans',sans-serif;font-size:6.3px;color:#2a2a2a;font-weight:400;transform:scaleX(1.0260);">Interface List</span>
<div class="a" style="left:569px;top:315.8px;width:30px;height:12px;background:#e2dfda;border:0.7px solid #c6c2bc;border-bottom:none;"></div>
<span class="t" id="t308" style="left:571.50px;top:319.00px;font-family:'Liberation Sans',sans-serif;font-size:6.3px;color:#2a2a2a;font-weight:400;transform:scaleX(1.0499);">Ethernet</span>
<div class="a" style="left:599px;top:317.2px;width:37px;height:10.5px;background:#cbc7c0;border-right:0.7px solid #dcd9d4;"></div>
<span class="t" id="t309" style="left:601.00px;top:320.00px;font-family:'Liberation Sans',sans-serif;font-size:6.3px;color:#2a2a2a;font-weight:400;transform:scaleX(0.9648);">EoIP Tunnel</span>
<div class="a" style="left:636px;top:317.2px;width:29px;height:10.5px;background:#cbc7c0;border-right:0.7px solid #dcd9d4;"></div>
<span class="t" id="t310" style="left:638.00px;top:320.00px;font-family:'Liberation Sans',sans-serif;font-size:6.3px;color:#2a2a2a;font-weight:400;transform:scaleX(0.9811);">IP Tunnel</span>
<div class="a" style="left:665px;top:317.2px;width:38px;height:10.5px;background:#cbc7c0;border-right:0.7px solid #dcd9d4;"></div>
<span class="t" id="t311" style="left:667.00px;top:320.00px;font-family:'Liberation Sans',sans-serif;font-size:6.3px;color:#2a2a2a;font-weight:400;transform:scaleX(0.9617);">GRE Tunnel</span>
<div class="a" style="left:703px;top:317.2px;width:10px;height:10.5px;background:#cbc7c0;border-right:0.7px solid #dcd9d4;"></div>
<span class="t" id="t312" style="left:705.00px;top:320.00px;font-family:'Liberation Sans',sans-serif;font-size:6.3px;color:#777;font-weight:400;transform:scaleX(0.9524);">...</span>
<div class="a" style="left:528.2px;top:327.6px;width:200px;height:157.5px;background:#dcd9d3;border:0.7px solid #eeebe6;"></div>
<div class="a" style="left:529.5px;top:329.5px;width:11.5px;height:11.5px;background:#dcd8d2;border:0.7px solid #aaa6a0;"></div>
<div class="a" style="left:543px;top:329.5px;width:11.5px;height:11.5px;background:#dcd8d2;border:0.7px solid #aaa6a0;"></div>
<div class="a" style="left:560px;top:329.5px;width:12px;height:11.5px;background:#dcd8d2;border:0.7px solid #aaa6a0;"></div>
<div class="a" style="left:577px;top:329.5px;width:12px;height:11.5px;background:#dcd8d2;border:0.7px solid #aaa6a0;"></div>
<div class="a" style="left:594px;top:329.5px;width:42.5px;height:11.5px;background:#dcd8d2;border:0.7px solid #aaa6a0;"></div>
<svg class="a" style="left:531px;top:331px" width="9" height="9"><path d="M1.2 4.6 L3.4 7 L7.8 1.8" fill="none" stroke="#1a2fd0" stroke-width="1.6"/></svg>
<svg class="a" style="left:544.5px;top:331px" width="9" height="9"><path d="M1.8 1.8 L7 7 M7 1.8 L1.8 7" stroke="#e01010" stroke-width="1.6"/></svg>
<svg class="a" style="left:561.5px;top:331.5px" width="9" height="8"><path d="M1 2.5 L3 1 L8 1 L8 7 L1 7 Z" fill="#f4e020" stroke="#7a7010" stroke-width="0.6"/></svg>
<svg class="a" style="left:578.5px;top:331px" width="9" height="9"><path d="M1 1 L8 1 L5.2 4.2 L5.2 8 L3.8 8 L3.8 4.2 Z" fill="#8ea8c8" stroke="#445a80" stroke-width="0.6"/></svg>
<span class="t" id="t313" style="left:598.20px;top:333.00px;font-family:'Liberation Sans',sans-serif;font-size:6.3px;color:#2a2a2a;font-weight:400;transform:scaleX(0.9620);">Power Cycle</span>
<div class="a" style="left:697px;top:333px;width:28.5px;height:8.6px;background:#fff;border:0.7px solid #c4c0ba;"></div>
<span class="t" id="t314" style="left:700.00px;top:335.00px;font-family:'Liberation Sans',sans-serif;font-size:6.3px;color:#a8a8a8;font-weight:400;transform:scaleX(0.8980);font-style:italic;">Find</span>
<div class="a" style="left:529.6px;top:343.6px;width:195.8px;height:121.6px;background:#fff;border:0.7px solid #a9a59f;"></div>
<div class="a" style="left:530px;top:344px;width:195px;height:9px;background:#d6d2cc;"></div>
<div class="a" style="left:538.4px;top:344.4px;width:0.7px;height:8.2px;background:#b6b2ac;"></div>
<div class="a" style="left:568.9px;top:344.4px;width:0.7px;height:8.2px;background:#b6b2ac;"></div>
<span class="t" id="t315" style="left:540.80px;top:346.00px;font-family:'Liberation Sans',sans-serif;font-size:6.3px;color:#2a2a2a;font-weight:400;transform:scaleX(0.8335);">Name</span>
<div class="a" style="left:599.4px;top:344.4px;width:0.7px;height:8.2px;background:#b6b2ac;"></div>
<span class="t" id="t316" style="left:571.30px;top:346.00px;font-family:'Liberation Sans',sans-serif;font-size:6.3px;color:#2a2a2a;font-weight:400;transform:scaleX(0.9519);">Type</span>
<div class="a" style="left:617.4px;top:344.4px;width:0.7px;height:8.2px;background:#b6b2ac;"></div>
<span class="t" id="t317" style="left:601.80px;top:346.00px;font-family:'Liberation Sans',sans-serif;font-size:6.3px;color:#2a2a2a;font-weight:400;transform:scaleX(0.8064);">MTU</span>
<div class="a" style="left:635.4px;top:344.4px;width:0.7px;height:8.2px;background:#b6b2ac;"></div>
<span class="t" id="t318" style="left:619.80px;top:346.00px;font-family:'Liberation Sans',sans-serif;font-size:6.3px;color:#2a2a2a;font-weight:400;transform:scaleX(0.9750);">Act...</span>
<div class="a" style="left:652.4px;top:344.4px;width:0.7px;height:8.2px;background:#b6b2ac;"></div>
<span class="t" id="t319" style="left:637.80px;top:346.00px;font-family:'Liberation Sans',sans-serif;font-size:6.3px;color:#2a2a2a;font-weight:400;transform:scaleX(0.9376);">L2...</span>
<div class="a" style="left:687.4px;top:344.4px;width:0.7px;height:8.2px;background:#b6b2ac;"></div>
<span class="t" id="t320" style="left:654.80px;top:346.00px;font-family:'Liberation Sans',sans-serif;font-size:6.3px;color:#2a2a2a;font-weight:400;transform:scaleX(0.9286);">Tx</span>
<div class="a" style="left:718.4px;top:344.4px;width:0.7px;height:8.2px;background:#b6b2ac;"></div>
<span class="t" id="t321" style="left:689.80px;top:346.00px;font-family:'Liberation Sans',sans-serif;font-size:6.3px;color:#2a2a2a;font-weight:400;transform:scaleX(0.7789);">Rx</span>
<svg class="a" style="left:720px;top:346px" width="5" height="5"><path d="M0.3 0.8 L4.7 0.8 L2.5 4 Z" fill="#111"/></svg>
<svg class="a" style="left:564px;top:346.3px" width="4" height="4"><path d="M0.3 3.5 L3.5 0.5" stroke="#777" stroke-width="0.6"/></svg>
<div class="a" style="left:538.4px;top:353px;width:0.6px;height:47px;background:#efefef;"></div>
<div class="a" style="left:568.9px;top:353px;width:0.6px;height:47px;background:#efefef;"></div>
<div class="a" style="left:599.4px;top:353px;width:0.6px;height:47px;background:#efefef;"></div>
<div class="a" style="left:617.4px;top:353px;width:0.6px;height:47px;background:#efefef;"></div>
<div class="a" style="left:635.4px;top:353px;width:0.6px;height:47px;background:#efefef;"></div>
<div class="a" style="left:652.4px;top:353px;width:0.6px;height:47px;background:#efefef;"></div>
<div class="a" style="left:687.4px;top:353px;width:0.6px;height:47px;background:#efefef;"></div>
<div class="a" style="left:718.4px;top:353px;width:0.6px;height:47px;background:#efefef;"></div>
<div class="a" style="left:530px;top:360.0px;width:195px;height:0.6px;background:#ebebeb;"></div>
<span class="t" id="t322" style="left:531.30px;top:353.00px;font-family:'Liberation Sans',sans-serif;font-size:6.0px;color:#666;font-weight:400;transform:scaleX(0.9209);">R</span>
<svg class="a" style="left:540.6px;top:352.79999999999995px" width="8" height="7.5"><path d="M0.3 3.7 L2.8 1.4 L2.8 6 Z M7.7 3.7 L5.2 1.4 L5.2 6 Z" fill="#c41818"/><rect x="3.3" y="0.4" width="1.4" height="6.8" fill="#6a6a6a"/></svg>
<span class="t" id="t323" style="left:548.80px;top:354.00px;font-family:'Liberation Sans',sans-serif;font-size:6.3px;color:#2a2a2a;font-weight:400;transform:scaleX(1.0751);">ether1</span>
<span class="t" id="t324" style="left:571.00px;top:354.00px;font-family:'Liberation Sans',sans-serif;font-size:6.3px;color:#2a2a2a;font-weight:400;transform:scaleX(1.0289);">Ethernet</span>
<span class="t" id="t325" style="left:604.10px;top:354.00px;font-family:'Liberation Sans',sans-serif;font-size:6.3px;color:#2a2a2a;font-weight:400;transform:scaleX(0.9775);">1500</span>
<span class="t" id="t326" style="left:622.70px;top:354.00px;font-family:'Liberation Sans',sans-serif;font-size:6.3px;color:#2a2a2a;font-weight:400;transform:scaleX(0.9775);">1500</span>
<span class="t" id="t327" style="left:640.00px;top:354.00px;font-family:'Liberation Sans',sans-serif;font-size:6.3px;color:#2a2a2a;font-weight:400;transform:scaleX(0.9918);">1598</span>
<span class="t" id="t328" style="left:657.50px;top:354.00px;font-family:'Liberation Sans',sans-serif;font-size:6.3px;color:#2a2a2a;font-weight:400;transform:scaleX(0.9269);">285.5 Mbps</span>
<span class="t" id="t329" style="left:695.00px;top:354.00px;font-family:'Liberation Sans',sans-serif;font-size:6.3px;color:#2a2a2a;font-weight:400;transform:scaleX(0.9843);">6.4 Mbps</span>
<div class="a" style="left:530px;top:360.4px;width:195px;height:7.9px;background:#a9c9ef;"></div>
<div class="a" style="left:530px;top:367.9px;width:195px;height:0.6px;background:#ebebeb;"></div>
<span class="t" id="t330" style="left:531.30px;top:361.00px;font-family:'Liberation Sans',sans-serif;font-size:6.0px;color:#666;font-weight:400;transform:scaleX(0.9209);">R</span>
<svg class="a" style="left:540.6px;top:360.69999999999993px" width="8" height="7.5"><path d="M0.3 3.7 L2.8 1.4 L2.8 6 Z M7.7 3.7 L5.2 1.4 L5.2 6 Z" fill="#c41818"/><rect x="3.3" y="0.4" width="1.4" height="6.8" fill="#6a6a6a"/></svg>
<span class="t" id="t331" style="left:548.80px;top:362.00px;font-family:'Liberation Sans',sans-serif;font-size:6.3px;color:#2a2a2a;font-weight:400;transform:scaleX(1.0751);">ether2</span>
<span class="t" id="t332" style="left:571.00px;top:362.00px;font-family:'Liberation Sans',sans-serif;font-size:6.3px;color:#2a2a2a;font-weight:400;transform:scaleX(1.0289);">Ethernet</span>
<span class="t" id="t333" style="left:604.10px;top:362.00px;font-family:'Liberation Sans',sans-serif;font-size:6.3px;color:#2a2a2a;font-weight:400;transform:scaleX(0.9775);">1500</span>
<span class="t" id="t334" style="left:622.70px;top:362.00px;font-family:'Liberation Sans',sans-serif;font-size:6.3px;color:#2a2a2a;font-weight:400;transform:scaleX(0.9775);">1500</span>
<span class="t" id="t335" style="left:640.00px;top:362.00px;font-family:'Liberation Sans',sans-serif;font-size:6.3px;color:#2a2a2a;font-weight:400;transform:scaleX(0.9918);">1598</span>
<span class="t" id="t336" style="left:660.60px;top:362.00px;font-family:'Liberation Sans',sans-serif;font-size:6.3px;color:#2a2a2a;font-weight:400;transform:scaleX(0.9318);">32.5 Mbps</span>
<span class="t" id="t337" style="left:690.00px;top:362.00px;font-family:'Liberation Sans',sans-serif;font-size:6.3px;color:#2a2a2a;font-weight:400;transform:scaleX(0.9269);">282.3 Mbps</span>
<div class="a" style="left:530px;top:375.8px;width:195px;height:0.6px;background:#ebebeb;"></div>
<svg class="a" style="left:540.6px;top:368.59999999999997px" width="8" height="7.5"><path d="M0.3 3.7 L2.8 1.4 L2.8 6 Z M7.7 3.7 L5.2 1.4 L5.2 6 Z" fill="#c41818"/><rect x="3.3" y="0.4" width="1.4" height="6.8" fill="#6a6a6a"/></svg>
<span class="t" id="t338" style="left:548.80px;top:370.00px;font-family:'Liberation Sans',sans-serif;font-size:6.3px;color:#2a2a2a;font-weight:400;transform:scaleX(1.0751);">ether3</span>
<span class="t" id="t339" style="left:571.00px;top:370.00px;font-family:'Liberation Sans',sans-serif;font-size:6.3px;color:#2a2a2a;font-weight:400;transform:scaleX(1.0289);">Ethernet</span>
<span class="t" id="t340" style="left:604.10px;top:370.00px;font-family:'Liberation Sans',sans-serif;font-size:6.3px;color:#2a2a2a;font-weight:400;transform:scaleX(0.9775);">1500</span>
<span class="t" id="t341" style="left:622.70px;top:370.00px;font-family:'Liberation Sans',sans-serif;font-size:6.3px;color:#2a2a2a;font-weight:400;transform:scaleX(0.9775);">1500</span>
<span class="t" id="t342" style="left:640.00px;top:370.00px;font-family:'Liberation Sans',sans-serif;font-size:6.3px;color:#2a2a2a;font-weight:400;transform:scaleX(0.9918);">1598</span>
<span class="t" id="t343" style="left:673.00px;top:370.00px;font-family:'Liberation Sans',sans-serif;font-size:6.3px;color:#2a2a2a;font-weight:400;transform:scaleX(0.9736);">0 bps</span>
<span class="t" id="t344" style="left:705.50px;top:370.00px;font-family:'Liberation Sans',sans-serif;font-size:6.3px;color:#2a2a2a;font-weight:400;transform:scaleX(0.9736);">0 bps</span>
<div class="a" style="left:530px;top:383.7px;width:195px;height:0.6px;background:#ebebeb;"></div>
<svg class="a" style="left:540.6px;top:376.49999999999994px" width="8" height="7.5"><path d="M0.3 3.7 L2.8 1.4 L2.8 6 Z M7.7 3.7 L5.2 1.4 L5.2 6 Z" fill="#c41818"/><rect x="3.3" y="0.4" width="1.4" height="6.8" fill="#6a6a6a"/></svg>
<span class="t" id="t345" style="left:548.80px;top:378.00px;font-family:'Liberation Sans',sans-serif;font-size:6.3px;color:#2a2a2a;font-weight:400;transform:scaleX(1.0751);">ether4</span>
<span class="t" id="t346" style="left:571.00px;top:378.00px;font-family:'Liberation Sans',sans-serif;font-size:6.3px;color:#2a2a2a;font-weight:400;transform:scaleX(1.0289);">Ethernet</span>
<span class="t" id="t347" style="left:604.10px;top:378.00px;font-family:'Liberation Sans',sans-serif;font-size:6.3px;color:#2a2a2a;font-weight:400;transform:scaleX(0.9775);">1500</span>
<span class="t" id="t348" style="left:622.70px;top:378.00px;font-family:'Liberation Sans',sans-serif;font-size:6.3px;color:#2a2a2a;font-weight:400;transform:scaleX(0.9775);">1500</span>
<span class="t" id="t349" style="left:640.00px;top:378.00px;font-family:'Liberation Sans',sans-serif;font-size:6.3px;color:#2a2a2a;font-weight:400;transform:scaleX(0.9918);">1598</span>
<span class="t" id="t350" style="left:673.00px;top:378.00px;font-family:'Liberation Sans',sans-serif;font-size:6.3px;color:#2a2a2a;font-weight:400;transform:scaleX(0.9736);">0 bps</span>
<span class="t" id="t351" style="left:705.50px;top:378.00px;font-family:'Liberation Sans',sans-serif;font-size:6.3px;color:#2a2a2a;font-weight:400;transform:scaleX(0.9736);">0 bps</span>
<div class="a" style="left:530px;top:391.6px;width:195px;height:0.6px;background:#ebebeb;"></div>
<span class="t" id="t352" style="left:531.30px;top:385.00px;font-family:'Liberation Sans',sans-serif;font-size:6.0px;color:#aaa;font-weight:400;transform:scaleX(0.9961);">X</span>
<svg class="a" style="left:540.6px;top:384.4px" width="8" height="7.5"><path d="M0.3 3.7 L2.8 1.4 L2.8 6 Z M7.7 3.7 L5.2 1.4 L5.2 6 Z" fill="#aaaaaa"/><rect x="3.3" y="0.4" width="1.4" height="6.8" fill="#b0b0b0"/></svg>
<span class="t" id="t353" style="left:548.80px;top:386.00px;font-family:'Liberation Sans',sans-serif;font-size:6.3px;color:#a8a8a8;font-weight:400;transform:scaleX(1.0751);">ether5</span>
<span class="t" id="t354" style="left:571.00px;top:386.00px;font-family:'Liberation Sans',sans-serif;font-size:6.3px;color:#a8a8a8;font-weight:400;transform:scaleX(1.0289);">Ethernet</span>
<span class="t" id="t355" style="left:604.10px;top:386.00px;font-family:'Liberation Sans',sans-serif;font-size:6.3px;color:#a8a8a8;font-weight:400;transform:scaleX(0.9775);">1500</span>
<span class="t" id="t356" style="left:622.70px;top:386.00px;font-family:'Liberation Sans',sans-serif;font-size:6.3px;color:#a8a8a8;font-weight:400;transform:scaleX(0.9775);">1500</span>
<span class="t" id="t357" style="left:640.00px;top:386.00px;font-family:'Liberation Sans',sans-serif;font-size:6.3px;color:#a8a8a8;font-weight:400;transform:scaleX(0.9918);">1598</span>
<span class="t" id="t358" style="left:673.00px;top:386.00px;font-family:'Liberation Sans',sans-serif;font-size:6.3px;color:#a8a8a8;font-weight:400;transform:scaleX(0.9736);">0 bps</span>
<span class="t" id="t359" style="left:705.50px;top:386.00px;font-family:'Liberation Sans',sans-serif;font-size:6.3px;color:#a8a8a8;font-weight:400;transform:scaleX(0.9736);">0 bps</span>
<div class="a" style="left:530px;top:399.5px;width:195px;height:0.6px;background:#ebebeb;"></div>
<span class="t" id="t360" style="left:531.30px;top:393.00px;font-family:'Liberation Sans',sans-serif;font-size:6.0px;color:#aaa;font-weight:400;transform:scaleX(0.9961);">X</span>
<svg class="a" style="left:540.6px;top:392.29999999999995px" width="8" height="7.5"><path d="M0.3 3.7 L2.8 1.4 L2.8 6 Z M7.7 3.7 L5.2 1.4 L5.2 6 Z" fill="#aaaaaa"/><rect x="3.3" y="0.4" width="1.4" height="6.8" fill="#b0b0b0"/></svg>
<span class="t" id="t361" style="left:548.80px;top:393.00px;font-family:'Liberation Sans',sans-serif;font-size:6.3px;color:#a8a8a8;font-weight:400;transform:scaleX(1.0751);">sfp1</span>
<span class="t" id="t362" style="left:571.00px;top:393.00px;font-family:'Liberation Sans',sans-serif;font-size:6.3px;color:#a8a8a8;font-weight:400;transform:scaleX(1.0289);">Ethernet</span>
<span class="t" id="t363" style="left:604.10px;top:393.00px;font-family:'Liberation Sans',sans-serif;font-size:6.3px;color:#a8a8a8;font-weight:400;transform:scaleX(0.9775);">1500</span>
<span class="t" id="t364" style="left:622.70px;top:393.00px;font-family:'Liberation Sans',sans-serif;font-size:6.3px;color:#a8a8a8;font-weight:400;transform:scaleX(0.9775);">1500</span>
<span class="t" id="t365" style="left:640.00px;top:393.00px;font-family:'Liberation Sans',sans-serif;font-size:6.3px;color:#a8a8a8;font-weight:400;transform:scaleX(0.9918);">1600</span>
<span class="t" id="t366" style="left:673.00px;top:393.00px;font-family:'Liberation Sans',sans-serif;font-size:6.3px;color:#a8a8a8;font-weight:400;transform:scaleX(0.9736);">0 bps</span>
<span class="t" id="t367" style="left:705.50px;top:393.00px;font-family:'Liberation Sans',sans-serif;font-size:6.3px;color:#a8a8a8;font-weight:400;transform:scaleX(0.9736);">0 bps</span>
<div class="a" style="left:530px;top:465.2px;width:195.2px;height:8.2px;background:#bdb9b3;"></div>
<div class="a" style="left:530.2px;top:465.4px;width:7.5px;height:7.8px;background:#e6e3de;"></div>
<svg class="a" style="left:531.5px;top:467.3px" width="4" height="4"><circle cx="2" cy="2" r="1.5" fill="#111"/></svg>
<div class="a" style="left:537.8px;top:465.6px;width:45px;height:7.4px;background:#d6d3ce;"></div>
<div class="a" style="left:717.6px;top:465.4px;width:7.5px;height:7.8px;background:#e6e3de;"></div>
<svg class="a" style="left:719.4px;top:467.3px" width="4" height="4"><circle cx="2" cy="2" r="1.5" fill="#111"/></svg>
<div class="a" style="left:528.2px;top:473.8px;width:201px;height:12.2px;background:#d8d4ce;border:0.7px solid #b8b4ae;border-right-color:#eeebe6;border-bottom-color:#eeebe6;"></div>
<span class="t" id="t368" style="left:530.50px;top:477.00px;font-family:'Liberation Sans',sans-serif;font-size:6.3px;color:#2a2a2a;font-weight:400;transform:scaleX(0.9736);">6 items (1 selected)</span>
<div class="a" style="left:527.2px;top:486.4px;width:202px;height:1px;background:#6c6a66;"></div>
<div class="a" style="left:728.4px;top:0px;width:3.4px;height:500px;background:#4a4845;"></div>
<div class="a" style="left:731.5px;top:0px;width:268.5px;height:500px;background:#32302c;"></div>
<div class="a" style="left:994.8px;top:0px;width:5.2px;height:500px;background:#383632;"></div>
<div class="a" style="left:731.5px;top:498px;width:268.5px;height:2px;background:#5a5854;"></div>
<span class="t" id="t369" style="left:731.50px;top:0.00px;font-family:'Liberation Mono',monospace;font-size:8.2px;color:#cfcdc8;font-weight:400;transform:scaleX(0.7490);">[ 20] 377.00-378.00 sec  1.62 MBytes  13.6 Mbits/sec    0   17.0 KBytes</span>
<span class="t" id="t370" style="left:731.50px;top:15.00px;font-family:'Liberation Mono',monospace;font-size:8.2px;color:#cfcdc8;font-weight:400;transform:scaleX(0.7490);">[ 22] 377.00-378.00 sec  1.62 MBytes  13.6 Mbits/sec    2   12.7 KBytes</span>
<span class="t" id="t371" style="left:731.50px;top:29.00px;font-family:'Liberation Mono',monospace;font-size:8.2px;color:#cfcdc8;font-weight:400;transform:scaleX(0.7490);">[ 24] 377.00-378.00 sec  1.62 MBytes  13.6 Mbits/sec    0   17.0 KBytes</span>
<span class="t" id="t372" style="left:731.50px;top:44.00px;font-family:'Liberation Mono',monospace;font-size:8.2px;color:#cfcdc8;font-weight:400;transform:scaleX(0.7490);">[ 26] 377.00-378.00 sec  1.62 MBytes  13.6 Mbits/sec    2   12.7 KBytes</span>
<span class="t" id="t373" style="left:731.50px;top:59.00px;font-family:'Liberation Mono',monospace;font-size:8.2px;color:#cfcdc8;font-weight:400;transform:scaleX(0.7490);">[ 28] 377.00-378.00 sec  1.55 MBytes  13.0 Mbits/sec    2   14.1 KBytes</span>
<span class="t" id="t374" style="left:731.50px;top:73.00px;font-family:'Liberation Mono',monospace;font-size:8.2px;color:#cfcdc8;font-weight:400;transform:scaleX(0.7490);">[ 30] 377.00-378.00 sec  1.62 MBytes  13.6 Mbits/sec    1   12.7 KBytes</span>
<span class="t" id="t375" style="left:731.50px;top:88.00px;font-family:'Liberation Mono',monospace;font-size:8.2px;color:#cfcdc8;font-weight:400;transform:scaleX(0.7490);">[ 32] 377.00-378.00 sec  1.62 MBytes  13.6 Mbits/sec    2   12.7 KBytes</span>
<span class="t" id="t376" style="left:731.50px;top:103.00px;font-family:'Liberation Mono',monospace;font-size:8.2px;color:#cfcdc8;font-weight:400;transform:scaleX(0.7490);">[ 34] 377.00-378.00 sec  1.62 MBytes  13.6 Mbits/sec    0   18.4 KBytes</span>
<span class="t" id="t377" style="left:731.50px;top:117.00px;font-family:'Liberation Mono',monospace;font-size:8.2px;color:#cfcdc8;font-weight:400;transform:scaleX(0.7490);">[ 36] 377.00-378.00 sec  1.62 MBytes  13.6 Mbits/sec    2   14.1 KBytes</span>
<span class="t" id="t378" style="left:731.50px;top:132.00px;font-family:'Liberation Mono',monospace;font-size:8.2px;color:#cfcdc8;font-weight:400;transform:scaleX(0.7490);">[ 38] 377.00-378.00 sec  1.62 MBytes  13.6 Mbits/sec    0   17.0 KBytes</span>
<span class="t" id="t379" style="left:731.50px;top:147.00px;font-family:'Liberation Mono',monospace;font-size:8.2px;color:#cfcdc8;font-weight:400;transform:scaleX(0.7490);">[ 40] 377.00-378.00 sec  1.62 MBytes  13.6 Mbits/sec    3   14.1 KBytes</span>
<span class="t" id="t380" style="left:731.50px;top:162.00px;font-family:'Liberation Mono',monospace;font-size:8.2px;color:#cfcdc8;font-weight:400;transform:scaleX(0.7490);">[ 42] 377.00-378.00 sec  1.62 MBytes  13.6 Mbits/sec    2   12.7 KBytes</span>
<span class="t" id="t381" style="left:731.50px;top:176.00px;font-family:'Liberation Mono',monospace;font-size:8.2px;color:#cfcdc8;font-weight:400;transform:scaleX(0.7490);">[SUM] 377.00-378.00 sec  32.3 MBytes   271 Mbits/sec   26</span>
<span class="t" id="t382" style="left:731.50px;top:184.00px;font-family:'Liberation Mono',monospace;font-size:8.2px;color:#bdbbb6;font-weight:400;transform:scaleX(0.7489);">- - - - - - - - - - - - - - - - - - - - - - - - -</span>
<span class="t" id="t383" style="left:731.50px;top:191.00px;font-family:'Liberation Mono',monospace;font-size:8.2px;color:#cfcdc8;font-weight:400;transform:scaleX(0.7490);">[  4] 378.00-379.00 sec  1.55 MBytes  13.0 Mbits/sec    5   11.3 KBytes</span>
<span class="t" id="t384" style="left:731.50px;top:206.00px;font-family:'Liberation Mono',monospace;font-size:8.2px;color:#cfcdc8;font-weight:400;transform:scaleX(0.7490);">[  6] 378.00-379.00 sec  1.56 MBytes  13.1 Mbits/sec    3   9.90 KBytes</span>
<span class="t" id="t385" style="left:731.50px;top:220.00px;font-family:'Liberation Mono',monospace;font-size:8.2px;color:#cfcdc8;font-weight:400;transform:scaleX(0.7490);">[  8] 378.00-379.00 sec  1.62 MBytes  13.6 Mbits/sec    4   12.7 KBytes</span>
<span class="t" id="t386" style="left:731.50px;top:235.00px;font-family:'Liberation Mono',monospace;font-size:8.2px;color:#cfcdc8;font-weight:400;transform:scaleX(0.7490);">[ 10] 378.00-379.00 sec  1.62 MBytes  13.6 Mbits/sec    6   11.3 KBytes</span>
<span class="t" id="t387" style="left:731.50px;top:250.00px;font-family:'Liberation Mono',monospace;font-size:8.2px;color:#cfcdc8;font-weight:400;transform:scaleX(0.7490);">[ 12] 378.00-379.00 sec  1.62 MBytes  13.6 Mbits/sec    4   12.7 KBytes</span>
<span class="t" id="t388" style="left:731.50px;top:264.00px;font-family:'Liberation Mono',monospace;font-size:8.2px;color:#cfcdc8;font-weight:400;transform:scaleX(0.7490);">[ 14] 378.00-379.00 sec  1.62 MBytes  13.6 Mbits/sec    5   12.7 KBytes</span>
<span class="t" id="t389" style="left:731.50px;top:279.00px;font-family:'Liberation Mono',monospace;font-size:8.2px;color:#cfcdc8;font-weight:400;transform:scaleX(0.7490);">[ 16] 378.00-379.00 sec  1.62 MBytes  13.6 Mbits/sec    6   11.3 KBytes</span>
<span class="t" id="t390" style="left:731.50px;top:294.00px;font-family:'Liberation Mono',monospace;font-size:8.2px;color:#cfcdc8;font-weight:400;transform:scaleX(0.7490);">[ 18] 378.00-379.00 sec  1.62 MBytes  13.6 Mbits/sec    5   12.7 KBytes</span>
<span class="t" id="t391" style="left:731.50px;top:309.00px;font-family:'Liberation Mono',monospace;font-size:8.2px;color:#cfcdc8;font-weight:400;transform:scaleX(0.7490);">[ 20] 378.00-379.00 sec  1.62 MBytes  13.6 Mbits/sec    4   12.7 KBytes</span>
<span class="t" id="t392" style="left:731.50px;top:323.00px;font-family:'Liberation Mono',monospace;font-size:8.2px;color:#cfcdc8;font-weight:400;transform:scaleX(0.7490);">[ 22] 378.00-379.00 sec  1.62 MBytes  13.6 Mbits/sec    4   12.7 KBytes</span>
<span class="t" id="t393" style="left:731.50px;top:338.00px;font-family:'Liberation Mono',monospace;font-size:8.2px;color:#cfcdc8;font-weight:400;transform:scaleX(0.7490);">[ 24] 378.00-379.00 sec  1.62 MBytes  13.6 Mbits/sec    5   11.3 KBytes</span>
<span class="t" id="t394" style="left:731.50px;top:353.00px;font-family:'Liberation Mono',monospace;font-size:8.2px;color:#cfcdc8;font-weight:400;transform:scaleX(0.7490);">[ 26] 378.00-379.00 sec  1.55 MBytes  13.0 Mbits/sec    4   12.7 KBytes</span>
<span class="t" id="t395" style="left:731.50px;top:367.00px;font-family:'Liberation Mono',monospace;font-size:8.2px;color:#cfcdc8;font-weight:400;transform:scaleX(0.7490);">[ 28] 378.00-379.00 sec  1.62 MBytes  13.6 Mbits/sec    4   11.3 KBytes</span>
<span class="t" id="t396" style="left:731.50px;top:382.00px;font-family:'Liberation Mono',monospace;font-size:8.2px;color:#cfcdc8;font-weight:400;transform:scaleX(0.7490);">[ 30] 378.00-379.00 sec  1.62 MBytes  13.6 Mbits/sec    4   12.7 KBytes</span>
<span class="t" id="t397" style="left:731.50px;top:397.00px;font-family:'Liberation Mono',monospace;font-size:8.2px;color:#cfcdc8;font-weight:400;transform:scaleX(0.7490);">[ 32] 378.00-379.00 sec  1.62 MBytes  13.6 Mbits/sec    6   11.3 KBytes</span>
<span class="t" id="t398" style="left:731.50px;top:411.00px;font-family:'Liberation Mono',monospace;font-size:8.2px;color:#cfcdc8;font-weight:400;transform:scaleX(0.7490);">[ 34] 378.00-379.00 sec  1.62 MBytes  13.6 Mbits/sec    6   12.7 KBytes</span>
<span class="t" id="t399" style="left:731.50px;top:426.00px;font-family:'Liberation Mono',monospace;font-size:8.2px;color:#cfcdc8;font-weight:400;transform:scaleX(0.7490);">[ 36] 378.00-379.00 sec  1.62 MBytes  13.6 Mbits/sec    4   12.7 KBytes</span>
<span class="t" id="t400" style="left:731.50px;top:441.00px;font-family:'Liberation Mono',monospace;font-size:8.2px;color:#cfcdc8;font-weight:400;transform:scaleX(0.7490);">[ 38] 378.00-379.00 sec  1.62 MBytes  13.6 Mbits/sec    3   12.7 KBytes</span>
<span class="t" id="t401" style="left:731.50px;top:456.00px;font-family:'Liberation Mono',monospace;font-size:8.2px;color:#cfcdc8;font-weight:400;transform:scaleX(0.7490);">[ 40] 378.00-379.00 sec  1.62 MBytes  13.6 Mbits/sec    5   12.7 KBytes</span>
<span class="t" id="t402" style="left:731.50px;top:470.00px;font-family:'Liberation Mono',monospace;font-size:8.2px;color:#cfcdc8;font-weight:400;transform:scaleX(0.7490);">[ 42] 378.00-379.00 sec  1.55 MBytes  13.0 Mbits/sec    6   11.3 KBytes</span>
<span class="t" id="t403" style="left:731.50px;top:485.00px;font-family:'Liberation Mono',monospace;font-size:8.2px;color:#cfcdc8;font-weight:400;transform:scaleX(0.7490);">[SUM] 378.00-379.00 sec  32.1 MBytes   269 Mbits/sec   93</span>
<div class="a" style="left:731.8px;top:489.5px;width:4.5px;height:8.5px;background:transparent;border:1px solid #bbb;"></div>
</body></html>
